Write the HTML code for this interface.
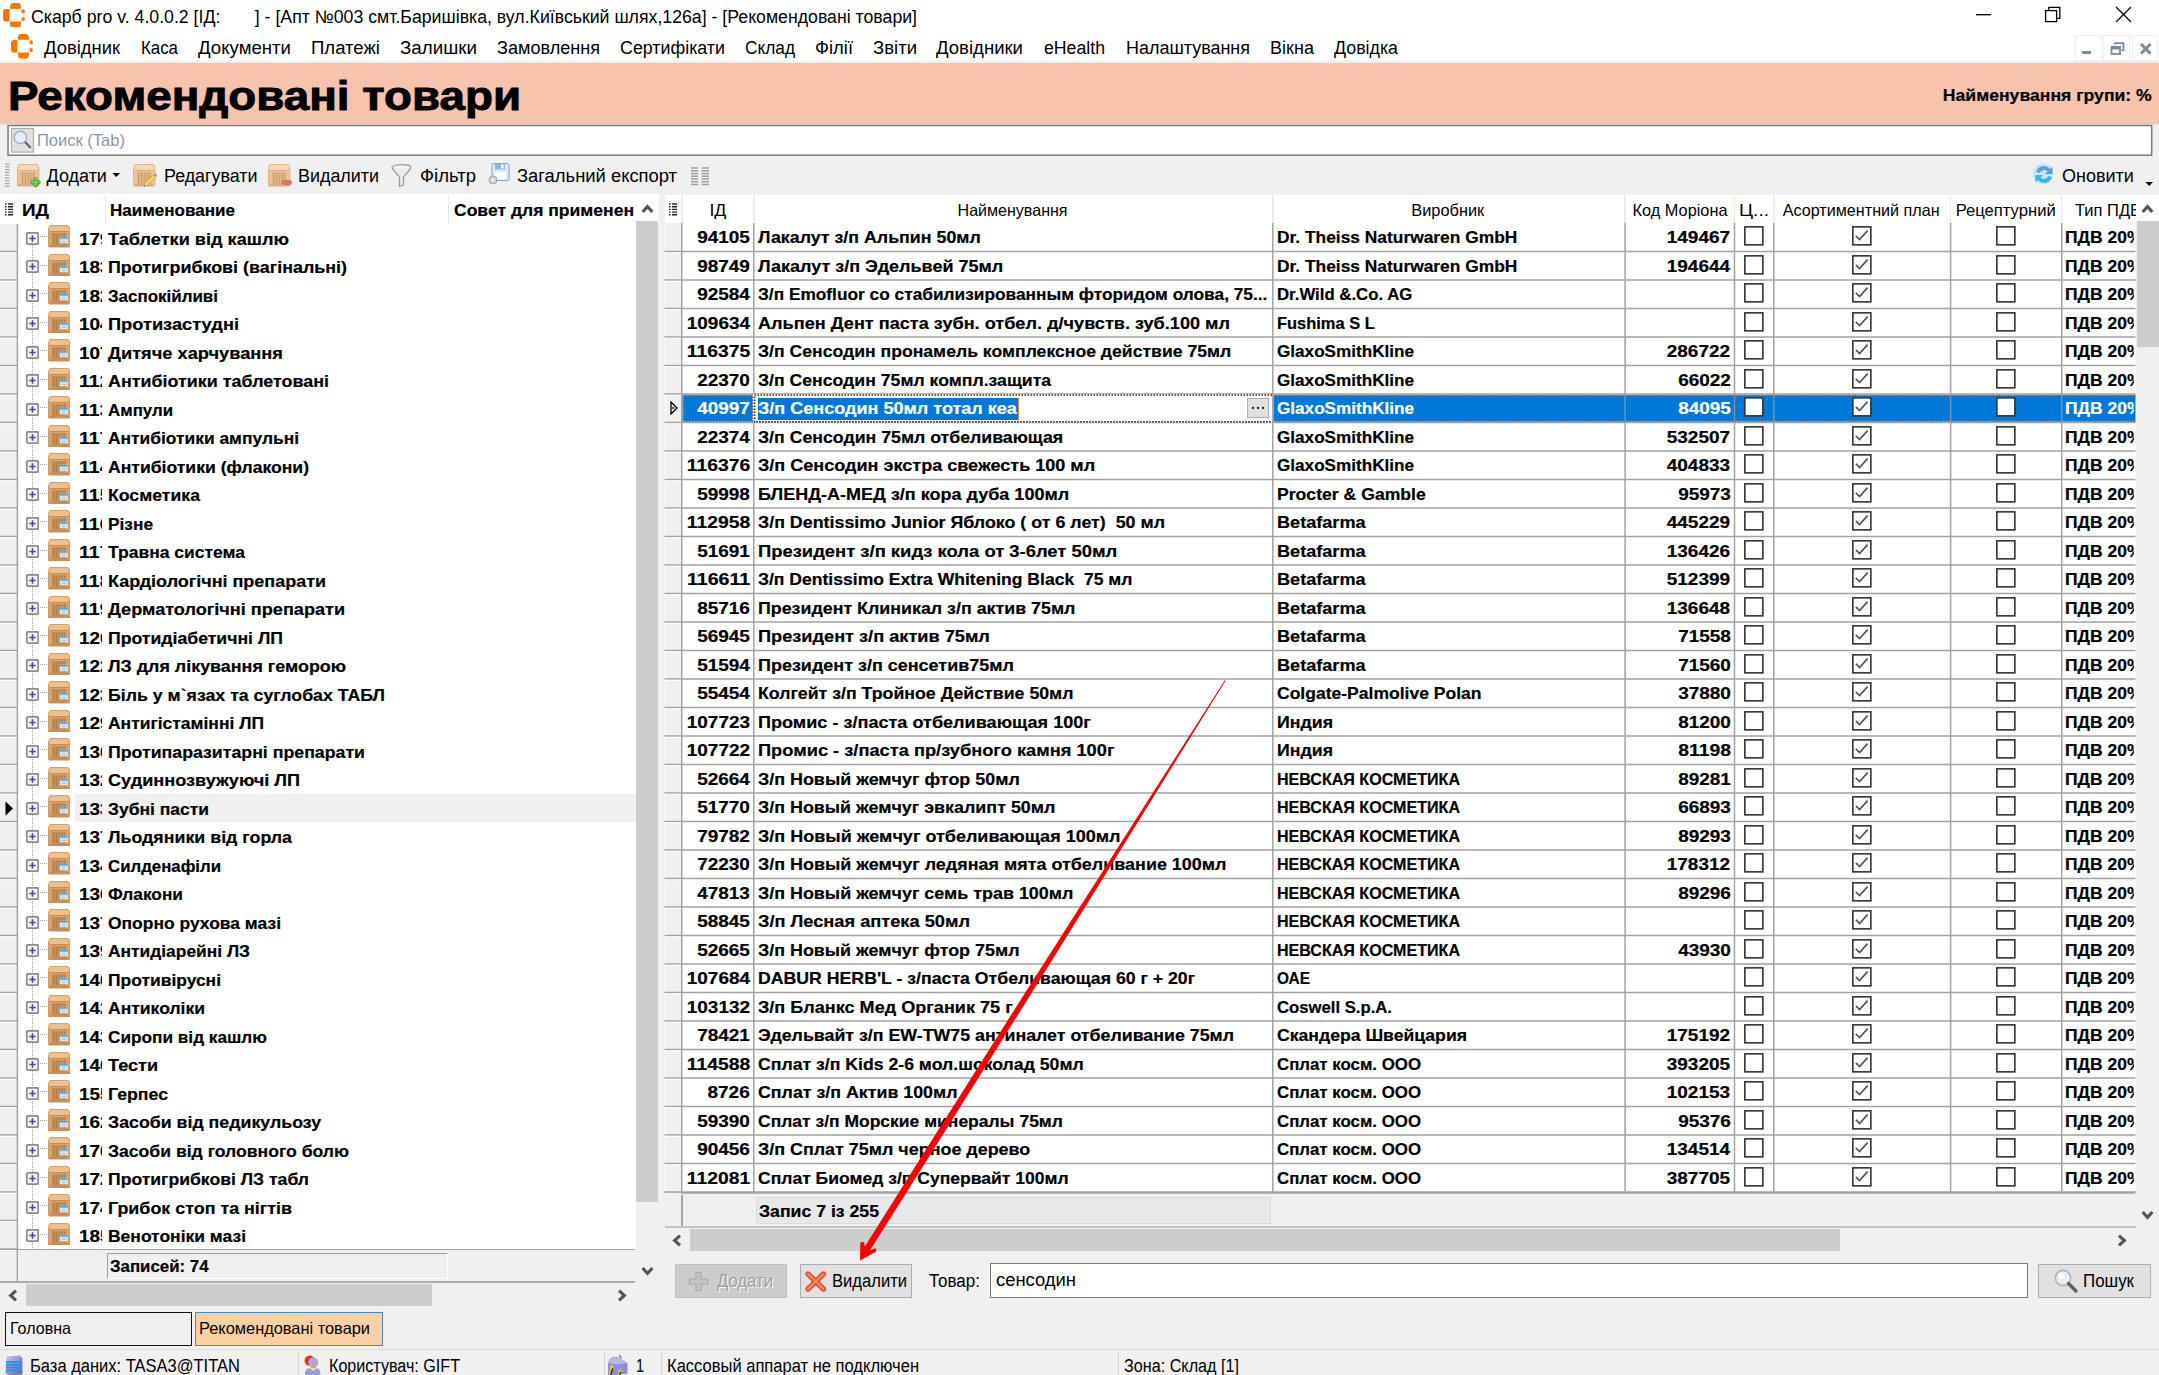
<!DOCTYPE html>
<html lang="uk"><head><meta charset="utf-8"><title>Скарб pro</title><style>html,body{margin:0;padding:0}
body{width:2159px;height:1375px;position:relative;overflow:hidden;background:#f0f0f0;font-family:"Liberation Sans",sans-serif;color:#000}
div,svg,span{position:absolute}
span{white-space:pre;line-height:30px;height:30px}
</style></head><body>
<div style="left:0px;top:0px;width:2159px;height:32px;background:#fff;"></div>
<svg style="left:2.9px;top:2.8px" width="22" height="24.5" viewBox="0 0 22 24.5"><g fill="#ff7400"><path d="M6.7 5.8L7.3 2Q7.7 0 9.7 0H15.2Q17.2 0 17.6 2L18.2 5.8Z"/><path d="M6.7 18.6L7.3 22.4Q7.7 24.4 9.7 24.4H15.2Q17.2 24.4 17.6 22.4L18.2 18.6Z"/><path d="M6.5 5.9H3.2Q0 5.9 0 9V15.4Q0 18.5 3.2 18.5H6.5Z"/><ellipse cx="20.1" cy="8.4" rx="1.75" ry="2.1"/><ellipse cx="20.1" cy="16" rx="1.75" ry="2.1"/></g></svg>
<span style="left:31.00px;top:1.50px;font-size:18px;transform:scaleX(0.9835);transform-origin:0 50%;">Скарб pro v. 4.0.0.2 [ІД:       ] - [Апт №003 смт.Баришівка, вул.Київський шлях,126а] - [Рекомендовані товари]</span>
<svg style="left:1970px;top:0px" width="170" height="32" viewBox="0 0 170 32"><g stroke="#000" stroke-width="1.3" fill="none"><path d="M6 14.7H21"/><rect x="75.6" y="10.6" width="11" height="11" fill="#fff"/><path d="M78.8 10.6V7.4H89.8V18.4H86.6"/><path d="M146 7L161 22M161 7L146 22"/></g></svg>
<div style="left:0px;top:32px;width:2159px;height:29px;background:#fff;"></div>
<svg style="left:11.1px;top:34.2px" width="22" height="24.5" viewBox="0 0 22 24.5"><g fill="#ff7400"><path d="M6.7 5.8L7.3 2Q7.7 0 9.7 0H15.2Q17.2 0 17.6 2L18.2 5.8Z"/><path d="M6.7 18.6L7.3 22.4Q7.7 24.4 9.7 24.4H15.2Q17.2 24.4 17.6 22.4L18.2 18.6Z"/><path d="M6.5 5.9H3.2Q0 5.9 0 9V15.4Q0 18.5 3.2 18.5H6.5Z"/><ellipse cx="20.1" cy="8.4" rx="1.75" ry="2.1"/><ellipse cx="20.1" cy="16" rx="1.75" ry="2.1"/></g></svg>
<span style="left:44.00px;top:32.50px;font-size:18px;transform:scaleX(1.0223);transform-origin:0 50%;">Довідник</span>
<span style="left:141.00px;top:32.50px;font-size:18px;transform:scaleX(0.9363);transform-origin:0 50%;">Каса</span>
<span style="left:198.00px;top:32.50px;font-size:18px;transform:scaleX(1.0344);transform-origin:0 50%;">Документи</span>
<span style="left:311.00px;top:32.50px;font-size:18px;transform:scaleX(1.0306);transform-origin:0 50%;">Платежі</span>
<span style="left:400.00px;top:32.50px;font-size:18px;transform:scaleX(1.0432);transform-origin:0 50%;">Залишки</span>
<span style="left:497.00px;top:32.50px;font-size:18px;transform:scaleX(1.0043);transform-origin:0 50%;">Замовлення</span>
<span style="left:620.00px;top:32.50px;font-size:18px;transform:scaleX(0.9913);transform-origin:0 50%;">Сертифікати</span>
<span style="left:745.00px;top:32.50px;font-size:18px;transform:scaleX(0.9598);transform-origin:0 50%;">Склад</span>
<span style="left:815.00px;top:32.50px;font-size:18px;transform:scaleX(1.0218);transform-origin:0 50%;">Філії</span>
<span style="left:873.00px;top:32.50px;font-size:18px;transform:scaleX(1.0296);transform-origin:0 50%;">Звіти</span>
<span style="left:936.00px;top:32.50px;font-size:18px;transform:scaleX(1.0307);transform-origin:0 50%;">Довідники</span>
<span style="left:1044.00px;top:32.50px;font-size:18px;transform:scaleX(0.9831);transform-origin:0 50%;">eHealth</span>
<span style="left:1126.00px;top:32.50px;font-size:18px;transform:scaleX(0.9966);transform-origin:0 50%;">Налаштування</span>
<span style="left:1270.00px;top:32.50px;font-size:18px;transform:scaleX(1.0036);transform-origin:0 50%;">Вікна</span>
<span style="left:1334.00px;top:32.50px;font-size:18px;transform:scaleX(0.9884);transform-origin:0 50%;">Довідка</span>
<div style="left:2075px;top:35px;width:26.5px;height:26px;background:#fff;border:1.5px solid #f0f0f0;box-sizing:border-box;"></div>
<div style="left:2103px;top:35px;width:26.5px;height:26px;background:#fff;border:1.5px solid #f0f0f0;box-sizing:border-box;"></div>
<div style="left:2131.5px;top:35px;width:26.5px;height:26px;background:#fff;border:1.5px solid #f0f0f0;box-sizing:border-box;"></div>
<svg style="left:2075px;top:35px" width="84" height="26" viewBox="0 0 84 26"><g fill="none" stroke="#7b8a9c"><path d="M7 17.5H16" stroke-width="3"/><rect x="36.5" y="12" width="8.5" height="7" stroke-width="1.8"/><path d="M36.5 13H45" stroke-width="3"/><path d="M40 9.5V8.2H48.5V15H46.5" stroke-width="1.8"/><path d="M66 9L75.5 18.5M75.5 9L66 18.5" stroke-width="3"/></g></svg>
<svg style="left:0;top:60px" width="2159" height="100" viewBox="0 60 2159 100"><rect x="0" y="62.9" width="2159" height="61.5" fill="#f7c3ad"/><rect x="8.05" y="125.5" width="2143.6" height="29.7" fill="#fff" stroke="#7a7a7a" stroke-width="1.5"/><rect x="11.5" y="128.5" width="22" height="23.6" fill="#e1e1e1" stroke="#adadad" stroke-width="1.2"/><circle cx="20.4" cy="137.4" r="6.2" fill="#e6eefb" stroke="#9fadc2" stroke-width="1.5"/><path d="M25.6 142.6L30.2 147.2" stroke="#666" stroke-width="2.3" stroke-linecap="round"/></svg>
<span style="left:8.00px;top:80.50px;font-weight:bold;font-size:40px;-webkit-text-stroke:0.9px #000;transform:scaleX(1.1434);transform-origin:0 50%;">Рекомендовані товари</span>
<span style="left:1956.22px;top:79.50px;font-weight:bold;font-size:16.5px;-webkit-text-stroke:0.2px;transform:scaleX(1.0675);transform-origin:100% 50%;">Найменування групи: %</span>
<span style="left:37.00px;top:125.00px;font-size:16.5px;color:#8f94ae;">Поиск (Tab)</span>
<svg style="left:5px;top:163px" width="5" height="24" viewBox="0 0 5 24"><path d="M0 1.0H4.5" stroke="#a8a8a8" stroke-width="1.3"/><path d="M0 3.8H4.5" stroke="#a8a8a8" stroke-width="1.3"/><path d="M0 6.6H4.5" stroke="#a8a8a8" stroke-width="1.3"/><path d="M0 9.399999999999999H4.5" stroke="#a8a8a8" stroke-width="1.3"/><path d="M0 12.2H4.5" stroke="#a8a8a8" stroke-width="1.3"/><path d="M0 15.0H4.5" stroke="#a8a8a8" stroke-width="1.3"/><path d="M0 17.799999999999997H4.5" stroke="#a8a8a8" stroke-width="1.3"/><path d="M0 20.599999999999998H4.5" stroke="#a8a8a8" stroke-width="1.3"/><path d="M0 23.4H4.5" stroke="#a8a8a8" stroke-width="1.3"/></svg>
<svg style="left:16.5px;top:163.5px" width="26" height="25" viewBox="0 0 26 25"><path d="M3 0.4H19.3Q20.4 0.4 20.9 1.3L21.9 4.6V21Q21.9 22.1 20.8 22.1H1.5Q0.4 22.1 0.4 21V4.6L1.4 1.3Q1.9 0.4 3 0.4Z" fill="#ecc49a" stroke="#d7a878" stroke-width="0.8"/><path d="M3.1 0.9H19.2Q20 0.9 20.4 1.6L21.4 4.8L19.9 6.2H2.4L0.9 4.8L1.9 1.6Q2.3 0.9 3.1 0.9Z" fill="#f6d8b5"/><path d="M2.3 6.5H20" stroke="#d3a475" stroke-width="0.8"/><rect x="4.1" y="8.3" width="14.1" height="10.6" fill="#e3b688"/><path d="M5.6 8.3V18.9M8.4 8.3V18.9M11.2 8.3V18.9M14 8.3V18.9M16.8 8.3V18.9" stroke="#cc9b6a" stroke-width="1"/><path d="M0.8 21.1Q0.9 21.8 1.6 21.8H20.7Q21.4 21.8 21.5 21.1L18.2 18.9H4.1Z" fill="#d3a475" opacity=".7"/><g stroke="#35a035" stroke-width="4.2" stroke-linecap="round"><path d="M15.600000000000001 18.3H21.6M18.6 15.3V21.3"/></g><g stroke="#6fd24f" stroke-width="2.4" stroke-linecap="round"><path d="M15.600000000000001 18.3H21.6M18.6 15.3V21.3"/></g></svg>
<span style="left:46.50px;top:161.00px;font-size:18px;">Додати</span>
<svg style="left:112px;top:172px" width="9" height="6" viewBox="0 0 9 6"><path d="M0.5 1H8L4.25 5Z" fill="#000"/></svg>
<svg style="left:133px;top:163.5px" width="26" height="25" viewBox="0 0 26 25"><path d="M3 0.4H19.3Q20.4 0.4 20.9 1.3L21.9 4.6V21Q21.9 22.1 20.8 22.1H1.5Q0.4 22.1 0.4 21V4.6L1.4 1.3Q1.9 0.4 3 0.4Z" fill="#ecc49a" stroke="#d7a878" stroke-width="0.8"/><path d="M3.1 0.9H19.2Q20 0.9 20.4 1.6L21.4 4.8L19.9 6.2H2.4L0.9 4.8L1.9 1.6Q2.3 0.9 3.1 0.9Z" fill="#f6d8b5"/><path d="M2.3 6.5H20" stroke="#d3a475" stroke-width="0.8"/><rect x="4.1" y="8.3" width="14.1" height="10.6" fill="#e3b688"/><path d="M5.6 8.3V18.9M8.4 8.3V18.9M11.2 8.3V18.9M14 8.3V18.9M16.8 8.3V18.9" stroke="#cc9b6a" stroke-width="1"/><path d="M0.8 21.1Q0.9 21.8 1.6 21.8H20.7Q21.4 21.8 21.5 21.1L18.2 18.9H4.1Z" fill="#d3a475" opacity=".7"/><path d="M11 22.5L12.6 18.4L20.6 10.4L23 12.8L15 20.8Z" fill="#f0d860" stroke="#b39a3a" stroke-width="0.6"/><path d="M20.6 10.4L21.8 9.2L24.2 11.6L23 12.8Z" fill="#ee7070"/><path d="M11 22.5L12.6 18.4L15 20.8Z" fill="#ecd2ac"/><path d="M11 22.5l.6-1.6 1 1z" fill="#333"/></svg>
<span style="left:163.50px;top:161.00px;font-size:18px;transform:scaleX(0.9927);transform-origin:0 50%;">Редагувати</span>
<svg style="left:268px;top:163.5px" width="26" height="25" viewBox="0 0 26 25"><path d="M3 0.4H19.3Q20.4 0.4 20.9 1.3L21.9 4.6V21Q21.9 22.1 20.8 22.1H1.5Q0.4 22.1 0.4 21V4.6L1.4 1.3Q1.9 0.4 3 0.4Z" fill="#ecc49a" stroke="#d7a878" stroke-width="0.8"/><path d="M3.1 0.9H19.2Q20 0.9 20.4 1.6L21.4 4.8L19.9 6.2H2.4L0.9 4.8L1.9 1.6Q2.3 0.9 3.1 0.9Z" fill="#f6d8b5"/><path d="M2.3 6.5H20" stroke="#d3a475" stroke-width="0.8"/><rect x="4.1" y="8.3" width="14.1" height="10.6" fill="#e3b688"/><path d="M5.6 8.3V18.9M8.4 8.3V18.9M11.2 8.3V18.9M14 8.3V18.9M16.8 8.3V18.9" stroke="#cc9b6a" stroke-width="1"/><path d="M0.8 21.1Q0.9 21.8 1.6 21.8H20.7Q21.4 21.8 21.5 21.1L18.2 18.9H4.1Z" fill="#d3a475" opacity=".7"/><rect x="14" y="16.6" width="9.6" height="3.8" rx="1.9" fill="#ea7474" stroke="#d05050" stroke-width="0.7"/></svg>
<span style="left:298.00px;top:161.00px;font-size:18px;transform:scaleX(0.9946);transform-origin:0 50%;">Видалити</span>
<svg style="left:390px;top:163px" width="24" height="26" viewBox="0 0 24 26"><ellipse cx="11.5" cy="4.5" rx="9.5" ry="2.8" fill="#f4f4f4" stroke="#9a9a9a" stroke-width="1.2"/><path d="M2.2 5.5L9.5 14V23.5L13.5 22V14L20.8 5.5" fill="#ececec" stroke="#9a9a9a" stroke-width="1.2"/></svg>
<span style="left:420.00px;top:161.00px;font-size:18px;transform:scaleX(1.0290);transform-origin:0 50%;">Фільтр</span>
<svg style="left:487px;top:162px" width="24" height="26" viewBox="0 0 24 26"><rect x="5" y="1.5" width="17" height="17" rx="1.5" fill="#dfeaf5" stroke="#7fa3c8"/><rect x="8" y="1.5" width="10" height="6" fill="#8fb4dc"/><rect x="14" y="2.5" width="2.5" height="4" fill="#fff"/><rect x="8" y="10.5" width="11" height="7" fill="#fff"/><circle cx="6" cy="18" r="4" fill="#c9d3dd" stroke="#9aa6b2"/><circle cx="6" cy="18" r="1.4" fill="#eef2f6"/></svg>
<span style="left:517.00px;top:161.00px;font-size:18px;transform:scaleX(1.0210);transform-origin:0 50%;">Загальний експорт</span>
<svg style="left:691px;top:167px" width="19" height="19" viewBox="0 0 19 19"><path d="M0 1.0H7M10.5 1.0H18" stroke="#a0a0a0" stroke-width="1.3"/><path d="M0 3.75H7M10.5 3.75H18" stroke="#a0a0a0" stroke-width="1.3"/><path d="M0 6.5H7M10.5 6.5H18" stroke="#a0a0a0" stroke-width="1.3"/><path d="M0 9.25H7M10.5 9.25H18" stroke="#a0a0a0" stroke-width="1.3"/><path d="M0 12.0H7M10.5 12.0H18" stroke="#a0a0a0" stroke-width="1.3"/><path d="M0 14.75H7M10.5 14.75H18" stroke="#a0a0a0" stroke-width="1.3"/><path d="M0 17.5H7M10.5 17.5H18" stroke="#a0a0a0" stroke-width="1.3"/></svg>
<svg style="left:2031px;top:162px" width="26" height="26" viewBox="0 0 26 26"><circle cx="12" cy="12" r="10.5" fill="#cfe3f5"/><path d="M5 10A8 8 0 0 1 19 7L21.5 4.5V12H14L16.5 9.5A5 5 0 0 0 8.5 11Z" fill="#5aa0dc"/><path d="M21 15A8 8 0 0 1 7 18L4.5 20.5V13H12L9.5 15.5A5 5 0 0 0 17.5 14Z" fill="#3cb4e6"/></svg>
<span style="left:2062.00px;top:161.30px;font-size:18px;">Оновити</span>
<svg style="left:2145px;top:181px" width="9" height="6" viewBox="0 0 9 6"><path d="M0.5 1H8L4.25 5Z" fill="#000"/></svg>
<div style="left:0px;top:194px;width:658.5px;height:30px;background:#fff;"></div>
<div style="left:0px;top:224px;width:636px;height:1026px;background:#fff;"></div>
<svg style="left:5px;top:203px" width="9" height="13" viewBox="0 0 9 13"><path d="M0 1.0H1.6M3 1.0H8" stroke="#222" stroke-width="1.4"/><path d="M0 3.7H1.6M3 3.7H8" stroke="#222" stroke-width="1.4"/><path d="M0 6.4H1.6M3 6.4H8" stroke="#222" stroke-width="1.4"/><path d="M0 9.100000000000001H1.6M3 9.100000000000001H8" stroke="#222" stroke-width="1.4"/><path d="M0 11.8H1.6M3 11.8H8" stroke="#222" stroke-width="1.4"/></svg>
<span style="left:22.00px;top:194.50px;font-weight:bold;font-size:16.5px;-webkit-text-stroke:0.2px;transform:scaleX(1.1429);transform-origin:0 50%;">ИД</span>
<div style="left:104.5px;top:195px;width:1.5px;height:28px;background:#e8e8e8;"></div>
<span style="left:110.00px;top:194.50px;font-weight:bold;font-size:16.5px;-webkit-text-stroke:0.2px;transform:scaleX(1.0325);transform-origin:0 50%;">Наименование</span>
<div style="left:447.5px;top:195px;width:1.5px;height:28px;background:#e8e8e8;"></div>
<div style="left:454px;top:194px;width:180.5px;height:30px;overflow:hidden">
<span style="left:0.00px;top:0.50px;font-weight:bold;font-size:16.5px;-webkit-text-stroke:0.2px;transform:scaleX(1.0625);transform-origin:0 50%;">Совет для применен</span>
</div>
<div style="left:0px;top:224px;width:17px;height:1058px;background:#f0f0f0;"></div>
<svg style="left:0;top:0" width="40" height="1375" viewBox="0 0 40 1375"><path d="M0 251.50H17" stroke="#a2a2a2" stroke-width="1.5"/><path d="M0 252.80H16.5" stroke="#fff" stroke-width="1"/><path d="M0 280.00H17" stroke="#a2a2a2" stroke-width="1.5"/><path d="M0 281.30H16.5" stroke="#fff" stroke-width="1"/><path d="M0 308.50H17" stroke="#a2a2a2" stroke-width="1.5"/><path d="M0 309.80H16.5" stroke="#fff" stroke-width="1"/><path d="M0 337.00H17" stroke="#a2a2a2" stroke-width="1.5"/><path d="M0 338.30H16.5" stroke="#fff" stroke-width="1"/><path d="M0 365.50H17" stroke="#a2a2a2" stroke-width="1.5"/><path d="M0 366.80H16.5" stroke="#fff" stroke-width="1"/><path d="M0 394.00H17" stroke="#a2a2a2" stroke-width="1.5"/><path d="M0 395.30H16.5" stroke="#fff" stroke-width="1"/><path d="M0 422.50H17" stroke="#a2a2a2" stroke-width="1.5"/><path d="M0 423.80H16.5" stroke="#fff" stroke-width="1"/><path d="M0 451.00H17" stroke="#a2a2a2" stroke-width="1.5"/><path d="M0 452.30H16.5" stroke="#fff" stroke-width="1"/><path d="M0 479.50H17" stroke="#a2a2a2" stroke-width="1.5"/><path d="M0 480.80H16.5" stroke="#fff" stroke-width="1"/><path d="M0 508.00H17" stroke="#a2a2a2" stroke-width="1.5"/><path d="M0 509.30H16.5" stroke="#fff" stroke-width="1"/><path d="M0 536.50H17" stroke="#a2a2a2" stroke-width="1.5"/><path d="M0 537.80H16.5" stroke="#fff" stroke-width="1"/><path d="M0 565.00H17" stroke="#a2a2a2" stroke-width="1.5"/><path d="M0 566.30H16.5" stroke="#fff" stroke-width="1"/><path d="M0 593.50H17" stroke="#a2a2a2" stroke-width="1.5"/><path d="M0 594.80H16.5" stroke="#fff" stroke-width="1"/><path d="M0 622.00H17" stroke="#a2a2a2" stroke-width="1.5"/><path d="M0 623.30H16.5" stroke="#fff" stroke-width="1"/><path d="M0 650.50H17" stroke="#a2a2a2" stroke-width="1.5"/><path d="M0 651.80H16.5" stroke="#fff" stroke-width="1"/><path d="M0 679.00H17" stroke="#a2a2a2" stroke-width="1.5"/><path d="M0 680.30H16.5" stroke="#fff" stroke-width="1"/><path d="M0 707.50H17" stroke="#a2a2a2" stroke-width="1.5"/><path d="M0 708.80H16.5" stroke="#fff" stroke-width="1"/><path d="M0 736.00H17" stroke="#a2a2a2" stroke-width="1.5"/><path d="M0 737.30H16.5" stroke="#fff" stroke-width="1"/><path d="M0 764.50H17" stroke="#a2a2a2" stroke-width="1.5"/><path d="M0 765.80H16.5" stroke="#fff" stroke-width="1"/><path d="M0 793.00H17" stroke="#a2a2a2" stroke-width="1.5"/><path d="M0 794.30H16.5" stroke="#fff" stroke-width="1"/><path d="M0 821.50H17" stroke="#a2a2a2" stroke-width="1.5"/><path d="M0 822.80H16.5" stroke="#fff" stroke-width="1"/><path d="M0 850.00H17" stroke="#a2a2a2" stroke-width="1.5"/><path d="M0 851.30H16.5" stroke="#fff" stroke-width="1"/><path d="M0 878.50H17" stroke="#a2a2a2" stroke-width="1.5"/><path d="M0 879.80H16.5" stroke="#fff" stroke-width="1"/><path d="M0 907.00H17" stroke="#a2a2a2" stroke-width="1.5"/><path d="M0 908.30H16.5" stroke="#fff" stroke-width="1"/><path d="M0 935.50H17" stroke="#a2a2a2" stroke-width="1.5"/><path d="M0 936.80H16.5" stroke="#fff" stroke-width="1"/><path d="M0 964.00H17" stroke="#a2a2a2" stroke-width="1.5"/><path d="M0 965.30H16.5" stroke="#fff" stroke-width="1"/><path d="M0 992.50H17" stroke="#a2a2a2" stroke-width="1.5"/><path d="M0 993.80H16.5" stroke="#fff" stroke-width="1"/><path d="M0 1021.00H17" stroke="#a2a2a2" stroke-width="1.5"/><path d="M0 1022.30H16.5" stroke="#fff" stroke-width="1"/><path d="M0 1049.50H17" stroke="#a2a2a2" stroke-width="1.5"/><path d="M0 1050.80H16.5" stroke="#fff" stroke-width="1"/><path d="M0 1078.00H17" stroke="#a2a2a2" stroke-width="1.5"/><path d="M0 1079.30H16.5" stroke="#fff" stroke-width="1"/><path d="M0 1106.50H17" stroke="#a2a2a2" stroke-width="1.5"/><path d="M0 1107.80H16.5" stroke="#fff" stroke-width="1"/><path d="M0 1135.00H17" stroke="#a2a2a2" stroke-width="1.5"/><path d="M0 1136.30H16.5" stroke="#fff" stroke-width="1"/><path d="M0 1163.50H17" stroke="#a2a2a2" stroke-width="1.5"/><path d="M0 1164.80H16.5" stroke="#fff" stroke-width="1"/><path d="M0 1192.00H17" stroke="#a2a2a2" stroke-width="1.5"/><path d="M0 1193.30H16.5" stroke="#fff" stroke-width="1"/><path d="M0 1220.50H17" stroke="#a2a2a2" stroke-width="1.5"/><path d="M0 1221.80H16.5" stroke="#fff" stroke-width="1"/><path d="M0 1249.00H17" stroke="#a2a2a2" stroke-width="1.5"/><path d="M0 1250.30H16.5" stroke="#fff" stroke-width="1"/><path d="M17.4 224V1282" stroke="#a2a2a2" stroke-width="1.5"/></svg>
<div style="left:75px;top:793.8px;width:561px;height:28.2px;background:#f0f0f0;"></div>
<svg style="left:5px;top:800.5px" width="9" height="15" viewBox="0 0 9 15"><path d="M0.5 0.5L8 7.5L0.5 14.5Z" fill="#000"/></svg>
<div style="left:31.5px;top:245px;width:0;height:1005px;border-left:1.5px dotted #a6a6a6"></div>
<svg style="left:25.75px;top:231.55px" width="13" height="13" viewBox="0 0 13 13"><rect x="0.75" y="0.75" width="11.5" height="11.5" rx="1.6" fill="#f4f4f4" stroke="#8c8c8c" stroke-width="1.8"/><path d="M3.3 6.5H9.7M6.5 3.3V9.7" stroke="#3c50a8" stroke-width="1.6"/></svg>
<div style="left:39.5px;top:236.05px;width:7px;height:0;border-top:1.5px dotted #a6a6a6"></div>
<svg style="left:48.1px;top:225.0px" width="22.3" height="22.5" viewBox="0 0 22.3 22.5"><path d="M3 0.4H19.3Q20.4 0.4 20.9 1.3L21.9 4.6V21Q21.9 22.1 20.8 22.1H1.5Q0.4 22.1 0.4 21V4.6L1.4 1.3Q1.9 0.4 3 0.4Z" fill="#d9a26b" stroke="#c48e57" stroke-width="0.8"/><path d="M3.1 0.9H19.2Q20 0.9 20.4 1.6L21.4 4.8L19.9 6.2H2.4L0.9 4.8L1.9 1.6Q2.3 0.9 3.1 0.9Z" fill="#edc08e"/><path d="M2.3 6.5H20" stroke="#bd8751" stroke-width="0.8"/><rect x="4.1" y="8.3" width="14.1" height="10.6" fill="#c68f58"/><path d="M5.6 8.3V18.9M8.4 8.3V18.9M11.2 8.3V18.9M14 8.3V18.9M16.8 8.3V18.9" stroke="#ae7a47" stroke-width="1"/><path d="M0.8 21.1Q0.9 21.8 1.6 21.8H20.7Q21.4 21.8 21.5 21.1L18.2 18.9H4.1Z" fill="#bd8751" opacity=".7"/><rect x="11.6" y="11.8" width="8.2" height="6.5" fill="#dfeaf1"/><rect x="11.6" y="11.8" width="8.2" height="2" fill="#45a9f3"/><rect x="11.6" y="13.8" width="8.2" height="0.8" fill="#a8d8f8"/><path d="M13.4 16.4H18" stroke="#a9bccb" stroke-width="1"/></svg>
<div style="left:78px;top:224.25px;width:24px;height:28px;overflow:hidden">
<span style="left:1.00px;top:-0.70px;font-weight:bold;font-size:16.5px;-webkit-text-stroke:0.2px;transform:scaleX(1.1442);transform-origin:0 50%;">179</span>
</div>
<span style="left:108.00px;top:223.55px;font-weight:bold;font-size:16.5px;-webkit-text-stroke:0.2px;transform:scaleX(1.1005);transform-origin:0 50%;">Таблетки від кашлю</span>
<svg style="left:25.75px;top:260.05px" width="13" height="13" viewBox="0 0 13 13"><rect x="0.75" y="0.75" width="11.5" height="11.5" rx="1.6" fill="#f4f4f4" stroke="#8c8c8c" stroke-width="1.8"/><path d="M3.3 6.5H9.7M6.5 3.3V9.7" stroke="#3c50a8" stroke-width="1.6"/></svg>
<div style="left:39.5px;top:264.55px;width:7px;height:0;border-top:1.5px dotted #a6a6a6"></div>
<svg style="left:48.1px;top:253.5px" width="22.3" height="22.5" viewBox="0 0 22.3 22.5"><path d="M3 0.4H19.3Q20.4 0.4 20.9 1.3L21.9 4.6V21Q21.9 22.1 20.8 22.1H1.5Q0.4 22.1 0.4 21V4.6L1.4 1.3Q1.9 0.4 3 0.4Z" fill="#d9a26b" stroke="#c48e57" stroke-width="0.8"/><path d="M3.1 0.9H19.2Q20 0.9 20.4 1.6L21.4 4.8L19.9 6.2H2.4L0.9 4.8L1.9 1.6Q2.3 0.9 3.1 0.9Z" fill="#edc08e"/><path d="M2.3 6.5H20" stroke="#bd8751" stroke-width="0.8"/><rect x="4.1" y="8.3" width="14.1" height="10.6" fill="#c68f58"/><path d="M5.6 8.3V18.9M8.4 8.3V18.9M11.2 8.3V18.9M14 8.3V18.9M16.8 8.3V18.9" stroke="#ae7a47" stroke-width="1"/><path d="M0.8 21.1Q0.9 21.8 1.6 21.8H20.7Q21.4 21.8 21.5 21.1L18.2 18.9H4.1Z" fill="#bd8751" opacity=".7"/><rect x="11.6" y="11.8" width="8.2" height="6.5" fill="#dfeaf1"/><rect x="11.6" y="11.8" width="8.2" height="2" fill="#45a9f3"/><rect x="11.6" y="13.8" width="8.2" height="0.8" fill="#a8d8f8"/><path d="M13.4 16.4H18" stroke="#a9bccb" stroke-width="1"/></svg>
<div style="left:78px;top:252.75px;width:24px;height:28px;overflow:hidden">
<span style="left:1.00px;top:-0.70px;font-weight:bold;font-size:16.5px;-webkit-text-stroke:0.2px;transform:scaleX(1.1442);transform-origin:0 50%;">183</span>
</div>
<span style="left:108.00px;top:252.05px;font-weight:bold;font-size:16.5px;-webkit-text-stroke:0.2px;transform:scaleX(1.0843);transform-origin:0 50%;">Протигрибкові (вагінальні)</span>
<svg style="left:25.75px;top:288.55px" width="13" height="13" viewBox="0 0 13 13"><rect x="0.75" y="0.75" width="11.5" height="11.5" rx="1.6" fill="#f4f4f4" stroke="#8c8c8c" stroke-width="1.8"/><path d="M3.3 6.5H9.7M6.5 3.3V9.7" stroke="#3c50a8" stroke-width="1.6"/></svg>
<div style="left:39.5px;top:293.05px;width:7px;height:0;border-top:1.5px dotted #a6a6a6"></div>
<svg style="left:48.1px;top:282.0px" width="22.3" height="22.5" viewBox="0 0 22.3 22.5"><path d="M3 0.4H19.3Q20.4 0.4 20.9 1.3L21.9 4.6V21Q21.9 22.1 20.8 22.1H1.5Q0.4 22.1 0.4 21V4.6L1.4 1.3Q1.9 0.4 3 0.4Z" fill="#d9a26b" stroke="#c48e57" stroke-width="0.8"/><path d="M3.1 0.9H19.2Q20 0.9 20.4 1.6L21.4 4.8L19.9 6.2H2.4L0.9 4.8L1.9 1.6Q2.3 0.9 3.1 0.9Z" fill="#edc08e"/><path d="M2.3 6.5H20" stroke="#bd8751" stroke-width="0.8"/><rect x="4.1" y="8.3" width="14.1" height="10.6" fill="#c68f58"/><path d="M5.6 8.3V18.9M8.4 8.3V18.9M11.2 8.3V18.9M14 8.3V18.9M16.8 8.3V18.9" stroke="#ae7a47" stroke-width="1"/><path d="M0.8 21.1Q0.9 21.8 1.6 21.8H20.7Q21.4 21.8 21.5 21.1L18.2 18.9H4.1Z" fill="#bd8751" opacity=".7"/><rect x="11.6" y="11.8" width="8.2" height="6.5" fill="#dfeaf1"/><rect x="11.6" y="11.8" width="8.2" height="2" fill="#45a9f3"/><rect x="11.6" y="13.8" width="8.2" height="0.8" fill="#a8d8f8"/><path d="M13.4 16.4H18" stroke="#a9bccb" stroke-width="1"/></svg>
<div style="left:78px;top:281.25px;width:24px;height:28px;overflow:hidden">
<span style="left:1.00px;top:-0.70px;font-weight:bold;font-size:16.5px;-webkit-text-stroke:0.2px;transform:scaleX(1.1442);transform-origin:0 50%;">182</span>
</div>
<span style="left:108.00px;top:280.55px;font-weight:bold;font-size:16.5px;-webkit-text-stroke:0.2px;transform:scaleX(1.0273);transform-origin:0 50%;">Заспокійливі</span>
<svg style="left:25.75px;top:317.05px" width="13" height="13" viewBox="0 0 13 13"><rect x="0.75" y="0.75" width="11.5" height="11.5" rx="1.6" fill="#f4f4f4" stroke="#8c8c8c" stroke-width="1.8"/><path d="M3.3 6.5H9.7M6.5 3.3V9.7" stroke="#3c50a8" stroke-width="1.6"/></svg>
<div style="left:39.5px;top:321.55px;width:7px;height:0;border-top:1.5px dotted #a6a6a6"></div>
<svg style="left:48.1px;top:310.5px" width="22.3" height="22.5" viewBox="0 0 22.3 22.5"><path d="M3 0.4H19.3Q20.4 0.4 20.9 1.3L21.9 4.6V21Q21.9 22.1 20.8 22.1H1.5Q0.4 22.1 0.4 21V4.6L1.4 1.3Q1.9 0.4 3 0.4Z" fill="#d9a26b" stroke="#c48e57" stroke-width="0.8"/><path d="M3.1 0.9H19.2Q20 0.9 20.4 1.6L21.4 4.8L19.9 6.2H2.4L0.9 4.8L1.9 1.6Q2.3 0.9 3.1 0.9Z" fill="#edc08e"/><path d="M2.3 6.5H20" stroke="#bd8751" stroke-width="0.8"/><rect x="4.1" y="8.3" width="14.1" height="10.6" fill="#c68f58"/><path d="M5.6 8.3V18.9M8.4 8.3V18.9M11.2 8.3V18.9M14 8.3V18.9M16.8 8.3V18.9" stroke="#ae7a47" stroke-width="1"/><path d="M0.8 21.1Q0.9 21.8 1.6 21.8H20.7Q21.4 21.8 21.5 21.1L18.2 18.9H4.1Z" fill="#bd8751" opacity=".7"/><rect x="11.6" y="11.8" width="8.2" height="6.5" fill="#dfeaf1"/><rect x="11.6" y="11.8" width="8.2" height="2" fill="#45a9f3"/><rect x="11.6" y="13.8" width="8.2" height="0.8" fill="#a8d8f8"/><path d="M13.4 16.4H18" stroke="#a9bccb" stroke-width="1"/></svg>
<div style="left:78px;top:309.75px;width:24px;height:28px;overflow:hidden">
<span style="left:1.00px;top:-0.70px;font-weight:bold;font-size:16.5px;-webkit-text-stroke:0.2px;transform:scaleX(1.1442);transform-origin:0 50%;">104</span>
</div>
<span style="left:108.00px;top:309.05px;font-weight:bold;font-size:16.5px;-webkit-text-stroke:0.2px;transform:scaleX(1.1059);transform-origin:0 50%;">Протизастудні</span>
<svg style="left:25.75px;top:345.55px" width="13" height="13" viewBox="0 0 13 13"><rect x="0.75" y="0.75" width="11.5" height="11.5" rx="1.6" fill="#f4f4f4" stroke="#8c8c8c" stroke-width="1.8"/><path d="M3.3 6.5H9.7M6.5 3.3V9.7" stroke="#3c50a8" stroke-width="1.6"/></svg>
<div style="left:39.5px;top:350.05px;width:7px;height:0;border-top:1.5px dotted #a6a6a6"></div>
<svg style="left:48.1px;top:339.0px" width="22.3" height="22.5" viewBox="0 0 22.3 22.5"><path d="M3 0.4H19.3Q20.4 0.4 20.9 1.3L21.9 4.6V21Q21.9 22.1 20.8 22.1H1.5Q0.4 22.1 0.4 21V4.6L1.4 1.3Q1.9 0.4 3 0.4Z" fill="#d9a26b" stroke="#c48e57" stroke-width="0.8"/><path d="M3.1 0.9H19.2Q20 0.9 20.4 1.6L21.4 4.8L19.9 6.2H2.4L0.9 4.8L1.9 1.6Q2.3 0.9 3.1 0.9Z" fill="#edc08e"/><path d="M2.3 6.5H20" stroke="#bd8751" stroke-width="0.8"/><rect x="4.1" y="8.3" width="14.1" height="10.6" fill="#c68f58"/><path d="M5.6 8.3V18.9M8.4 8.3V18.9M11.2 8.3V18.9M14 8.3V18.9M16.8 8.3V18.9" stroke="#ae7a47" stroke-width="1"/><path d="M0.8 21.1Q0.9 21.8 1.6 21.8H20.7Q21.4 21.8 21.5 21.1L18.2 18.9H4.1Z" fill="#bd8751" opacity=".7"/><rect x="11.6" y="11.8" width="8.2" height="6.5" fill="#dfeaf1"/><rect x="11.6" y="11.8" width="8.2" height="2" fill="#45a9f3"/><rect x="11.6" y="13.8" width="8.2" height="0.8" fill="#a8d8f8"/><path d="M13.4 16.4H18" stroke="#a9bccb" stroke-width="1"/></svg>
<div style="left:78px;top:338.25px;width:24px;height:28px;overflow:hidden">
<span style="left:1.00px;top:-0.70px;font-weight:bold;font-size:16.5px;-webkit-text-stroke:0.2px;transform:scaleX(1.1442);transform-origin:0 50%;">107</span>
</div>
<span style="left:108.00px;top:337.55px;font-weight:bold;font-size:16.5px;-webkit-text-stroke:0.2px;transform:scaleX(1.1049);transform-origin:0 50%;">Дитяче харчування</span>
<svg style="left:25.75px;top:374.05px" width="13" height="13" viewBox="0 0 13 13"><rect x="0.75" y="0.75" width="11.5" height="11.5" rx="1.6" fill="#f4f4f4" stroke="#8c8c8c" stroke-width="1.8"/><path d="M3.3 6.5H9.7M6.5 3.3V9.7" stroke="#3c50a8" stroke-width="1.6"/></svg>
<div style="left:39.5px;top:378.55px;width:7px;height:0;border-top:1.5px dotted #a6a6a6"></div>
<svg style="left:48.1px;top:367.5px" width="22.3" height="22.5" viewBox="0 0 22.3 22.5"><path d="M3 0.4H19.3Q20.4 0.4 20.9 1.3L21.9 4.6V21Q21.9 22.1 20.8 22.1H1.5Q0.4 22.1 0.4 21V4.6L1.4 1.3Q1.9 0.4 3 0.4Z" fill="#d9a26b" stroke="#c48e57" stroke-width="0.8"/><path d="M3.1 0.9H19.2Q20 0.9 20.4 1.6L21.4 4.8L19.9 6.2H2.4L0.9 4.8L1.9 1.6Q2.3 0.9 3.1 0.9Z" fill="#edc08e"/><path d="M2.3 6.5H20" stroke="#bd8751" stroke-width="0.8"/><rect x="4.1" y="8.3" width="14.1" height="10.6" fill="#c68f58"/><path d="M5.6 8.3V18.9M8.4 8.3V18.9M11.2 8.3V18.9M14 8.3V18.9M16.8 8.3V18.9" stroke="#ae7a47" stroke-width="1"/><path d="M0.8 21.1Q0.9 21.8 1.6 21.8H20.7Q21.4 21.8 21.5 21.1L18.2 18.9H4.1Z" fill="#bd8751" opacity=".7"/><rect x="11.6" y="11.8" width="8.2" height="6.5" fill="#dfeaf1"/><rect x="11.6" y="11.8" width="8.2" height="2" fill="#45a9f3"/><rect x="11.6" y="13.8" width="8.2" height="0.8" fill="#a8d8f8"/><path d="M13.4 16.4H18" stroke="#a9bccb" stroke-width="1"/></svg>
<div style="left:78px;top:366.75px;width:24px;height:28px;overflow:hidden">
<span style="left:1.00px;top:-0.70px;font-weight:bold;font-size:16.5px;-webkit-text-stroke:0.2px;transform:scaleX(1.1831);transform-origin:0 50%;">112</span>
</div>
<span style="left:108.00px;top:366.05px;font-weight:bold;font-size:16.5px;-webkit-text-stroke:0.2px;transform:scaleX(1.0853);transform-origin:0 50%;">Антибіотики таблетовані</span>
<svg style="left:25.75px;top:402.55px" width="13" height="13" viewBox="0 0 13 13"><rect x="0.75" y="0.75" width="11.5" height="11.5" rx="1.6" fill="#f4f4f4" stroke="#8c8c8c" stroke-width="1.8"/><path d="M3.3 6.5H9.7M6.5 3.3V9.7" stroke="#3c50a8" stroke-width="1.6"/></svg>
<div style="left:39.5px;top:407.05px;width:7px;height:0;border-top:1.5px dotted #a6a6a6"></div>
<svg style="left:48.1px;top:396.0px" width="22.3" height="22.5" viewBox="0 0 22.3 22.5"><path d="M3 0.4H19.3Q20.4 0.4 20.9 1.3L21.9 4.6V21Q21.9 22.1 20.8 22.1H1.5Q0.4 22.1 0.4 21V4.6L1.4 1.3Q1.9 0.4 3 0.4Z" fill="#d9a26b" stroke="#c48e57" stroke-width="0.8"/><path d="M3.1 0.9H19.2Q20 0.9 20.4 1.6L21.4 4.8L19.9 6.2H2.4L0.9 4.8L1.9 1.6Q2.3 0.9 3.1 0.9Z" fill="#edc08e"/><path d="M2.3 6.5H20" stroke="#bd8751" stroke-width="0.8"/><rect x="4.1" y="8.3" width="14.1" height="10.6" fill="#c68f58"/><path d="M5.6 8.3V18.9M8.4 8.3V18.9M11.2 8.3V18.9M14 8.3V18.9M16.8 8.3V18.9" stroke="#ae7a47" stroke-width="1"/><path d="M0.8 21.1Q0.9 21.8 1.6 21.8H20.7Q21.4 21.8 21.5 21.1L18.2 18.9H4.1Z" fill="#bd8751" opacity=".7"/><rect x="11.6" y="11.8" width="8.2" height="6.5" fill="#dfeaf1"/><rect x="11.6" y="11.8" width="8.2" height="2" fill="#45a9f3"/><rect x="11.6" y="13.8" width="8.2" height="0.8" fill="#a8d8f8"/><path d="M13.4 16.4H18" stroke="#a9bccb" stroke-width="1"/></svg>
<div style="left:78px;top:395.25px;width:24px;height:28px;overflow:hidden">
<span style="left:1.00px;top:-0.70px;font-weight:bold;font-size:16.5px;-webkit-text-stroke:0.2px;transform:scaleX(1.1831);transform-origin:0 50%;">113</span>
</div>
<span style="left:108.00px;top:394.55px;font-weight:bold;font-size:16.5px;-webkit-text-stroke:0.2px;transform:scaleX(1.0209);transform-origin:0 50%;">Ампули</span>
<svg style="left:25.75px;top:431.05px" width="13" height="13" viewBox="0 0 13 13"><rect x="0.75" y="0.75" width="11.5" height="11.5" rx="1.6" fill="#f4f4f4" stroke="#8c8c8c" stroke-width="1.8"/><path d="M3.3 6.5H9.7M6.5 3.3V9.7" stroke="#3c50a8" stroke-width="1.6"/></svg>
<div style="left:39.5px;top:435.55px;width:7px;height:0;border-top:1.5px dotted #a6a6a6"></div>
<svg style="left:48.1px;top:424.5px" width="22.3" height="22.5" viewBox="0 0 22.3 22.5"><path d="M3 0.4H19.3Q20.4 0.4 20.9 1.3L21.9 4.6V21Q21.9 22.1 20.8 22.1H1.5Q0.4 22.1 0.4 21V4.6L1.4 1.3Q1.9 0.4 3 0.4Z" fill="#d9a26b" stroke="#c48e57" stroke-width="0.8"/><path d="M3.1 0.9H19.2Q20 0.9 20.4 1.6L21.4 4.8L19.9 6.2H2.4L0.9 4.8L1.9 1.6Q2.3 0.9 3.1 0.9Z" fill="#edc08e"/><path d="M2.3 6.5H20" stroke="#bd8751" stroke-width="0.8"/><rect x="4.1" y="8.3" width="14.1" height="10.6" fill="#c68f58"/><path d="M5.6 8.3V18.9M8.4 8.3V18.9M11.2 8.3V18.9M14 8.3V18.9M16.8 8.3V18.9" stroke="#ae7a47" stroke-width="1"/><path d="M0.8 21.1Q0.9 21.8 1.6 21.8H20.7Q21.4 21.8 21.5 21.1L18.2 18.9H4.1Z" fill="#bd8751" opacity=".7"/><rect x="11.6" y="11.8" width="8.2" height="6.5" fill="#dfeaf1"/><rect x="11.6" y="11.8" width="8.2" height="2" fill="#45a9f3"/><rect x="11.6" y="13.8" width="8.2" height="0.8" fill="#a8d8f8"/><path d="M13.4 16.4H18" stroke="#a9bccb" stroke-width="1"/></svg>
<div style="left:78px;top:423.75px;width:24px;height:28px;overflow:hidden">
<span style="left:1.00px;top:-0.70px;font-weight:bold;font-size:16.5px;-webkit-text-stroke:0.2px;transform:scaleX(1.1831);transform-origin:0 50%;">117</span>
</div>
<span style="left:108.00px;top:423.05px;font-weight:bold;font-size:16.5px;-webkit-text-stroke:0.2px;transform:scaleX(1.0538);transform-origin:0 50%;">Антибіотики ампульні</span>
<svg style="left:25.75px;top:459.55px" width="13" height="13" viewBox="0 0 13 13"><rect x="0.75" y="0.75" width="11.5" height="11.5" rx="1.6" fill="#f4f4f4" stroke="#8c8c8c" stroke-width="1.8"/><path d="M3.3 6.5H9.7M6.5 3.3V9.7" stroke="#3c50a8" stroke-width="1.6"/></svg>
<div style="left:39.5px;top:464.05px;width:7px;height:0;border-top:1.5px dotted #a6a6a6"></div>
<svg style="left:48.1px;top:453.0px" width="22.3" height="22.5" viewBox="0 0 22.3 22.5"><path d="M3 0.4H19.3Q20.4 0.4 20.9 1.3L21.9 4.6V21Q21.9 22.1 20.8 22.1H1.5Q0.4 22.1 0.4 21V4.6L1.4 1.3Q1.9 0.4 3 0.4Z" fill="#d9a26b" stroke="#c48e57" stroke-width="0.8"/><path d="M3.1 0.9H19.2Q20 0.9 20.4 1.6L21.4 4.8L19.9 6.2H2.4L0.9 4.8L1.9 1.6Q2.3 0.9 3.1 0.9Z" fill="#edc08e"/><path d="M2.3 6.5H20" stroke="#bd8751" stroke-width="0.8"/><rect x="4.1" y="8.3" width="14.1" height="10.6" fill="#c68f58"/><path d="M5.6 8.3V18.9M8.4 8.3V18.9M11.2 8.3V18.9M14 8.3V18.9M16.8 8.3V18.9" stroke="#ae7a47" stroke-width="1"/><path d="M0.8 21.1Q0.9 21.8 1.6 21.8H20.7Q21.4 21.8 21.5 21.1L18.2 18.9H4.1Z" fill="#bd8751" opacity=".7"/><rect x="11.6" y="11.8" width="8.2" height="6.5" fill="#dfeaf1"/><rect x="11.6" y="11.8" width="8.2" height="2" fill="#45a9f3"/><rect x="11.6" y="13.8" width="8.2" height="0.8" fill="#a8d8f8"/><path d="M13.4 16.4H18" stroke="#a9bccb" stroke-width="1"/></svg>
<div style="left:78px;top:452.25px;width:24px;height:28px;overflow:hidden">
<span style="left:1.00px;top:-0.70px;font-weight:bold;font-size:16.5px;-webkit-text-stroke:0.2px;transform:scaleX(1.1831);transform-origin:0 50%;">114</span>
</div>
<span style="left:108.00px;top:451.55px;font-weight:bold;font-size:16.5px;-webkit-text-stroke:0.2px;transform:scaleX(1.0653);transform-origin:0 50%;">Антибіотики (флакони)</span>
<svg style="left:25.75px;top:488.05px" width="13" height="13" viewBox="0 0 13 13"><rect x="0.75" y="0.75" width="11.5" height="11.5" rx="1.6" fill="#f4f4f4" stroke="#8c8c8c" stroke-width="1.8"/><path d="M3.3 6.5H9.7M6.5 3.3V9.7" stroke="#3c50a8" stroke-width="1.6"/></svg>
<div style="left:39.5px;top:492.55px;width:7px;height:0;border-top:1.5px dotted #a6a6a6"></div>
<svg style="left:48.1px;top:481.5px" width="22.3" height="22.5" viewBox="0 0 22.3 22.5"><path d="M3 0.4H19.3Q20.4 0.4 20.9 1.3L21.9 4.6V21Q21.9 22.1 20.8 22.1H1.5Q0.4 22.1 0.4 21V4.6L1.4 1.3Q1.9 0.4 3 0.4Z" fill="#d9a26b" stroke="#c48e57" stroke-width="0.8"/><path d="M3.1 0.9H19.2Q20 0.9 20.4 1.6L21.4 4.8L19.9 6.2H2.4L0.9 4.8L1.9 1.6Q2.3 0.9 3.1 0.9Z" fill="#edc08e"/><path d="M2.3 6.5H20" stroke="#bd8751" stroke-width="0.8"/><rect x="4.1" y="8.3" width="14.1" height="10.6" fill="#c68f58"/><path d="M5.6 8.3V18.9M8.4 8.3V18.9M11.2 8.3V18.9M14 8.3V18.9M16.8 8.3V18.9" stroke="#ae7a47" stroke-width="1"/><path d="M0.8 21.1Q0.9 21.8 1.6 21.8H20.7Q21.4 21.8 21.5 21.1L18.2 18.9H4.1Z" fill="#bd8751" opacity=".7"/><rect x="11.6" y="11.8" width="8.2" height="6.5" fill="#dfeaf1"/><rect x="11.6" y="11.8" width="8.2" height="2" fill="#45a9f3"/><rect x="11.6" y="13.8" width="8.2" height="0.8" fill="#a8d8f8"/><path d="M13.4 16.4H18" stroke="#a9bccb" stroke-width="1"/></svg>
<div style="left:78px;top:480.75px;width:24px;height:28px;overflow:hidden">
<span style="left:1.00px;top:-0.70px;font-weight:bold;font-size:16.5px;-webkit-text-stroke:0.2px;transform:scaleX(1.1831);transform-origin:0 50%;">115</span>
</div>
<span style="left:108.00px;top:480.05px;font-weight:bold;font-size:16.5px;-webkit-text-stroke:0.2px;transform:scaleX(1.0705);transform-origin:0 50%;">Косметика</span>
<svg style="left:25.75px;top:516.55px" width="13" height="13" viewBox="0 0 13 13"><rect x="0.75" y="0.75" width="11.5" height="11.5" rx="1.6" fill="#f4f4f4" stroke="#8c8c8c" stroke-width="1.8"/><path d="M3.3 6.5H9.7M6.5 3.3V9.7" stroke="#3c50a8" stroke-width="1.6"/></svg>
<div style="left:39.5px;top:521.05px;width:7px;height:0;border-top:1.5px dotted #a6a6a6"></div>
<svg style="left:48.1px;top:510.0px" width="22.3" height="22.5" viewBox="0 0 22.3 22.5"><path d="M3 0.4H19.3Q20.4 0.4 20.9 1.3L21.9 4.6V21Q21.9 22.1 20.8 22.1H1.5Q0.4 22.1 0.4 21V4.6L1.4 1.3Q1.9 0.4 3 0.4Z" fill="#d9a26b" stroke="#c48e57" stroke-width="0.8"/><path d="M3.1 0.9H19.2Q20 0.9 20.4 1.6L21.4 4.8L19.9 6.2H2.4L0.9 4.8L1.9 1.6Q2.3 0.9 3.1 0.9Z" fill="#edc08e"/><path d="M2.3 6.5H20" stroke="#bd8751" stroke-width="0.8"/><rect x="4.1" y="8.3" width="14.1" height="10.6" fill="#c68f58"/><path d="M5.6 8.3V18.9M8.4 8.3V18.9M11.2 8.3V18.9M14 8.3V18.9M16.8 8.3V18.9" stroke="#ae7a47" stroke-width="1"/><path d="M0.8 21.1Q0.9 21.8 1.6 21.8H20.7Q21.4 21.8 21.5 21.1L18.2 18.9H4.1Z" fill="#bd8751" opacity=".7"/><rect x="11.6" y="11.8" width="8.2" height="6.5" fill="#dfeaf1"/><rect x="11.6" y="11.8" width="8.2" height="2" fill="#45a9f3"/><rect x="11.6" y="13.8" width="8.2" height="0.8" fill="#a8d8f8"/><path d="M13.4 16.4H18" stroke="#a9bccb" stroke-width="1"/></svg>
<div style="left:78px;top:509.25px;width:24px;height:28px;overflow:hidden">
<span style="left:1.00px;top:-0.70px;font-weight:bold;font-size:16.5px;-webkit-text-stroke:0.2px;transform:scaleX(1.1831);transform-origin:0 50%;">116</span>
</div>
<span style="left:108.00px;top:508.55px;font-weight:bold;font-size:16.5px;-webkit-text-stroke:0.2px;transform:scaleX(1.0480);transform-origin:0 50%;">Різне</span>
<svg style="left:25.75px;top:545.05px" width="13" height="13" viewBox="0 0 13 13"><rect x="0.75" y="0.75" width="11.5" height="11.5" rx="1.6" fill="#f4f4f4" stroke="#8c8c8c" stroke-width="1.8"/><path d="M3.3 6.5H9.7M6.5 3.3V9.7" stroke="#3c50a8" stroke-width="1.6"/></svg>
<div style="left:39.5px;top:549.55px;width:7px;height:0;border-top:1.5px dotted #a6a6a6"></div>
<svg style="left:48.1px;top:538.5px" width="22.3" height="22.5" viewBox="0 0 22.3 22.5"><path d="M3 0.4H19.3Q20.4 0.4 20.9 1.3L21.9 4.6V21Q21.9 22.1 20.8 22.1H1.5Q0.4 22.1 0.4 21V4.6L1.4 1.3Q1.9 0.4 3 0.4Z" fill="#d9a26b" stroke="#c48e57" stroke-width="0.8"/><path d="M3.1 0.9H19.2Q20 0.9 20.4 1.6L21.4 4.8L19.9 6.2H2.4L0.9 4.8L1.9 1.6Q2.3 0.9 3.1 0.9Z" fill="#edc08e"/><path d="M2.3 6.5H20" stroke="#bd8751" stroke-width="0.8"/><rect x="4.1" y="8.3" width="14.1" height="10.6" fill="#c68f58"/><path d="M5.6 8.3V18.9M8.4 8.3V18.9M11.2 8.3V18.9M14 8.3V18.9M16.8 8.3V18.9" stroke="#ae7a47" stroke-width="1"/><path d="M0.8 21.1Q0.9 21.8 1.6 21.8H20.7Q21.4 21.8 21.5 21.1L18.2 18.9H4.1Z" fill="#bd8751" opacity=".7"/><rect x="11.6" y="11.8" width="8.2" height="6.5" fill="#dfeaf1"/><rect x="11.6" y="11.8" width="8.2" height="2" fill="#45a9f3"/><rect x="11.6" y="13.8" width="8.2" height="0.8" fill="#a8d8f8"/><path d="M13.4 16.4H18" stroke="#a9bccb" stroke-width="1"/></svg>
<div style="left:78px;top:537.75px;width:24px;height:28px;overflow:hidden">
<span style="left:1.00px;top:-0.70px;font-weight:bold;font-size:16.5px;-webkit-text-stroke:0.2px;transform:scaleX(1.1831);transform-origin:0 50%;">117</span>
</div>
<span style="left:108.00px;top:537.05px;font-weight:bold;font-size:16.5px;-webkit-text-stroke:0.2px;transform:scaleX(1.0597);transform-origin:0 50%;">Травна система</span>
<svg style="left:25.75px;top:573.55px" width="13" height="13" viewBox="0 0 13 13"><rect x="0.75" y="0.75" width="11.5" height="11.5" rx="1.6" fill="#f4f4f4" stroke="#8c8c8c" stroke-width="1.8"/><path d="M3.3 6.5H9.7M6.5 3.3V9.7" stroke="#3c50a8" stroke-width="1.6"/></svg>
<div style="left:39.5px;top:578.05px;width:7px;height:0;border-top:1.5px dotted #a6a6a6"></div>
<svg style="left:48.1px;top:567.0px" width="22.3" height="22.5" viewBox="0 0 22.3 22.5"><path d="M3 0.4H19.3Q20.4 0.4 20.9 1.3L21.9 4.6V21Q21.9 22.1 20.8 22.1H1.5Q0.4 22.1 0.4 21V4.6L1.4 1.3Q1.9 0.4 3 0.4Z" fill="#d9a26b" stroke="#c48e57" stroke-width="0.8"/><path d="M3.1 0.9H19.2Q20 0.9 20.4 1.6L21.4 4.8L19.9 6.2H2.4L0.9 4.8L1.9 1.6Q2.3 0.9 3.1 0.9Z" fill="#edc08e"/><path d="M2.3 6.5H20" stroke="#bd8751" stroke-width="0.8"/><rect x="4.1" y="8.3" width="14.1" height="10.6" fill="#c68f58"/><path d="M5.6 8.3V18.9M8.4 8.3V18.9M11.2 8.3V18.9M14 8.3V18.9M16.8 8.3V18.9" stroke="#ae7a47" stroke-width="1"/><path d="M0.8 21.1Q0.9 21.8 1.6 21.8H20.7Q21.4 21.8 21.5 21.1L18.2 18.9H4.1Z" fill="#bd8751" opacity=".7"/><rect x="11.6" y="11.8" width="8.2" height="6.5" fill="#dfeaf1"/><rect x="11.6" y="11.8" width="8.2" height="2" fill="#45a9f3"/><rect x="11.6" y="13.8" width="8.2" height="0.8" fill="#a8d8f8"/><path d="M13.4 16.4H18" stroke="#a9bccb" stroke-width="1"/></svg>
<div style="left:78px;top:566.25px;width:24px;height:28px;overflow:hidden">
<span style="left:1.00px;top:-0.70px;font-weight:bold;font-size:16.5px;-webkit-text-stroke:0.2px;transform:scaleX(1.1831);transform-origin:0 50%;">118</span>
</div>
<span style="left:108.00px;top:565.55px;font-weight:bold;font-size:16.5px;-webkit-text-stroke:0.2px;transform:scaleX(1.0889);transform-origin:0 50%;">Кардіологічні препарати</span>
<svg style="left:25.75px;top:602.05px" width="13" height="13" viewBox="0 0 13 13"><rect x="0.75" y="0.75" width="11.5" height="11.5" rx="1.6" fill="#f4f4f4" stroke="#8c8c8c" stroke-width="1.8"/><path d="M3.3 6.5H9.7M6.5 3.3V9.7" stroke="#3c50a8" stroke-width="1.6"/></svg>
<div style="left:39.5px;top:606.55px;width:7px;height:0;border-top:1.5px dotted #a6a6a6"></div>
<svg style="left:48.1px;top:595.5px" width="22.3" height="22.5" viewBox="0 0 22.3 22.5"><path d="M3 0.4H19.3Q20.4 0.4 20.9 1.3L21.9 4.6V21Q21.9 22.1 20.8 22.1H1.5Q0.4 22.1 0.4 21V4.6L1.4 1.3Q1.9 0.4 3 0.4Z" fill="#d9a26b" stroke="#c48e57" stroke-width="0.8"/><path d="M3.1 0.9H19.2Q20 0.9 20.4 1.6L21.4 4.8L19.9 6.2H2.4L0.9 4.8L1.9 1.6Q2.3 0.9 3.1 0.9Z" fill="#edc08e"/><path d="M2.3 6.5H20" stroke="#bd8751" stroke-width="0.8"/><rect x="4.1" y="8.3" width="14.1" height="10.6" fill="#c68f58"/><path d="M5.6 8.3V18.9M8.4 8.3V18.9M11.2 8.3V18.9M14 8.3V18.9M16.8 8.3V18.9" stroke="#ae7a47" stroke-width="1"/><path d="M0.8 21.1Q0.9 21.8 1.6 21.8H20.7Q21.4 21.8 21.5 21.1L18.2 18.9H4.1Z" fill="#bd8751" opacity=".7"/><rect x="11.6" y="11.8" width="8.2" height="6.5" fill="#dfeaf1"/><rect x="11.6" y="11.8" width="8.2" height="2" fill="#45a9f3"/><rect x="11.6" y="13.8" width="8.2" height="0.8" fill="#a8d8f8"/><path d="M13.4 16.4H18" stroke="#a9bccb" stroke-width="1"/></svg>
<div style="left:78px;top:594.75px;width:24px;height:28px;overflow:hidden">
<span style="left:1.00px;top:-0.70px;font-weight:bold;font-size:16.5px;-webkit-text-stroke:0.2px;transform:scaleX(1.1831);transform-origin:0 50%;">119</span>
</div>
<span style="left:108.00px;top:594.05px;font-weight:bold;font-size:16.5px;-webkit-text-stroke:0.2px;transform:scaleX(1.0970);transform-origin:0 50%;">Дерматологічні препарати</span>
<svg style="left:25.75px;top:630.55px" width="13" height="13" viewBox="0 0 13 13"><rect x="0.75" y="0.75" width="11.5" height="11.5" rx="1.6" fill="#f4f4f4" stroke="#8c8c8c" stroke-width="1.8"/><path d="M3.3 6.5H9.7M6.5 3.3V9.7" stroke="#3c50a8" stroke-width="1.6"/></svg>
<div style="left:39.5px;top:635.05px;width:7px;height:0;border-top:1.5px dotted #a6a6a6"></div>
<svg style="left:48.1px;top:624.0px" width="22.3" height="22.5" viewBox="0 0 22.3 22.5"><path d="M3 0.4H19.3Q20.4 0.4 20.9 1.3L21.9 4.6V21Q21.9 22.1 20.8 22.1H1.5Q0.4 22.1 0.4 21V4.6L1.4 1.3Q1.9 0.4 3 0.4Z" fill="#d9a26b" stroke="#c48e57" stroke-width="0.8"/><path d="M3.1 0.9H19.2Q20 0.9 20.4 1.6L21.4 4.8L19.9 6.2H2.4L0.9 4.8L1.9 1.6Q2.3 0.9 3.1 0.9Z" fill="#edc08e"/><path d="M2.3 6.5H20" stroke="#bd8751" stroke-width="0.8"/><rect x="4.1" y="8.3" width="14.1" height="10.6" fill="#c68f58"/><path d="M5.6 8.3V18.9M8.4 8.3V18.9M11.2 8.3V18.9M14 8.3V18.9M16.8 8.3V18.9" stroke="#ae7a47" stroke-width="1"/><path d="M0.8 21.1Q0.9 21.8 1.6 21.8H20.7Q21.4 21.8 21.5 21.1L18.2 18.9H4.1Z" fill="#bd8751" opacity=".7"/><rect x="11.6" y="11.8" width="8.2" height="6.5" fill="#dfeaf1"/><rect x="11.6" y="11.8" width="8.2" height="2" fill="#45a9f3"/><rect x="11.6" y="13.8" width="8.2" height="0.8" fill="#a8d8f8"/><path d="M13.4 16.4H18" stroke="#a9bccb" stroke-width="1"/></svg>
<div style="left:78px;top:623.25px;width:24px;height:28px;overflow:hidden">
<span style="left:1.00px;top:-0.70px;font-weight:bold;font-size:16.5px;-webkit-text-stroke:0.2px;transform:scaleX(1.1442);transform-origin:0 50%;">120</span>
</div>
<span style="left:108.00px;top:622.55px;font-weight:bold;font-size:16.5px;-webkit-text-stroke:0.2px;transform:scaleX(1.0697);transform-origin:0 50%;">Протидіабетичні ЛП</span>
<svg style="left:25.75px;top:659.05px" width="13" height="13" viewBox="0 0 13 13"><rect x="0.75" y="0.75" width="11.5" height="11.5" rx="1.6" fill="#f4f4f4" stroke="#8c8c8c" stroke-width="1.8"/><path d="M3.3 6.5H9.7M6.5 3.3V9.7" stroke="#3c50a8" stroke-width="1.6"/></svg>
<div style="left:39.5px;top:663.55px;width:7px;height:0;border-top:1.5px dotted #a6a6a6"></div>
<svg style="left:48.1px;top:652.5px" width="22.3" height="22.5" viewBox="0 0 22.3 22.5"><path d="M3 0.4H19.3Q20.4 0.4 20.9 1.3L21.9 4.6V21Q21.9 22.1 20.8 22.1H1.5Q0.4 22.1 0.4 21V4.6L1.4 1.3Q1.9 0.4 3 0.4Z" fill="#d9a26b" stroke="#c48e57" stroke-width="0.8"/><path d="M3.1 0.9H19.2Q20 0.9 20.4 1.6L21.4 4.8L19.9 6.2H2.4L0.9 4.8L1.9 1.6Q2.3 0.9 3.1 0.9Z" fill="#edc08e"/><path d="M2.3 6.5H20" stroke="#bd8751" stroke-width="0.8"/><rect x="4.1" y="8.3" width="14.1" height="10.6" fill="#c68f58"/><path d="M5.6 8.3V18.9M8.4 8.3V18.9M11.2 8.3V18.9M14 8.3V18.9M16.8 8.3V18.9" stroke="#ae7a47" stroke-width="1"/><path d="M0.8 21.1Q0.9 21.8 1.6 21.8H20.7Q21.4 21.8 21.5 21.1L18.2 18.9H4.1Z" fill="#bd8751" opacity=".7"/><rect x="11.6" y="11.8" width="8.2" height="6.5" fill="#dfeaf1"/><rect x="11.6" y="11.8" width="8.2" height="2" fill="#45a9f3"/><rect x="11.6" y="13.8" width="8.2" height="0.8" fill="#a8d8f8"/><path d="M13.4 16.4H18" stroke="#a9bccb" stroke-width="1"/></svg>
<div style="left:78px;top:651.75px;width:24px;height:28px;overflow:hidden">
<span style="left:1.00px;top:-0.70px;font-weight:bold;font-size:16.5px;-webkit-text-stroke:0.2px;transform:scaleX(1.1442);transform-origin:0 50%;">122</span>
</div>
<span style="left:108.00px;top:651.05px;font-weight:bold;font-size:16.5px;-webkit-text-stroke:0.2px;transform:scaleX(1.0840);transform-origin:0 50%;">ЛЗ для лікування геморою</span>
<svg style="left:25.75px;top:687.55px" width="13" height="13" viewBox="0 0 13 13"><rect x="0.75" y="0.75" width="11.5" height="11.5" rx="1.6" fill="#f4f4f4" stroke="#8c8c8c" stroke-width="1.8"/><path d="M3.3 6.5H9.7M6.5 3.3V9.7" stroke="#3c50a8" stroke-width="1.6"/></svg>
<div style="left:39.5px;top:692.05px;width:7px;height:0;border-top:1.5px dotted #a6a6a6"></div>
<svg style="left:48.1px;top:681.0px" width="22.3" height="22.5" viewBox="0 0 22.3 22.5"><path d="M3 0.4H19.3Q20.4 0.4 20.9 1.3L21.9 4.6V21Q21.9 22.1 20.8 22.1H1.5Q0.4 22.1 0.4 21V4.6L1.4 1.3Q1.9 0.4 3 0.4Z" fill="#d9a26b" stroke="#c48e57" stroke-width="0.8"/><path d="M3.1 0.9H19.2Q20 0.9 20.4 1.6L21.4 4.8L19.9 6.2H2.4L0.9 4.8L1.9 1.6Q2.3 0.9 3.1 0.9Z" fill="#edc08e"/><path d="M2.3 6.5H20" stroke="#bd8751" stroke-width="0.8"/><rect x="4.1" y="8.3" width="14.1" height="10.6" fill="#c68f58"/><path d="M5.6 8.3V18.9M8.4 8.3V18.9M11.2 8.3V18.9M14 8.3V18.9M16.8 8.3V18.9" stroke="#ae7a47" stroke-width="1"/><path d="M0.8 21.1Q0.9 21.8 1.6 21.8H20.7Q21.4 21.8 21.5 21.1L18.2 18.9H4.1Z" fill="#bd8751" opacity=".7"/><rect x="11.6" y="11.8" width="8.2" height="6.5" fill="#dfeaf1"/><rect x="11.6" y="11.8" width="8.2" height="2" fill="#45a9f3"/><rect x="11.6" y="13.8" width="8.2" height="0.8" fill="#a8d8f8"/><path d="M13.4 16.4H18" stroke="#a9bccb" stroke-width="1"/></svg>
<div style="left:78px;top:680.25px;width:24px;height:28px;overflow:hidden">
<span style="left:1.00px;top:-0.70px;font-weight:bold;font-size:16.5px;-webkit-text-stroke:0.2px;transform:scaleX(1.1442);transform-origin:0 50%;">123</span>
</div>
<span style="left:108.00px;top:679.55px;font-weight:bold;font-size:16.5px;-webkit-text-stroke:0.2px;transform:scaleX(1.0746);transform-origin:0 50%;">Біль у м`язах та суглобах ТАБЛ</span>
<svg style="left:25.75px;top:716.05px" width="13" height="13" viewBox="0 0 13 13"><rect x="0.75" y="0.75" width="11.5" height="11.5" rx="1.6" fill="#f4f4f4" stroke="#8c8c8c" stroke-width="1.8"/><path d="M3.3 6.5H9.7M6.5 3.3V9.7" stroke="#3c50a8" stroke-width="1.6"/></svg>
<div style="left:39.5px;top:720.55px;width:7px;height:0;border-top:1.5px dotted #a6a6a6"></div>
<svg style="left:48.1px;top:709.5px" width="22.3" height="22.5" viewBox="0 0 22.3 22.5"><path d="M3 0.4H19.3Q20.4 0.4 20.9 1.3L21.9 4.6V21Q21.9 22.1 20.8 22.1H1.5Q0.4 22.1 0.4 21V4.6L1.4 1.3Q1.9 0.4 3 0.4Z" fill="#d9a26b" stroke="#c48e57" stroke-width="0.8"/><path d="M3.1 0.9H19.2Q20 0.9 20.4 1.6L21.4 4.8L19.9 6.2H2.4L0.9 4.8L1.9 1.6Q2.3 0.9 3.1 0.9Z" fill="#edc08e"/><path d="M2.3 6.5H20" stroke="#bd8751" stroke-width="0.8"/><rect x="4.1" y="8.3" width="14.1" height="10.6" fill="#c68f58"/><path d="M5.6 8.3V18.9M8.4 8.3V18.9M11.2 8.3V18.9M14 8.3V18.9M16.8 8.3V18.9" stroke="#ae7a47" stroke-width="1"/><path d="M0.8 21.1Q0.9 21.8 1.6 21.8H20.7Q21.4 21.8 21.5 21.1L18.2 18.9H4.1Z" fill="#bd8751" opacity=".7"/><rect x="11.6" y="11.8" width="8.2" height="6.5" fill="#dfeaf1"/><rect x="11.6" y="11.8" width="8.2" height="2" fill="#45a9f3"/><rect x="11.6" y="13.8" width="8.2" height="0.8" fill="#a8d8f8"/><path d="M13.4 16.4H18" stroke="#a9bccb" stroke-width="1"/></svg>
<div style="left:78px;top:708.75px;width:24px;height:28px;overflow:hidden">
<span style="left:1.00px;top:-0.70px;font-weight:bold;font-size:16.5px;-webkit-text-stroke:0.2px;transform:scaleX(1.1442);transform-origin:0 50%;">129</span>
</div>
<span style="left:108.00px;top:708.05px;font-weight:bold;font-size:16.5px;-webkit-text-stroke:0.2px;transform:scaleX(1.0589);transform-origin:0 50%;">Антигістамінні ЛП</span>
<svg style="left:25.75px;top:744.55px" width="13" height="13" viewBox="0 0 13 13"><rect x="0.75" y="0.75" width="11.5" height="11.5" rx="1.6" fill="#f4f4f4" stroke="#8c8c8c" stroke-width="1.8"/><path d="M3.3 6.5H9.7M6.5 3.3V9.7" stroke="#3c50a8" stroke-width="1.6"/></svg>
<div style="left:39.5px;top:749.05px;width:7px;height:0;border-top:1.5px dotted #a6a6a6"></div>
<svg style="left:48.1px;top:738.0px" width="22.3" height="22.5" viewBox="0 0 22.3 22.5"><path d="M3 0.4H19.3Q20.4 0.4 20.9 1.3L21.9 4.6V21Q21.9 22.1 20.8 22.1H1.5Q0.4 22.1 0.4 21V4.6L1.4 1.3Q1.9 0.4 3 0.4Z" fill="#d9a26b" stroke="#c48e57" stroke-width="0.8"/><path d="M3.1 0.9H19.2Q20 0.9 20.4 1.6L21.4 4.8L19.9 6.2H2.4L0.9 4.8L1.9 1.6Q2.3 0.9 3.1 0.9Z" fill="#edc08e"/><path d="M2.3 6.5H20" stroke="#bd8751" stroke-width="0.8"/><rect x="4.1" y="8.3" width="14.1" height="10.6" fill="#c68f58"/><path d="M5.6 8.3V18.9M8.4 8.3V18.9M11.2 8.3V18.9M14 8.3V18.9M16.8 8.3V18.9" stroke="#ae7a47" stroke-width="1"/><path d="M0.8 21.1Q0.9 21.8 1.6 21.8H20.7Q21.4 21.8 21.5 21.1L18.2 18.9H4.1Z" fill="#bd8751" opacity=".7"/><rect x="11.6" y="11.8" width="8.2" height="6.5" fill="#dfeaf1"/><rect x="11.6" y="11.8" width="8.2" height="2" fill="#45a9f3"/><rect x="11.6" y="13.8" width="8.2" height="0.8" fill="#a8d8f8"/><path d="M13.4 16.4H18" stroke="#a9bccb" stroke-width="1"/></svg>
<div style="left:78px;top:737.25px;width:24px;height:28px;overflow:hidden">
<span style="left:1.00px;top:-0.70px;font-weight:bold;font-size:16.5px;-webkit-text-stroke:0.2px;transform:scaleX(1.1442);transform-origin:0 50%;">130</span>
</div>
<span style="left:108.00px;top:736.55px;font-weight:bold;font-size:16.5px;-webkit-text-stroke:0.2px;transform:scaleX(1.0749);transform-origin:0 50%;">Протипаразитарні препарати</span>
<svg style="left:25.75px;top:773.05px" width="13" height="13" viewBox="0 0 13 13"><rect x="0.75" y="0.75" width="11.5" height="11.5" rx="1.6" fill="#f4f4f4" stroke="#8c8c8c" stroke-width="1.8"/><path d="M3.3 6.5H9.7M6.5 3.3V9.7" stroke="#3c50a8" stroke-width="1.6"/></svg>
<div style="left:39.5px;top:777.55px;width:7px;height:0;border-top:1.5px dotted #a6a6a6"></div>
<svg style="left:48.1px;top:766.5px" width="22.3" height="22.5" viewBox="0 0 22.3 22.5"><path d="M3 0.4H19.3Q20.4 0.4 20.9 1.3L21.9 4.6V21Q21.9 22.1 20.8 22.1H1.5Q0.4 22.1 0.4 21V4.6L1.4 1.3Q1.9 0.4 3 0.4Z" fill="#d9a26b" stroke="#c48e57" stroke-width="0.8"/><path d="M3.1 0.9H19.2Q20 0.9 20.4 1.6L21.4 4.8L19.9 6.2H2.4L0.9 4.8L1.9 1.6Q2.3 0.9 3.1 0.9Z" fill="#edc08e"/><path d="M2.3 6.5H20" stroke="#bd8751" stroke-width="0.8"/><rect x="4.1" y="8.3" width="14.1" height="10.6" fill="#c68f58"/><path d="M5.6 8.3V18.9M8.4 8.3V18.9M11.2 8.3V18.9M14 8.3V18.9M16.8 8.3V18.9" stroke="#ae7a47" stroke-width="1"/><path d="M0.8 21.1Q0.9 21.8 1.6 21.8H20.7Q21.4 21.8 21.5 21.1L18.2 18.9H4.1Z" fill="#bd8751" opacity=".7"/><rect x="11.6" y="11.8" width="8.2" height="6.5" fill="#dfeaf1"/><rect x="11.6" y="11.8" width="8.2" height="2" fill="#45a9f3"/><rect x="11.6" y="13.8" width="8.2" height="0.8" fill="#a8d8f8"/><path d="M13.4 16.4H18" stroke="#a9bccb" stroke-width="1"/></svg>
<div style="left:78px;top:765.75px;width:24px;height:28px;overflow:hidden">
<span style="left:1.00px;top:-0.70px;font-weight:bold;font-size:16.5px;-webkit-text-stroke:0.2px;transform:scaleX(1.1442);transform-origin:0 50%;">132</span>
</div>
<span style="left:108.00px;top:765.05px;font-weight:bold;font-size:16.5px;-webkit-text-stroke:0.2px;transform:scaleX(1.0975);transform-origin:0 50%;">Судиннозвужуючі ЛП</span>
<svg style="left:25.75px;top:801.55px" width="13" height="13" viewBox="0 0 13 13"><rect x="0.75" y="0.75" width="11.5" height="11.5" rx="1.6" fill="#f4f4f4" stroke="#8c8c8c" stroke-width="1.8"/><path d="M3.3 6.5H9.7M6.5 3.3V9.7" stroke="#3c50a8" stroke-width="1.6"/></svg>
<div style="left:39.5px;top:806.05px;width:7px;height:0;border-top:1.5px dotted #a6a6a6"></div>
<svg style="left:48.1px;top:795.0px" width="22.3" height="22.5" viewBox="0 0 22.3 22.5"><path d="M3 0.4H19.3Q20.4 0.4 20.9 1.3L21.9 4.6V21Q21.9 22.1 20.8 22.1H1.5Q0.4 22.1 0.4 21V4.6L1.4 1.3Q1.9 0.4 3 0.4Z" fill="#d9a26b" stroke="#c48e57" stroke-width="0.8"/><path d="M3.1 0.9H19.2Q20 0.9 20.4 1.6L21.4 4.8L19.9 6.2H2.4L0.9 4.8L1.9 1.6Q2.3 0.9 3.1 0.9Z" fill="#edc08e"/><path d="M2.3 6.5H20" stroke="#bd8751" stroke-width="0.8"/><rect x="4.1" y="8.3" width="14.1" height="10.6" fill="#c68f58"/><path d="M5.6 8.3V18.9M8.4 8.3V18.9M11.2 8.3V18.9M14 8.3V18.9M16.8 8.3V18.9" stroke="#ae7a47" stroke-width="1"/><path d="M0.8 21.1Q0.9 21.8 1.6 21.8H20.7Q21.4 21.8 21.5 21.1L18.2 18.9H4.1Z" fill="#bd8751" opacity=".7"/><rect x="11.6" y="11.8" width="8.2" height="6.5" fill="#dfeaf1"/><rect x="11.6" y="11.8" width="8.2" height="2" fill="#45a9f3"/><rect x="11.6" y="13.8" width="8.2" height="0.8" fill="#a8d8f8"/><path d="M13.4 16.4H18" stroke="#a9bccb" stroke-width="1"/></svg>
<div style="left:78px;top:794.25px;width:24px;height:28px;overflow:hidden">
<span style="left:1.00px;top:-0.70px;font-weight:bold;font-size:16.5px;-webkit-text-stroke:0.2px;transform:scaleX(1.1442);transform-origin:0 50%;">133</span>
</div>
<span style="left:108.00px;top:793.55px;font-weight:bold;font-size:16.5px;-webkit-text-stroke:0.2px;transform:scaleX(1.0588);transform-origin:0 50%;">Зубні пасти</span>
<svg style="left:25.75px;top:830.05px" width="13" height="13" viewBox="0 0 13 13"><rect x="0.75" y="0.75" width="11.5" height="11.5" rx="1.6" fill="#f4f4f4" stroke="#8c8c8c" stroke-width="1.8"/><path d="M3.3 6.5H9.7M6.5 3.3V9.7" stroke="#3c50a8" stroke-width="1.6"/></svg>
<div style="left:39.5px;top:834.55px;width:7px;height:0;border-top:1.5px dotted #a6a6a6"></div>
<svg style="left:48.1px;top:823.5px" width="22.3" height="22.5" viewBox="0 0 22.3 22.5"><path d="M3 0.4H19.3Q20.4 0.4 20.9 1.3L21.9 4.6V21Q21.9 22.1 20.8 22.1H1.5Q0.4 22.1 0.4 21V4.6L1.4 1.3Q1.9 0.4 3 0.4Z" fill="#d9a26b" stroke="#c48e57" stroke-width="0.8"/><path d="M3.1 0.9H19.2Q20 0.9 20.4 1.6L21.4 4.8L19.9 6.2H2.4L0.9 4.8L1.9 1.6Q2.3 0.9 3.1 0.9Z" fill="#edc08e"/><path d="M2.3 6.5H20" stroke="#bd8751" stroke-width="0.8"/><rect x="4.1" y="8.3" width="14.1" height="10.6" fill="#c68f58"/><path d="M5.6 8.3V18.9M8.4 8.3V18.9M11.2 8.3V18.9M14 8.3V18.9M16.8 8.3V18.9" stroke="#ae7a47" stroke-width="1"/><path d="M0.8 21.1Q0.9 21.8 1.6 21.8H20.7Q21.4 21.8 21.5 21.1L18.2 18.9H4.1Z" fill="#bd8751" opacity=".7"/><rect x="11.6" y="11.8" width="8.2" height="6.5" fill="#dfeaf1"/><rect x="11.6" y="11.8" width="8.2" height="2" fill="#45a9f3"/><rect x="11.6" y="13.8" width="8.2" height="0.8" fill="#a8d8f8"/><path d="M13.4 16.4H18" stroke="#a9bccb" stroke-width="1"/></svg>
<div style="left:78px;top:822.75px;width:24px;height:28px;overflow:hidden">
<span style="left:1.00px;top:-0.70px;font-weight:bold;font-size:16.5px;-webkit-text-stroke:0.2px;transform:scaleX(1.1442);transform-origin:0 50%;">137</span>
</div>
<span style="left:108.00px;top:822.05px;font-weight:bold;font-size:16.5px;-webkit-text-stroke:0.2px;transform:scaleX(1.0784);transform-origin:0 50%;">Льодяники від горла</span>
<svg style="left:25.75px;top:858.55px" width="13" height="13" viewBox="0 0 13 13"><rect x="0.75" y="0.75" width="11.5" height="11.5" rx="1.6" fill="#f4f4f4" stroke="#8c8c8c" stroke-width="1.8"/><path d="M3.3 6.5H9.7M6.5 3.3V9.7" stroke="#3c50a8" stroke-width="1.6"/></svg>
<div style="left:39.5px;top:863.05px;width:7px;height:0;border-top:1.5px dotted #a6a6a6"></div>
<svg style="left:48.1px;top:852.0px" width="22.3" height="22.5" viewBox="0 0 22.3 22.5"><path d="M3 0.4H19.3Q20.4 0.4 20.9 1.3L21.9 4.6V21Q21.9 22.1 20.8 22.1H1.5Q0.4 22.1 0.4 21V4.6L1.4 1.3Q1.9 0.4 3 0.4Z" fill="#d9a26b" stroke="#c48e57" stroke-width="0.8"/><path d="M3.1 0.9H19.2Q20 0.9 20.4 1.6L21.4 4.8L19.9 6.2H2.4L0.9 4.8L1.9 1.6Q2.3 0.9 3.1 0.9Z" fill="#edc08e"/><path d="M2.3 6.5H20" stroke="#bd8751" stroke-width="0.8"/><rect x="4.1" y="8.3" width="14.1" height="10.6" fill="#c68f58"/><path d="M5.6 8.3V18.9M8.4 8.3V18.9M11.2 8.3V18.9M14 8.3V18.9M16.8 8.3V18.9" stroke="#ae7a47" stroke-width="1"/><path d="M0.8 21.1Q0.9 21.8 1.6 21.8H20.7Q21.4 21.8 21.5 21.1L18.2 18.9H4.1Z" fill="#bd8751" opacity=".7"/><rect x="11.6" y="11.8" width="8.2" height="6.5" fill="#dfeaf1"/><rect x="11.6" y="11.8" width="8.2" height="2" fill="#45a9f3"/><rect x="11.6" y="13.8" width="8.2" height="0.8" fill="#a8d8f8"/><path d="M13.4 16.4H18" stroke="#a9bccb" stroke-width="1"/></svg>
<div style="left:78px;top:851.25px;width:24px;height:28px;overflow:hidden">
<span style="left:1.00px;top:-0.70px;font-weight:bold;font-size:16.5px;-webkit-text-stroke:0.2px;transform:scaleX(1.1442);transform-origin:0 50%;">134</span>
</div>
<span style="left:108.00px;top:850.55px;font-weight:bold;font-size:16.5px;-webkit-text-stroke:0.2px;transform:scaleX(1.0182);transform-origin:0 50%;">Силденафіли</span>
<svg style="left:25.75px;top:887.05px" width="13" height="13" viewBox="0 0 13 13"><rect x="0.75" y="0.75" width="11.5" height="11.5" rx="1.6" fill="#f4f4f4" stroke="#8c8c8c" stroke-width="1.8"/><path d="M3.3 6.5H9.7M6.5 3.3V9.7" stroke="#3c50a8" stroke-width="1.6"/></svg>
<div style="left:39.5px;top:891.55px;width:7px;height:0;border-top:1.5px dotted #a6a6a6"></div>
<svg style="left:48.1px;top:880.5px" width="22.3" height="22.5" viewBox="0 0 22.3 22.5"><path d="M3 0.4H19.3Q20.4 0.4 20.9 1.3L21.9 4.6V21Q21.9 22.1 20.8 22.1H1.5Q0.4 22.1 0.4 21V4.6L1.4 1.3Q1.9 0.4 3 0.4Z" fill="#d9a26b" stroke="#c48e57" stroke-width="0.8"/><path d="M3.1 0.9H19.2Q20 0.9 20.4 1.6L21.4 4.8L19.9 6.2H2.4L0.9 4.8L1.9 1.6Q2.3 0.9 3.1 0.9Z" fill="#edc08e"/><path d="M2.3 6.5H20" stroke="#bd8751" stroke-width="0.8"/><rect x="4.1" y="8.3" width="14.1" height="10.6" fill="#c68f58"/><path d="M5.6 8.3V18.9M8.4 8.3V18.9M11.2 8.3V18.9M14 8.3V18.9M16.8 8.3V18.9" stroke="#ae7a47" stroke-width="1"/><path d="M0.8 21.1Q0.9 21.8 1.6 21.8H20.7Q21.4 21.8 21.5 21.1L18.2 18.9H4.1Z" fill="#bd8751" opacity=".7"/><rect x="11.6" y="11.8" width="8.2" height="6.5" fill="#dfeaf1"/><rect x="11.6" y="11.8" width="8.2" height="2" fill="#45a9f3"/><rect x="11.6" y="13.8" width="8.2" height="0.8" fill="#a8d8f8"/><path d="M13.4 16.4H18" stroke="#a9bccb" stroke-width="1"/></svg>
<div style="left:78px;top:879.75px;width:24px;height:28px;overflow:hidden">
<span style="left:1.00px;top:-0.70px;font-weight:bold;font-size:16.5px;-webkit-text-stroke:0.2px;transform:scaleX(1.1442);transform-origin:0 50%;">136</span>
</div>
<span style="left:108.00px;top:879.05px;font-weight:bold;font-size:16.5px;-webkit-text-stroke:0.2px;transform:scaleX(1.0480);transform-origin:0 50%;">Флакони</span>
<svg style="left:25.75px;top:915.55px" width="13" height="13" viewBox="0 0 13 13"><rect x="0.75" y="0.75" width="11.5" height="11.5" rx="1.6" fill="#f4f4f4" stroke="#8c8c8c" stroke-width="1.8"/><path d="M3.3 6.5H9.7M6.5 3.3V9.7" stroke="#3c50a8" stroke-width="1.6"/></svg>
<div style="left:39.5px;top:920.05px;width:7px;height:0;border-top:1.5px dotted #a6a6a6"></div>
<svg style="left:48.1px;top:909.0px" width="22.3" height="22.5" viewBox="0 0 22.3 22.5"><path d="M3 0.4H19.3Q20.4 0.4 20.9 1.3L21.9 4.6V21Q21.9 22.1 20.8 22.1H1.5Q0.4 22.1 0.4 21V4.6L1.4 1.3Q1.9 0.4 3 0.4Z" fill="#d9a26b" stroke="#c48e57" stroke-width="0.8"/><path d="M3.1 0.9H19.2Q20 0.9 20.4 1.6L21.4 4.8L19.9 6.2H2.4L0.9 4.8L1.9 1.6Q2.3 0.9 3.1 0.9Z" fill="#edc08e"/><path d="M2.3 6.5H20" stroke="#bd8751" stroke-width="0.8"/><rect x="4.1" y="8.3" width="14.1" height="10.6" fill="#c68f58"/><path d="M5.6 8.3V18.9M8.4 8.3V18.9M11.2 8.3V18.9M14 8.3V18.9M16.8 8.3V18.9" stroke="#ae7a47" stroke-width="1"/><path d="M0.8 21.1Q0.9 21.8 1.6 21.8H20.7Q21.4 21.8 21.5 21.1L18.2 18.9H4.1Z" fill="#bd8751" opacity=".7"/><rect x="11.6" y="11.8" width="8.2" height="6.5" fill="#dfeaf1"/><rect x="11.6" y="11.8" width="8.2" height="2" fill="#45a9f3"/><rect x="11.6" y="13.8" width="8.2" height="0.8" fill="#a8d8f8"/><path d="M13.4 16.4H18" stroke="#a9bccb" stroke-width="1"/></svg>
<div style="left:78px;top:908.25px;width:24px;height:28px;overflow:hidden">
<span style="left:1.00px;top:-0.70px;font-weight:bold;font-size:16.5px;-webkit-text-stroke:0.2px;transform:scaleX(1.1442);transform-origin:0 50%;">137</span>
</div>
<span style="left:108.00px;top:907.55px;font-weight:bold;font-size:16.5px;-webkit-text-stroke:0.2px;transform:scaleX(1.0580);transform-origin:0 50%;">Опорно рухова мазі</span>
<svg style="left:25.75px;top:944.05px" width="13" height="13" viewBox="0 0 13 13"><rect x="0.75" y="0.75" width="11.5" height="11.5" rx="1.6" fill="#f4f4f4" stroke="#8c8c8c" stroke-width="1.8"/><path d="M3.3 6.5H9.7M6.5 3.3V9.7" stroke="#3c50a8" stroke-width="1.6"/></svg>
<div style="left:39.5px;top:948.55px;width:7px;height:0;border-top:1.5px dotted #a6a6a6"></div>
<svg style="left:48.1px;top:937.5px" width="22.3" height="22.5" viewBox="0 0 22.3 22.5"><path d="M3 0.4H19.3Q20.4 0.4 20.9 1.3L21.9 4.6V21Q21.9 22.1 20.8 22.1H1.5Q0.4 22.1 0.4 21V4.6L1.4 1.3Q1.9 0.4 3 0.4Z" fill="#d9a26b" stroke="#c48e57" stroke-width="0.8"/><path d="M3.1 0.9H19.2Q20 0.9 20.4 1.6L21.4 4.8L19.9 6.2H2.4L0.9 4.8L1.9 1.6Q2.3 0.9 3.1 0.9Z" fill="#edc08e"/><path d="M2.3 6.5H20" stroke="#bd8751" stroke-width="0.8"/><rect x="4.1" y="8.3" width="14.1" height="10.6" fill="#c68f58"/><path d="M5.6 8.3V18.9M8.4 8.3V18.9M11.2 8.3V18.9M14 8.3V18.9M16.8 8.3V18.9" stroke="#ae7a47" stroke-width="1"/><path d="M0.8 21.1Q0.9 21.8 1.6 21.8H20.7Q21.4 21.8 21.5 21.1L18.2 18.9H4.1Z" fill="#bd8751" opacity=".7"/><rect x="11.6" y="11.8" width="8.2" height="6.5" fill="#dfeaf1"/><rect x="11.6" y="11.8" width="8.2" height="2" fill="#45a9f3"/><rect x="11.6" y="13.8" width="8.2" height="0.8" fill="#a8d8f8"/><path d="M13.4 16.4H18" stroke="#a9bccb" stroke-width="1"/></svg>
<div style="left:78px;top:936.75px;width:24px;height:28px;overflow:hidden">
<span style="left:1.00px;top:-0.70px;font-weight:bold;font-size:16.5px;-webkit-text-stroke:0.2px;transform:scaleX(1.1442);transform-origin:0 50%;">139</span>
</div>
<span style="left:108.00px;top:936.05px;font-weight:bold;font-size:16.5px;-webkit-text-stroke:0.2px;transform:scaleX(1.0534);transform-origin:0 50%;">Антидіарейні ЛЗ</span>
<svg style="left:25.75px;top:972.55px" width="13" height="13" viewBox="0 0 13 13"><rect x="0.75" y="0.75" width="11.5" height="11.5" rx="1.6" fill="#f4f4f4" stroke="#8c8c8c" stroke-width="1.8"/><path d="M3.3 6.5H9.7M6.5 3.3V9.7" stroke="#3c50a8" stroke-width="1.6"/></svg>
<div style="left:39.5px;top:977.05px;width:7px;height:0;border-top:1.5px dotted #a6a6a6"></div>
<svg style="left:48.1px;top:966.0px" width="22.3" height="22.5" viewBox="0 0 22.3 22.5"><path d="M3 0.4H19.3Q20.4 0.4 20.9 1.3L21.9 4.6V21Q21.9 22.1 20.8 22.1H1.5Q0.4 22.1 0.4 21V4.6L1.4 1.3Q1.9 0.4 3 0.4Z" fill="#d9a26b" stroke="#c48e57" stroke-width="0.8"/><path d="M3.1 0.9H19.2Q20 0.9 20.4 1.6L21.4 4.8L19.9 6.2H2.4L0.9 4.8L1.9 1.6Q2.3 0.9 3.1 0.9Z" fill="#edc08e"/><path d="M2.3 6.5H20" stroke="#bd8751" stroke-width="0.8"/><rect x="4.1" y="8.3" width="14.1" height="10.6" fill="#c68f58"/><path d="M5.6 8.3V18.9M8.4 8.3V18.9M11.2 8.3V18.9M14 8.3V18.9M16.8 8.3V18.9" stroke="#ae7a47" stroke-width="1"/><path d="M0.8 21.1Q0.9 21.8 1.6 21.8H20.7Q21.4 21.8 21.5 21.1L18.2 18.9H4.1Z" fill="#bd8751" opacity=".7"/><rect x="11.6" y="11.8" width="8.2" height="6.5" fill="#dfeaf1"/><rect x="11.6" y="11.8" width="8.2" height="2" fill="#45a9f3"/><rect x="11.6" y="13.8" width="8.2" height="0.8" fill="#a8d8f8"/><path d="M13.4 16.4H18" stroke="#a9bccb" stroke-width="1"/></svg>
<div style="left:78px;top:965.25px;width:24px;height:28px;overflow:hidden">
<span style="left:1.00px;top:-0.70px;font-weight:bold;font-size:16.5px;-webkit-text-stroke:0.2px;transform:scaleX(1.1442);transform-origin:0 50%;">140</span>
</div>
<span style="left:108.00px;top:964.55px;font-weight:bold;font-size:16.5px;-webkit-text-stroke:0.2px;transform:scaleX(1.0568);transform-origin:0 50%;">Противірусні</span>
<svg style="left:25.75px;top:1001.05px" width="13" height="13" viewBox="0 0 13 13"><rect x="0.75" y="0.75" width="11.5" height="11.5" rx="1.6" fill="#f4f4f4" stroke="#8c8c8c" stroke-width="1.8"/><path d="M3.3 6.5H9.7M6.5 3.3V9.7" stroke="#3c50a8" stroke-width="1.6"/></svg>
<div style="left:39.5px;top:1005.55px;width:7px;height:0;border-top:1.5px dotted #a6a6a6"></div>
<svg style="left:48.1px;top:994.5px" width="22.3" height="22.5" viewBox="0 0 22.3 22.5"><path d="M3 0.4H19.3Q20.4 0.4 20.9 1.3L21.9 4.6V21Q21.9 22.1 20.8 22.1H1.5Q0.4 22.1 0.4 21V4.6L1.4 1.3Q1.9 0.4 3 0.4Z" fill="#d9a26b" stroke="#c48e57" stroke-width="0.8"/><path d="M3.1 0.9H19.2Q20 0.9 20.4 1.6L21.4 4.8L19.9 6.2H2.4L0.9 4.8L1.9 1.6Q2.3 0.9 3.1 0.9Z" fill="#edc08e"/><path d="M2.3 6.5H20" stroke="#bd8751" stroke-width="0.8"/><rect x="4.1" y="8.3" width="14.1" height="10.6" fill="#c68f58"/><path d="M5.6 8.3V18.9M8.4 8.3V18.9M11.2 8.3V18.9M14 8.3V18.9M16.8 8.3V18.9" stroke="#ae7a47" stroke-width="1"/><path d="M0.8 21.1Q0.9 21.8 1.6 21.8H20.7Q21.4 21.8 21.5 21.1L18.2 18.9H4.1Z" fill="#bd8751" opacity=".7"/><rect x="11.6" y="11.8" width="8.2" height="6.5" fill="#dfeaf1"/><rect x="11.6" y="11.8" width="8.2" height="2" fill="#45a9f3"/><rect x="11.6" y="13.8" width="8.2" height="0.8" fill="#a8d8f8"/><path d="M13.4 16.4H18" stroke="#a9bccb" stroke-width="1"/></svg>
<div style="left:78px;top:993.75px;width:24px;height:28px;overflow:hidden">
<span style="left:1.00px;top:-0.70px;font-weight:bold;font-size:16.5px;-webkit-text-stroke:0.2px;transform:scaleX(1.1442);transform-origin:0 50%;">142</span>
</div>
<span style="left:108.00px;top:993.05px;font-weight:bold;font-size:16.5px;-webkit-text-stroke:0.2px;transform:scaleX(1.0625);transform-origin:0 50%;">Антиколіки</span>
<svg style="left:25.75px;top:1029.55px" width="13" height="13" viewBox="0 0 13 13"><rect x="0.75" y="0.75" width="11.5" height="11.5" rx="1.6" fill="#f4f4f4" stroke="#8c8c8c" stroke-width="1.8"/><path d="M3.3 6.5H9.7M6.5 3.3V9.7" stroke="#3c50a8" stroke-width="1.6"/></svg>
<div style="left:39.5px;top:1034.05px;width:7px;height:0;border-top:1.5px dotted #a6a6a6"></div>
<svg style="left:48.1px;top:1023.0px" width="22.3" height="22.5" viewBox="0 0 22.3 22.5"><path d="M3 0.4H19.3Q20.4 0.4 20.9 1.3L21.9 4.6V21Q21.9 22.1 20.8 22.1H1.5Q0.4 22.1 0.4 21V4.6L1.4 1.3Q1.9 0.4 3 0.4Z" fill="#d9a26b" stroke="#c48e57" stroke-width="0.8"/><path d="M3.1 0.9H19.2Q20 0.9 20.4 1.6L21.4 4.8L19.9 6.2H2.4L0.9 4.8L1.9 1.6Q2.3 0.9 3.1 0.9Z" fill="#edc08e"/><path d="M2.3 6.5H20" stroke="#bd8751" stroke-width="0.8"/><rect x="4.1" y="8.3" width="14.1" height="10.6" fill="#c68f58"/><path d="M5.6 8.3V18.9M8.4 8.3V18.9M11.2 8.3V18.9M14 8.3V18.9M16.8 8.3V18.9" stroke="#ae7a47" stroke-width="1"/><path d="M0.8 21.1Q0.9 21.8 1.6 21.8H20.7Q21.4 21.8 21.5 21.1L18.2 18.9H4.1Z" fill="#bd8751" opacity=".7"/><rect x="11.6" y="11.8" width="8.2" height="6.5" fill="#dfeaf1"/><rect x="11.6" y="11.8" width="8.2" height="2" fill="#45a9f3"/><rect x="11.6" y="13.8" width="8.2" height="0.8" fill="#a8d8f8"/><path d="M13.4 16.4H18" stroke="#a9bccb" stroke-width="1"/></svg>
<div style="left:78px;top:1022.25px;width:24px;height:28px;overflow:hidden">
<span style="left:1.00px;top:-0.70px;font-weight:bold;font-size:16.5px;-webkit-text-stroke:0.2px;transform:scaleX(1.1442);transform-origin:0 50%;">143</span>
</div>
<span style="left:108.00px;top:1021.55px;font-weight:bold;font-size:16.5px;-webkit-text-stroke:0.2px;transform:scaleX(1.0428);transform-origin:0 50%;">Сиропи від кашлю</span>
<svg style="left:25.75px;top:1058.05px" width="13" height="13" viewBox="0 0 13 13"><rect x="0.75" y="0.75" width="11.5" height="11.5" rx="1.6" fill="#f4f4f4" stroke="#8c8c8c" stroke-width="1.8"/><path d="M3.3 6.5H9.7M6.5 3.3V9.7" stroke="#3c50a8" stroke-width="1.6"/></svg>
<div style="left:39.5px;top:1062.55px;width:7px;height:0;border-top:1.5px dotted #a6a6a6"></div>
<svg style="left:48.1px;top:1051.5px" width="22.3" height="22.5" viewBox="0 0 22.3 22.5"><path d="M3 0.4H19.3Q20.4 0.4 20.9 1.3L21.9 4.6V21Q21.9 22.1 20.8 22.1H1.5Q0.4 22.1 0.4 21V4.6L1.4 1.3Q1.9 0.4 3 0.4Z" fill="#d9a26b" stroke="#c48e57" stroke-width="0.8"/><path d="M3.1 0.9H19.2Q20 0.9 20.4 1.6L21.4 4.8L19.9 6.2H2.4L0.9 4.8L1.9 1.6Q2.3 0.9 3.1 0.9Z" fill="#edc08e"/><path d="M2.3 6.5H20" stroke="#bd8751" stroke-width="0.8"/><rect x="4.1" y="8.3" width="14.1" height="10.6" fill="#c68f58"/><path d="M5.6 8.3V18.9M8.4 8.3V18.9M11.2 8.3V18.9M14 8.3V18.9M16.8 8.3V18.9" stroke="#ae7a47" stroke-width="1"/><path d="M0.8 21.1Q0.9 21.8 1.6 21.8H20.7Q21.4 21.8 21.5 21.1L18.2 18.9H4.1Z" fill="#bd8751" opacity=".7"/><rect x="11.6" y="11.8" width="8.2" height="6.5" fill="#dfeaf1"/><rect x="11.6" y="11.8" width="8.2" height="2" fill="#45a9f3"/><rect x="11.6" y="13.8" width="8.2" height="0.8" fill="#a8d8f8"/><path d="M13.4 16.4H18" stroke="#a9bccb" stroke-width="1"/></svg>
<div style="left:78px;top:1050.75px;width:24px;height:28px;overflow:hidden">
<span style="left:1.00px;top:-0.70px;font-weight:bold;font-size:16.5px;-webkit-text-stroke:0.2px;transform:scaleX(1.1442);transform-origin:0 50%;">146</span>
</div>
<span style="left:108.00px;top:1050.05px;font-weight:bold;font-size:16.5px;-webkit-text-stroke:0.2px;transform:scaleX(1.0959);transform-origin:0 50%;">Тести</span>
<svg style="left:25.75px;top:1086.55px" width="13" height="13" viewBox="0 0 13 13"><rect x="0.75" y="0.75" width="11.5" height="11.5" rx="1.6" fill="#f4f4f4" stroke="#8c8c8c" stroke-width="1.8"/><path d="M3.3 6.5H9.7M6.5 3.3V9.7" stroke="#3c50a8" stroke-width="1.6"/></svg>
<div style="left:39.5px;top:1091.05px;width:7px;height:0;border-top:1.5px dotted #a6a6a6"></div>
<svg style="left:48.1px;top:1080.0px" width="22.3" height="22.5" viewBox="0 0 22.3 22.5"><path d="M3 0.4H19.3Q20.4 0.4 20.9 1.3L21.9 4.6V21Q21.9 22.1 20.8 22.1H1.5Q0.4 22.1 0.4 21V4.6L1.4 1.3Q1.9 0.4 3 0.4Z" fill="#d9a26b" stroke="#c48e57" stroke-width="0.8"/><path d="M3.1 0.9H19.2Q20 0.9 20.4 1.6L21.4 4.8L19.9 6.2H2.4L0.9 4.8L1.9 1.6Q2.3 0.9 3.1 0.9Z" fill="#edc08e"/><path d="M2.3 6.5H20" stroke="#bd8751" stroke-width="0.8"/><rect x="4.1" y="8.3" width="14.1" height="10.6" fill="#c68f58"/><path d="M5.6 8.3V18.9M8.4 8.3V18.9M11.2 8.3V18.9M14 8.3V18.9M16.8 8.3V18.9" stroke="#ae7a47" stroke-width="1"/><path d="M0.8 21.1Q0.9 21.8 1.6 21.8H20.7Q21.4 21.8 21.5 21.1L18.2 18.9H4.1Z" fill="#bd8751" opacity=".7"/><rect x="11.6" y="11.8" width="8.2" height="6.5" fill="#dfeaf1"/><rect x="11.6" y="11.8" width="8.2" height="2" fill="#45a9f3"/><rect x="11.6" y="13.8" width="8.2" height="0.8" fill="#a8d8f8"/><path d="M13.4 16.4H18" stroke="#a9bccb" stroke-width="1"/></svg>
<div style="left:78px;top:1079.25px;width:24px;height:28px;overflow:hidden">
<span style="left:1.00px;top:-0.70px;font-weight:bold;font-size:16.5px;-webkit-text-stroke:0.2px;transform:scaleX(1.1442);transform-origin:0 50%;">155</span>
</div>
<span style="left:108.00px;top:1078.55px;font-weight:bold;font-size:16.5px;-webkit-text-stroke:0.2px;transform:scaleX(1.0738);transform-origin:0 50%;">Герпес</span>
<svg style="left:25.75px;top:1115.05px" width="13" height="13" viewBox="0 0 13 13"><rect x="0.75" y="0.75" width="11.5" height="11.5" rx="1.6" fill="#f4f4f4" stroke="#8c8c8c" stroke-width="1.8"/><path d="M3.3 6.5H9.7M6.5 3.3V9.7" stroke="#3c50a8" stroke-width="1.6"/></svg>
<div style="left:39.5px;top:1119.55px;width:7px;height:0;border-top:1.5px dotted #a6a6a6"></div>
<svg style="left:48.1px;top:1108.5px" width="22.3" height="22.5" viewBox="0 0 22.3 22.5"><path d="M3 0.4H19.3Q20.4 0.4 20.9 1.3L21.9 4.6V21Q21.9 22.1 20.8 22.1H1.5Q0.4 22.1 0.4 21V4.6L1.4 1.3Q1.9 0.4 3 0.4Z" fill="#d9a26b" stroke="#c48e57" stroke-width="0.8"/><path d="M3.1 0.9H19.2Q20 0.9 20.4 1.6L21.4 4.8L19.9 6.2H2.4L0.9 4.8L1.9 1.6Q2.3 0.9 3.1 0.9Z" fill="#edc08e"/><path d="M2.3 6.5H20" stroke="#bd8751" stroke-width="0.8"/><rect x="4.1" y="8.3" width="14.1" height="10.6" fill="#c68f58"/><path d="M5.6 8.3V18.9M8.4 8.3V18.9M11.2 8.3V18.9M14 8.3V18.9M16.8 8.3V18.9" stroke="#ae7a47" stroke-width="1"/><path d="M0.8 21.1Q0.9 21.8 1.6 21.8H20.7Q21.4 21.8 21.5 21.1L18.2 18.9H4.1Z" fill="#bd8751" opacity=".7"/><rect x="11.6" y="11.8" width="8.2" height="6.5" fill="#dfeaf1"/><rect x="11.6" y="11.8" width="8.2" height="2" fill="#45a9f3"/><rect x="11.6" y="13.8" width="8.2" height="0.8" fill="#a8d8f8"/><path d="M13.4 16.4H18" stroke="#a9bccb" stroke-width="1"/></svg>
<div style="left:78px;top:1107.75px;width:24px;height:28px;overflow:hidden">
<span style="left:1.00px;top:-0.70px;font-weight:bold;font-size:16.5px;-webkit-text-stroke:0.2px;transform:scaleX(1.1442);transform-origin:0 50%;">162</span>
</div>
<span style="left:108.00px;top:1107.05px;font-weight:bold;font-size:16.5px;-webkit-text-stroke:0.2px;transform:scaleX(1.0763);transform-origin:0 50%;">Засоби від педикульозу</span>
<svg style="left:25.75px;top:1143.55px" width="13" height="13" viewBox="0 0 13 13"><rect x="0.75" y="0.75" width="11.5" height="11.5" rx="1.6" fill="#f4f4f4" stroke="#8c8c8c" stroke-width="1.8"/><path d="M3.3 6.5H9.7M6.5 3.3V9.7" stroke="#3c50a8" stroke-width="1.6"/></svg>
<div style="left:39.5px;top:1148.05px;width:7px;height:0;border-top:1.5px dotted #a6a6a6"></div>
<svg style="left:48.1px;top:1137.0px" width="22.3" height="22.5" viewBox="0 0 22.3 22.5"><path d="M3 0.4H19.3Q20.4 0.4 20.9 1.3L21.9 4.6V21Q21.9 22.1 20.8 22.1H1.5Q0.4 22.1 0.4 21V4.6L1.4 1.3Q1.9 0.4 3 0.4Z" fill="#d9a26b" stroke="#c48e57" stroke-width="0.8"/><path d="M3.1 0.9H19.2Q20 0.9 20.4 1.6L21.4 4.8L19.9 6.2H2.4L0.9 4.8L1.9 1.6Q2.3 0.9 3.1 0.9Z" fill="#edc08e"/><path d="M2.3 6.5H20" stroke="#bd8751" stroke-width="0.8"/><rect x="4.1" y="8.3" width="14.1" height="10.6" fill="#c68f58"/><path d="M5.6 8.3V18.9M8.4 8.3V18.9M11.2 8.3V18.9M14 8.3V18.9M16.8 8.3V18.9" stroke="#ae7a47" stroke-width="1"/><path d="M0.8 21.1Q0.9 21.8 1.6 21.8H20.7Q21.4 21.8 21.5 21.1L18.2 18.9H4.1Z" fill="#bd8751" opacity=".7"/><rect x="11.6" y="11.8" width="8.2" height="6.5" fill="#dfeaf1"/><rect x="11.6" y="11.8" width="8.2" height="2" fill="#45a9f3"/><rect x="11.6" y="13.8" width="8.2" height="0.8" fill="#a8d8f8"/><path d="M13.4 16.4H18" stroke="#a9bccb" stroke-width="1"/></svg>
<div style="left:78px;top:1136.25px;width:24px;height:28px;overflow:hidden">
<span style="left:1.00px;top:-0.70px;font-weight:bold;font-size:16.5px;-webkit-text-stroke:0.2px;transform:scaleX(1.1442);transform-origin:0 50%;">170</span>
</div>
<span style="left:108.00px;top:1135.55px;font-weight:bold;font-size:16.5px;-webkit-text-stroke:0.2px;transform:scaleX(1.0660);transform-origin:0 50%;">Засоби від головного болю</span>
<svg style="left:25.75px;top:1172.05px" width="13" height="13" viewBox="0 0 13 13"><rect x="0.75" y="0.75" width="11.5" height="11.5" rx="1.6" fill="#f4f4f4" stroke="#8c8c8c" stroke-width="1.8"/><path d="M3.3 6.5H9.7M6.5 3.3V9.7" stroke="#3c50a8" stroke-width="1.6"/></svg>
<div style="left:39.5px;top:1176.55px;width:7px;height:0;border-top:1.5px dotted #a6a6a6"></div>
<svg style="left:48.1px;top:1165.5px" width="22.3" height="22.5" viewBox="0 0 22.3 22.5"><path d="M3 0.4H19.3Q20.4 0.4 20.9 1.3L21.9 4.6V21Q21.9 22.1 20.8 22.1H1.5Q0.4 22.1 0.4 21V4.6L1.4 1.3Q1.9 0.4 3 0.4Z" fill="#d9a26b" stroke="#c48e57" stroke-width="0.8"/><path d="M3.1 0.9H19.2Q20 0.9 20.4 1.6L21.4 4.8L19.9 6.2H2.4L0.9 4.8L1.9 1.6Q2.3 0.9 3.1 0.9Z" fill="#edc08e"/><path d="M2.3 6.5H20" stroke="#bd8751" stroke-width="0.8"/><rect x="4.1" y="8.3" width="14.1" height="10.6" fill="#c68f58"/><path d="M5.6 8.3V18.9M8.4 8.3V18.9M11.2 8.3V18.9M14 8.3V18.9M16.8 8.3V18.9" stroke="#ae7a47" stroke-width="1"/><path d="M0.8 21.1Q0.9 21.8 1.6 21.8H20.7Q21.4 21.8 21.5 21.1L18.2 18.9H4.1Z" fill="#bd8751" opacity=".7"/><rect x="11.6" y="11.8" width="8.2" height="6.5" fill="#dfeaf1"/><rect x="11.6" y="11.8" width="8.2" height="2" fill="#45a9f3"/><rect x="11.6" y="13.8" width="8.2" height="0.8" fill="#a8d8f8"/><path d="M13.4 16.4H18" stroke="#a9bccb" stroke-width="1"/></svg>
<div style="left:78px;top:1164.75px;width:24px;height:28px;overflow:hidden">
<span style="left:1.00px;top:-0.70px;font-weight:bold;font-size:16.5px;-webkit-text-stroke:0.2px;transform:scaleX(1.1442);transform-origin:0 50%;">172</span>
</div>
<span style="left:108.00px;top:1164.05px;font-weight:bold;font-size:16.5px;-webkit-text-stroke:0.2px;transform:scaleX(1.0659);transform-origin:0 50%;">Протигрибкові ЛЗ табл</span>
<svg style="left:25.75px;top:1200.55px" width="13" height="13" viewBox="0 0 13 13"><rect x="0.75" y="0.75" width="11.5" height="11.5" rx="1.6" fill="#f4f4f4" stroke="#8c8c8c" stroke-width="1.8"/><path d="M3.3 6.5H9.7M6.5 3.3V9.7" stroke="#3c50a8" stroke-width="1.6"/></svg>
<div style="left:39.5px;top:1205.05px;width:7px;height:0;border-top:1.5px dotted #a6a6a6"></div>
<svg style="left:48.1px;top:1194.0px" width="22.3" height="22.5" viewBox="0 0 22.3 22.5"><path d="M3 0.4H19.3Q20.4 0.4 20.9 1.3L21.9 4.6V21Q21.9 22.1 20.8 22.1H1.5Q0.4 22.1 0.4 21V4.6L1.4 1.3Q1.9 0.4 3 0.4Z" fill="#d9a26b" stroke="#c48e57" stroke-width="0.8"/><path d="M3.1 0.9H19.2Q20 0.9 20.4 1.6L21.4 4.8L19.9 6.2H2.4L0.9 4.8L1.9 1.6Q2.3 0.9 3.1 0.9Z" fill="#edc08e"/><path d="M2.3 6.5H20" stroke="#bd8751" stroke-width="0.8"/><rect x="4.1" y="8.3" width="14.1" height="10.6" fill="#c68f58"/><path d="M5.6 8.3V18.9M8.4 8.3V18.9M11.2 8.3V18.9M14 8.3V18.9M16.8 8.3V18.9" stroke="#ae7a47" stroke-width="1"/><path d="M0.8 21.1Q0.9 21.8 1.6 21.8H20.7Q21.4 21.8 21.5 21.1L18.2 18.9H4.1Z" fill="#bd8751" opacity=".7"/><rect x="11.6" y="11.8" width="8.2" height="6.5" fill="#dfeaf1"/><rect x="11.6" y="11.8" width="8.2" height="2" fill="#45a9f3"/><rect x="11.6" y="13.8" width="8.2" height="0.8" fill="#a8d8f8"/><path d="M13.4 16.4H18" stroke="#a9bccb" stroke-width="1"/></svg>
<div style="left:78px;top:1193.25px;width:24px;height:28px;overflow:hidden">
<span style="left:1.00px;top:-0.70px;font-weight:bold;font-size:16.5px;-webkit-text-stroke:0.2px;transform:scaleX(1.1442);transform-origin:0 50%;">174</span>
</div>
<span style="left:108.00px;top:1192.55px;font-weight:bold;font-size:16.5px;-webkit-text-stroke:0.2px;transform:scaleX(1.0835);transform-origin:0 50%;">Грибок стоп та нігтів</span>
<svg style="left:25.75px;top:1229.05px" width="13" height="13" viewBox="0 0 13 13"><rect x="0.75" y="0.75" width="11.5" height="11.5" rx="1.6" fill="#f4f4f4" stroke="#8c8c8c" stroke-width="1.8"/><path d="M3.3 6.5H9.7M6.5 3.3V9.7" stroke="#3c50a8" stroke-width="1.6"/></svg>
<div style="left:39.5px;top:1233.55px;width:7px;height:0;border-top:1.5px dotted #a6a6a6"></div>
<svg style="left:48.1px;top:1222.5px" width="22.3" height="22.5" viewBox="0 0 22.3 22.5"><path d="M3 0.4H19.3Q20.4 0.4 20.9 1.3L21.9 4.6V21Q21.9 22.1 20.8 22.1H1.5Q0.4 22.1 0.4 21V4.6L1.4 1.3Q1.9 0.4 3 0.4Z" fill="#d9a26b" stroke="#c48e57" stroke-width="0.8"/><path d="M3.1 0.9H19.2Q20 0.9 20.4 1.6L21.4 4.8L19.9 6.2H2.4L0.9 4.8L1.9 1.6Q2.3 0.9 3.1 0.9Z" fill="#edc08e"/><path d="M2.3 6.5H20" stroke="#bd8751" stroke-width="0.8"/><rect x="4.1" y="8.3" width="14.1" height="10.6" fill="#c68f58"/><path d="M5.6 8.3V18.9M8.4 8.3V18.9M11.2 8.3V18.9M14 8.3V18.9M16.8 8.3V18.9" stroke="#ae7a47" stroke-width="1"/><path d="M0.8 21.1Q0.9 21.8 1.6 21.8H20.7Q21.4 21.8 21.5 21.1L18.2 18.9H4.1Z" fill="#bd8751" opacity=".7"/><rect x="11.6" y="11.8" width="8.2" height="6.5" fill="#dfeaf1"/><rect x="11.6" y="11.8" width="8.2" height="2" fill="#45a9f3"/><rect x="11.6" y="13.8" width="8.2" height="0.8" fill="#a8d8f8"/><path d="M13.4 16.4H18" stroke="#a9bccb" stroke-width="1"/></svg>
<div style="left:78px;top:1221.75px;width:24px;height:28px;overflow:hidden">
<span style="left:1.00px;top:-0.70px;font-weight:bold;font-size:16.5px;-webkit-text-stroke:0.2px;transform:scaleX(1.1442);transform-origin:0 50%;">185</span>
</div>
<span style="left:108.00px;top:1221.05px;font-weight:bold;font-size:16.5px;-webkit-text-stroke:0.2px;transform:scaleX(1.0586);transform-origin:0 50%;">Венотоніки мазі</span>
<div style="left:0px;top:1248.6px;width:634.5px;height:1px;background:#a0a0a0;"></div>
<div style="left:17.5px;top:1250.5px;width:618.5px;height:31.5px;background:#f0f0f0;"></div>
<div style="left:0px;top:1281px;width:634.5px;height:1.5px;background:#ababab;"></div>
<div style="left:107px;top:1252.5px;width:341px;height:26.5px;background:#f0f0f0;border-top:1.5px solid #9d9d9d;border-left:1.5px solid #9d9d9d;border-bottom:1.5px solid #fff;border-right:1.5px solid #fff;box-sizing:border-box"></div>
<span style="left:110.00px;top:1251.00px;font-weight:bold;font-size:16.5px;-webkit-text-stroke:0.2px;transform:scaleX(1.0201);transform-origin:0 50%;">Записей: 74</span>
<div style="left:636px;top:224px;width:22.5px;height:1060px;background:#f0f0f0;"></div>
<div style="left:636.3px;top:221px;width:22px;height:980.5px;background:#cdcdcd;"></div>
<svg style="left:640.5px;top:204px" width="13" height="10" viewBox="0 0 13 10"><path d="M1.6 8L6.5 2.6L11.4 8" fill="none" stroke="#555" stroke-width="3.1"/></svg>
<svg style="left:640.5px;top:1266px" width="13" height="10" viewBox="0 0 13 10"><path d="M1.6 2L6.5 7.4L11.4 2" fill="none" stroke="#555" stroke-width="3.1"/></svg>
<div style="left:26px;top:1284px;width:406px;height:22px;background:#cdcdcd;"></div>
<svg style="left:7.5px;top:1288.5px" width="10" height="13" viewBox="0 0 10 13"><path d="M8 1.6L2.6 6.5L8 11.4" fill="none" stroke="#555" stroke-width="3.1"/></svg>
<svg style="left:617px;top:1288.5px" width="10" height="13" viewBox="0 0 10 13"><path d="M2 1.6L7.4 6.5L2 11.4" fill="none" stroke="#555" stroke-width="3.1"/></svg>
<div style="left:664.5px;top:194.5px;width:1471.0px;height:28.5px;background:#fff;"></div>
<div style="left:2135.5px;top:194.5px;width:23.5px;height:27px;background:#fff;"></div>
<div style="left:664.5px;top:223px;width:1471.0px;height:970px;background:#fff;"></div>
<svg style="left:669px;top:203px" width="9" height="13" viewBox="0 0 9 13"><path d="M0 1.0H1.6M3 1.0H8" stroke="#222" stroke-width="1.4"/><path d="M0 3.7H1.6M3 3.7H8" stroke="#222" stroke-width="1.4"/><path d="M0 6.4H1.6M3 6.4H8" stroke="#222" stroke-width="1.4"/><path d="M0 9.100000000000001H1.6M3 9.100000000000001H8" stroke="#222" stroke-width="1.4"/><path d="M0 11.8H1.6M3 11.8H8" stroke="#222" stroke-width="1.4"/></svg>
<div style="left:681.0px;top:195px;width:1.5px;height:28px;background:#ececec;"></div>
<div style="left:753.05px;top:195px;width:1.5px;height:28px;background:#ececec;"></div>
<div style="left:1272.05px;top:195px;width:1.5px;height:28px;background:#ececec;"></div>
<div style="left:1624.35px;top:195px;width:1.5px;height:28px;background:#ececec;"></div>
<div style="left:1733.75px;top:195px;width:1.5px;height:28px;background:#ececec;"></div>
<div style="left:1773.05px;top:195px;width:1.5px;height:28px;background:#ececec;"></div>
<div style="left:1949.85px;top:195px;width:1.5px;height:28px;background:#ececec;"></div>
<div style="left:2060.95px;top:195px;width:1.5px;height:28px;background:#ececec;"></div>
<span style="left:710.12px;top:194.50px;font-size:16.5px;transform:scaleX(1.0783);transform-origin:50% 50%;">ІД</span>
<span style="left:956.20px;top:194.50px;font-size:16.5px;transform:scaleX(0.9725);transform-origin:50% 50%;">Найменування</span>
<span style="left:1411.46px;top:194.50px;font-size:16.5px;transform:scaleX(0.9921);transform-origin:50% 50%;">Виробник</span>
<span style="left:1631.72px;top:194.50px;font-size:16.5px;transform:scaleX(0.9889);transform-origin:50% 50%;">Код Моріона</span>
<span style="left:1741.02px;top:194.50px;font-size:16.5px;transform:scaleX(1.1552);transform-origin:50% 50%;">Ц...</span>
<span style="left:1781.30px;top:194.50px;font-size:16.5px;transform:scaleX(0.9789);transform-origin:50% 50%;">Асортиментний план</span>
<span style="left:1955.81px;top:194.50px;font-size:16.5px;transform:scaleX(1.0063);transform-origin:50% 50%;">Рецептурний</span>
<div style="left:2062px;top:194.5px;width:73.5px;height:28.5px;overflow:hidden">
<span style="left:13.00px;top:0.00px;font-size:16.5px;">Тип ПДВ</span>
</div>
<div style="left:664.5px;top:223px;width:17px;height:1003px;background:#f0f0f0;"></div>
<div style="left:664.5px;top:223px;width:1.4px;height:970px;background:#fff;"></div>
<svg style="left:0;top:0" width="2159" height="1375" viewBox="0 0 2159 1375"><path d="M664.5 251.50H2135.5" stroke="#a2a2a2" stroke-width="1.5"/><path d="M664.5 252.80H681.0" stroke="#fff" stroke-width="1"/><path d="M664.5 280.00H2135.5" stroke="#a2a2a2" stroke-width="1.5"/><path d="M664.5 281.30H681.0" stroke="#fff" stroke-width="1"/><path d="M664.5 308.50H2135.5" stroke="#a2a2a2" stroke-width="1.5"/><path d="M664.5 309.80H681.0" stroke="#fff" stroke-width="1"/><path d="M664.5 337.00H2135.5" stroke="#a2a2a2" stroke-width="1.5"/><path d="M664.5 338.30H681.0" stroke="#fff" stroke-width="1"/><path d="M664.5 365.50H2135.5" stroke="#a2a2a2" stroke-width="1.5"/><path d="M664.5 366.80H681.0" stroke="#fff" stroke-width="1"/><path d="M664.5 394.00H2135.5" stroke="#a2a2a2" stroke-width="1.5"/><path d="M664.5 395.30H681.0" stroke="#fff" stroke-width="1"/><path d="M664.5 422.50H2135.5" stroke="#a2a2a2" stroke-width="1.5"/><path d="M664.5 423.80H681.0" stroke="#fff" stroke-width="1"/><path d="M664.5 451.00H2135.5" stroke="#a2a2a2" stroke-width="1.5"/><path d="M664.5 452.30H681.0" stroke="#fff" stroke-width="1"/><path d="M664.5 479.50H2135.5" stroke="#a2a2a2" stroke-width="1.5"/><path d="M664.5 480.80H681.0" stroke="#fff" stroke-width="1"/><path d="M664.5 508.00H2135.5" stroke="#a2a2a2" stroke-width="1.5"/><path d="M664.5 509.30H681.0" stroke="#fff" stroke-width="1"/><path d="M664.5 536.50H2135.5" stroke="#a2a2a2" stroke-width="1.5"/><path d="M664.5 537.80H681.0" stroke="#fff" stroke-width="1"/><path d="M664.5 565.00H2135.5" stroke="#a2a2a2" stroke-width="1.5"/><path d="M664.5 566.30H681.0" stroke="#fff" stroke-width="1"/><path d="M664.5 593.50H2135.5" stroke="#a2a2a2" stroke-width="1.5"/><path d="M664.5 594.80H681.0" stroke="#fff" stroke-width="1"/><path d="M664.5 622.00H2135.5" stroke="#a2a2a2" stroke-width="1.5"/><path d="M664.5 623.30H681.0" stroke="#fff" stroke-width="1"/><path d="M664.5 650.50H2135.5" stroke="#a2a2a2" stroke-width="1.5"/><path d="M664.5 651.80H681.0" stroke="#fff" stroke-width="1"/><path d="M664.5 679.00H2135.5" stroke="#a2a2a2" stroke-width="1.5"/><path d="M664.5 680.30H681.0" stroke="#fff" stroke-width="1"/><path d="M664.5 707.50H2135.5" stroke="#a2a2a2" stroke-width="1.5"/><path d="M664.5 708.80H681.0" stroke="#fff" stroke-width="1"/><path d="M664.5 736.00H2135.5" stroke="#a2a2a2" stroke-width="1.5"/><path d="M664.5 737.30H681.0" stroke="#fff" stroke-width="1"/><path d="M664.5 764.50H2135.5" stroke="#a2a2a2" stroke-width="1.5"/><path d="M664.5 765.80H681.0" stroke="#fff" stroke-width="1"/><path d="M664.5 793.00H2135.5" stroke="#a2a2a2" stroke-width="1.5"/><path d="M664.5 794.30H681.0" stroke="#fff" stroke-width="1"/><path d="M664.5 821.50H2135.5" stroke="#a2a2a2" stroke-width="1.5"/><path d="M664.5 822.80H681.0" stroke="#fff" stroke-width="1"/><path d="M664.5 850.00H2135.5" stroke="#a2a2a2" stroke-width="1.5"/><path d="M664.5 851.30H681.0" stroke="#fff" stroke-width="1"/><path d="M664.5 878.50H2135.5" stroke="#a2a2a2" stroke-width="1.5"/><path d="M664.5 879.80H681.0" stroke="#fff" stroke-width="1"/><path d="M664.5 907.00H2135.5" stroke="#a2a2a2" stroke-width="1.5"/><path d="M664.5 908.30H681.0" stroke="#fff" stroke-width="1"/><path d="M664.5 935.50H2135.5" stroke="#a2a2a2" stroke-width="1.5"/><path d="M664.5 936.80H681.0" stroke="#fff" stroke-width="1"/><path d="M664.5 964.00H2135.5" stroke="#a2a2a2" stroke-width="1.5"/><path d="M664.5 965.30H681.0" stroke="#fff" stroke-width="1"/><path d="M664.5 992.50H2135.5" stroke="#a2a2a2" stroke-width="1.5"/><path d="M664.5 993.80H681.0" stroke="#fff" stroke-width="1"/><path d="M664.5 1021.00H2135.5" stroke="#a2a2a2" stroke-width="1.5"/><path d="M664.5 1022.30H681.0" stroke="#fff" stroke-width="1"/><path d="M664.5 1049.50H2135.5" stroke="#a2a2a2" stroke-width="1.5"/><path d="M664.5 1050.80H681.0" stroke="#fff" stroke-width="1"/><path d="M664.5 1078.00H2135.5" stroke="#a2a2a2" stroke-width="1.5"/><path d="M664.5 1079.30H681.0" stroke="#fff" stroke-width="1"/><path d="M664.5 1106.50H2135.5" stroke="#a2a2a2" stroke-width="1.5"/><path d="M664.5 1107.80H681.0" stroke="#fff" stroke-width="1"/><path d="M664.5 1135.00H2135.5" stroke="#a2a2a2" stroke-width="1.5"/><path d="M664.5 1136.30H681.0" stroke="#fff" stroke-width="1"/><path d="M664.5 1163.50H2135.5" stroke="#a2a2a2" stroke-width="1.5"/><path d="M664.5 1164.80H681.0" stroke="#fff" stroke-width="1"/><path d="M664.5 1192.50H2135.5" stroke="#a2a2a2" stroke-width="2.6"/><path d="M664.5 1193.30H681.0" stroke="#fff" stroke-width="1"/><path d="M681.75 223V1193" stroke="#a2a2a2" stroke-width="1.5"/><path d="M753.8 223V1193" stroke="#a2a2a2" stroke-width="1.5"/><path d="M1272.8 223V1193" stroke="#a2a2a2" stroke-width="1.5"/><path d="M1625.1 223V1193" stroke="#a2a2a2" stroke-width="1.5"/><path d="M1734.5 223V1193" stroke="#a2a2a2" stroke-width="1.5"/><path d="M1773.8 223V1193" stroke="#a2a2a2" stroke-width="1.5"/><path d="M1950.6 223V1193" stroke="#a2a2a2" stroke-width="1.5"/><path d="M2061.7 223V1193" stroke="#a2a2a2" stroke-width="1.5"/></svg>
<svg style="left:0;top:0" width="2159" height="1375" viewBox="0 0 2159 1375"><rect x="682.5" y="394.9" width="70.7" height="26.9" fill="#0078d7"/><rect x="1273.6" y="394.9" width="861.9000000000001" height="26.9" fill="#0078d7"/><path d="M1625.1 395.2V422.0" stroke="#7f93a8" stroke-width="1.4"/><path d="M1734.5 395.2V422.0" stroke="#7f93a8" stroke-width="1.4"/><path d="M1773.8 395.2V422.0" stroke="#7f93a8" stroke-width="1.4"/><path d="M1950.6 395.2V422.0" stroke="#7f93a8" stroke-width="1.4"/><path d="M2061.7 395.2V422.0" stroke="#7f93a8" stroke-width="1.4"/><rect x="683.2" y="395.2" width="69.4" height="26.2" fill="none" stroke="#e8963c" stroke-width="1.3" stroke-dasharray="1.5 1.5"/><path d="M1274 395.1H2135.5M1274 421.5H2135.5" stroke="#e8963c" stroke-width="1.3" stroke-dasharray="1.5 1.5"/><rect x="753" y="394.2" width="519" height="28.4" fill="#fff"/><path d="M1272 395.0H754.5V421.8H1272" fill="none" stroke="#222" stroke-width="1.7" stroke-dasharray="1.5 1.5"/></svg>
<svg style="left:669.5px;top:401.0px" width="9" height="14" viewBox="0 0 9 14"><path d="M1 1L7 7L1 13Z" fill="none" stroke="#000" stroke-width="1.3"/><circle cx="3.2" cy="7" r="1" fill="#000"/></svg>
<span style="left:704.11px;top:222.10px;font-weight:bold;font-size:16.5px;-webkit-text-stroke:0.2px;transform:scaleX(1.1495);transform-origin:100% 50%;">94105</span>
<span style="left:757.80px;top:222.10px;font-weight:bold;font-size:16.5px;-webkit-text-stroke:0.2px;transform:scaleX(1.0790);transform-origin:0 50%;">Лакалут з/п Альпин 50мл</span>
<span style="left:1277.40px;top:222.10px;font-weight:bold;font-size:16.5px;-webkit-text-stroke:0.2px;transform:scaleX(1.0525);transform-origin:0 50%;">Dr. Theiss Naturwaren GmbH</span>
<span style="left:1675.44px;top:222.10px;font-weight:bold;font-size:16.5px;-webkit-text-stroke:0.2px;transform:scaleX(1.1496);transform-origin:100% 50%;">149467</span>
<svg style="left:1744.2px;top:226.4px" width="20" height="20" viewBox="0 0 20 20"><rect x="0.85" y="0.85" width="18" height="18" fill="#fff" stroke="#333" stroke-width="1.6"/></svg>
<svg style="left:1852.2px;top:226.4px" width="20" height="20" viewBox="0 0 20 20"><rect x="0.85" y="0.85" width="18" height="18" fill="#fff" stroke="#333" stroke-width="1.6"/><path d="M3.8 9.8L7.6 13.6L15.6 4.6" fill="none" stroke="#555" stroke-width="1.7"/></svg>
<svg style="left:1996px;top:226.4px" width="20" height="20" viewBox="0 0 20 20"><rect x="0.85" y="0.85" width="18" height="18" fill="#fff" stroke="#333" stroke-width="1.6"/></svg>
<div style="left:2062.5px;top:224.10px;width:71px;height:26px;overflow:hidden">
<span style="left:2.40px;top:-2.00px;font-weight:bold;font-size:16.5px;-webkit-text-stroke:0.2px;transform:scaleX(1.0596);transform-origin:0 50%;">ПДВ 20%</span>
</div>
<span style="left:704.11px;top:250.60px;font-weight:bold;font-size:16.5px;-webkit-text-stroke:0.2px;transform:scaleX(1.1495);transform-origin:100% 50%;">98749</span>
<span style="left:757.80px;top:250.60px;font-weight:bold;font-size:16.5px;-webkit-text-stroke:0.2px;transform:scaleX(1.0902);transform-origin:0 50%;">Лакалут з/п Эдельвей 75мл</span>
<span style="left:1277.40px;top:250.60px;font-weight:bold;font-size:16.5px;-webkit-text-stroke:0.2px;transform:scaleX(1.0525);transform-origin:0 50%;">Dr. Theiss Naturwaren GmbH</span>
<span style="left:1675.44px;top:250.60px;font-weight:bold;font-size:16.5px;-webkit-text-stroke:0.2px;transform:scaleX(1.1496);transform-origin:100% 50%;">194644</span>
<svg style="left:1744.2px;top:254.90000000000003px" width="20" height="20" viewBox="0 0 20 20"><rect x="0.85" y="0.85" width="18" height="18" fill="#fff" stroke="#333" stroke-width="1.6"/></svg>
<svg style="left:1852.2px;top:254.90000000000003px" width="20" height="20" viewBox="0 0 20 20"><rect x="0.85" y="0.85" width="18" height="18" fill="#fff" stroke="#333" stroke-width="1.6"/><path d="M3.8 9.8L7.6 13.6L15.6 4.6" fill="none" stroke="#555" stroke-width="1.7"/></svg>
<svg style="left:1996px;top:254.90000000000003px" width="20" height="20" viewBox="0 0 20 20"><rect x="0.85" y="0.85" width="18" height="18" fill="#fff" stroke="#333" stroke-width="1.6"/></svg>
<div style="left:2062.5px;top:252.60px;width:71px;height:26px;overflow:hidden">
<span style="left:2.40px;top:-2.00px;font-weight:bold;font-size:16.5px;-webkit-text-stroke:0.2px;transform:scaleX(1.0596);transform-origin:0 50%;">ПДВ 20%</span>
</div>
<span style="left:704.11px;top:279.10px;font-weight:bold;font-size:16.5px;-webkit-text-stroke:0.2px;transform:scaleX(1.1495);transform-origin:100% 50%;">92584</span>
<span style="left:757.80px;top:279.10px;font-weight:bold;font-size:16.5px;-webkit-text-stroke:0.2px;transform:scaleX(1.0481);transform-origin:0 50%;">З/п Emofluor со стабилизированным фторидом олова, 75...</span>
<span style="left:1277.40px;top:279.10px;font-weight:bold;font-size:16.5px;-webkit-text-stroke:0.2px;transform:scaleX(1.0174);transform-origin:0 50%;">Dr.Wild &amp;.Co. AG</span>
<svg style="left:1744.2px;top:283.40000000000003px" width="20" height="20" viewBox="0 0 20 20"><rect x="0.85" y="0.85" width="18" height="18" fill="#fff" stroke="#333" stroke-width="1.6"/></svg>
<svg style="left:1852.2px;top:283.40000000000003px" width="20" height="20" viewBox="0 0 20 20"><rect x="0.85" y="0.85" width="18" height="18" fill="#fff" stroke="#333" stroke-width="1.6"/><path d="M3.8 9.8L7.6 13.6L15.6 4.6" fill="none" stroke="#555" stroke-width="1.7"/></svg>
<svg style="left:1996px;top:283.40000000000003px" width="20" height="20" viewBox="0 0 20 20"><rect x="0.85" y="0.85" width="18" height="18" fill="#fff" stroke="#333" stroke-width="1.6"/></svg>
<div style="left:2062.5px;top:281.10px;width:71px;height:26px;overflow:hidden">
<span style="left:2.40px;top:-2.00px;font-weight:bold;font-size:16.5px;-webkit-text-stroke:0.2px;transform:scaleX(1.0596);transform-origin:0 50%;">ПДВ 20%</span>
</div>
<span style="left:694.94px;top:307.60px;font-weight:bold;font-size:16.5px;-webkit-text-stroke:0.2px;transform:scaleX(1.1496);transform-origin:100% 50%;">109634</span>
<span style="left:757.80px;top:307.60px;font-weight:bold;font-size:16.5px;-webkit-text-stroke:0.2px;transform:scaleX(1.0980);transform-origin:0 50%;">Альпен Дент паста зубн. отбел. д/чувств. зуб.100 мл</span>
<span style="left:1277.40px;top:307.60px;font-weight:bold;font-size:16.5px;-webkit-text-stroke:0.2px;transform:scaleX(0.9968);transform-origin:0 50%;">Fushima S L</span>
<svg style="left:1744.2px;top:311.90000000000003px" width="20" height="20" viewBox="0 0 20 20"><rect x="0.85" y="0.85" width="18" height="18" fill="#fff" stroke="#333" stroke-width="1.6"/></svg>
<svg style="left:1852.2px;top:311.90000000000003px" width="20" height="20" viewBox="0 0 20 20"><rect x="0.85" y="0.85" width="18" height="18" fill="#fff" stroke="#333" stroke-width="1.6"/><path d="M3.8 9.8L7.6 13.6L15.6 4.6" fill="none" stroke="#555" stroke-width="1.7"/></svg>
<svg style="left:1996px;top:311.90000000000003px" width="20" height="20" viewBox="0 0 20 20"><rect x="0.85" y="0.85" width="18" height="18" fill="#fff" stroke="#333" stroke-width="1.6"/></svg>
<div style="left:2062.5px;top:309.60px;width:71px;height:26px;overflow:hidden">
<span style="left:2.40px;top:-2.00px;font-weight:bold;font-size:16.5px;-webkit-text-stroke:0.2px;transform:scaleX(1.0596);transform-origin:0 50%;">ПДВ 20%</span>
</div>
<span style="left:695.84px;top:336.10px;font-weight:bold;font-size:16.5px;-webkit-text-stroke:0.2px;transform:scaleX(1.1688);transform-origin:100% 50%;">116375</span>
<span style="left:757.80px;top:336.10px;font-weight:bold;font-size:16.5px;-webkit-text-stroke:0.2px;transform:scaleX(1.0677);transform-origin:0 50%;">З/п Сенсодин пронамель комплексное действие 75мл</span>
<span style="left:1277.40px;top:336.10px;font-weight:bold;font-size:16.5px;-webkit-text-stroke:0.2px;transform:scaleX(1.0384);transform-origin:0 50%;">GlaxoSmithKline</span>
<span style="left:1675.44px;top:336.10px;font-weight:bold;font-size:16.5px;-webkit-text-stroke:0.2px;transform:scaleX(1.1496);transform-origin:100% 50%;">286722</span>
<svg style="left:1744.2px;top:340.40000000000003px" width="20" height="20" viewBox="0 0 20 20"><rect x="0.85" y="0.85" width="18" height="18" fill="#fff" stroke="#333" stroke-width="1.6"/></svg>
<svg style="left:1852.2px;top:340.40000000000003px" width="20" height="20" viewBox="0 0 20 20"><rect x="0.85" y="0.85" width="18" height="18" fill="#fff" stroke="#333" stroke-width="1.6"/><path d="M3.8 9.8L7.6 13.6L15.6 4.6" fill="none" stroke="#555" stroke-width="1.7"/></svg>
<svg style="left:1996px;top:340.40000000000003px" width="20" height="20" viewBox="0 0 20 20"><rect x="0.85" y="0.85" width="18" height="18" fill="#fff" stroke="#333" stroke-width="1.6"/></svg>
<div style="left:2062.5px;top:338.10px;width:71px;height:26px;overflow:hidden">
<span style="left:2.40px;top:-2.00px;font-weight:bold;font-size:16.5px;-webkit-text-stroke:0.2px;transform:scaleX(1.0596);transform-origin:0 50%;">ПДВ 20%</span>
</div>
<span style="left:704.11px;top:364.60px;font-weight:bold;font-size:16.5px;-webkit-text-stroke:0.2px;transform:scaleX(1.1495);transform-origin:100% 50%;">22370</span>
<span style="left:757.80px;top:364.60px;font-weight:bold;font-size:16.5px;-webkit-text-stroke:0.2px;transform:scaleX(1.0698);transform-origin:0 50%;">З/п Сенсодин 75мл компл.защита</span>
<span style="left:1277.40px;top:364.60px;font-weight:bold;font-size:16.5px;-webkit-text-stroke:0.2px;transform:scaleX(1.0384);transform-origin:0 50%;">GlaxoSmithKline</span>
<span style="left:1684.61px;top:364.60px;font-weight:bold;font-size:16.5px;-webkit-text-stroke:0.2px;transform:scaleX(1.1495);transform-origin:100% 50%;">66022</span>
<svg style="left:1744.2px;top:368.90000000000003px" width="20" height="20" viewBox="0 0 20 20"><rect x="0.85" y="0.85" width="18" height="18" fill="#fff" stroke="#333" stroke-width="1.6"/></svg>
<svg style="left:1852.2px;top:368.90000000000003px" width="20" height="20" viewBox="0 0 20 20"><rect x="0.85" y="0.85" width="18" height="18" fill="#fff" stroke="#333" stroke-width="1.6"/><path d="M3.8 9.8L7.6 13.6L15.6 4.6" fill="none" stroke="#555" stroke-width="1.7"/></svg>
<svg style="left:1996px;top:368.90000000000003px" width="20" height="20" viewBox="0 0 20 20"><rect x="0.85" y="0.85" width="18" height="18" fill="#fff" stroke="#333" stroke-width="1.6"/></svg>
<div style="left:2062.5px;top:366.60px;width:71px;height:26px;overflow:hidden">
<span style="left:2.40px;top:-2.00px;font-weight:bold;font-size:16.5px;-webkit-text-stroke:0.2px;transform:scaleX(1.0596);transform-origin:0 50%;">ПДВ 20%</span>
</div>
<span style="left:704.11px;top:393.10px;font-weight:bold;font-size:16.5px;-webkit-text-stroke:0.2px;color:#fff;transform:scaleX(1.1495);transform-origin:100% 50%;">40997</span>
<div style="left:757.5px;top:397.6px;width:260.4px;height:22.5px;background:#0078d7;"></div>
<div style="left:1017.9px;top:397.6px;width:1.5px;height:22.5px;background:#d98b3a;"></div>
<span style="left:757.80px;top:393.10px;font-weight:bold;font-size:16.5px;-webkit-text-stroke:0.2px;color:#fff;transform:scaleX(1.0932);transform-origin:0 50%;">З/п Сенсодин 50мл тотал кеа</span>
<span style="left:1277.40px;top:393.10px;font-weight:bold;font-size:16.5px;-webkit-text-stroke:0.2px;color:#fff;transform:scaleX(1.0384);transform-origin:0 50%;">GlaxoSmithKline</span>
<span style="left:1684.61px;top:393.10px;font-weight:bold;font-size:16.5px;-webkit-text-stroke:0.2px;color:#fff;transform:scaleX(1.1495);transform-origin:100% 50%;">84095</span>
<svg style="left:1744.2px;top:397.40000000000003px" width="20" height="20" viewBox="0 0 20 20"><rect x="0.85" y="0.85" width="18" height="18" fill="#fff" stroke="#333" stroke-width="1.6"/></svg>
<svg style="left:1852.2px;top:397.40000000000003px" width="20" height="20" viewBox="0 0 20 20"><rect x="0.85" y="0.85" width="18" height="18" fill="#fff" stroke="#333" stroke-width="1.6"/><path d="M3.8 9.8L7.6 13.6L15.6 4.6" fill="none" stroke="#555" stroke-width="1.7"/></svg>
<svg style="left:1996px;top:397.40000000000003px" width="20" height="20" viewBox="0 0 20 20"><rect x="0.85" y="0.85" width="18" height="18" fill="#fff" stroke="#333" stroke-width="1.6"/></svg>
<div style="left:2062.5px;top:395.10px;width:71px;height:26px;overflow:hidden">
<span style="left:2.40px;top:-2.00px;font-weight:bold;font-size:16.5px;-webkit-text-stroke:0.2px;color:#fff;transform:scaleX(1.0596);transform-origin:0 50%;">ПДВ 20%</span>
</div>
<span style="left:704.11px;top:421.60px;font-weight:bold;font-size:16.5px;-webkit-text-stroke:0.2px;transform:scaleX(1.1495);transform-origin:100% 50%;">22374</span>
<span style="left:757.80px;top:421.60px;font-weight:bold;font-size:16.5px;-webkit-text-stroke:0.2px;transform:scaleX(1.0738);transform-origin:0 50%;">З/п Сенсодин 75мл отбеливающая</span>
<span style="left:1277.40px;top:421.60px;font-weight:bold;font-size:16.5px;-webkit-text-stroke:0.2px;transform:scaleX(1.0384);transform-origin:0 50%;">GlaxoSmithKline</span>
<span style="left:1675.44px;top:421.60px;font-weight:bold;font-size:16.5px;-webkit-text-stroke:0.2px;transform:scaleX(1.1496);transform-origin:100% 50%;">532507</span>
<svg style="left:1744.2px;top:425.90000000000003px" width="20" height="20" viewBox="0 0 20 20"><rect x="0.85" y="0.85" width="18" height="18" fill="#fff" stroke="#333" stroke-width="1.6"/></svg>
<svg style="left:1852.2px;top:425.90000000000003px" width="20" height="20" viewBox="0 0 20 20"><rect x="0.85" y="0.85" width="18" height="18" fill="#fff" stroke="#333" stroke-width="1.6"/><path d="M3.8 9.8L7.6 13.6L15.6 4.6" fill="none" stroke="#555" stroke-width="1.7"/></svg>
<svg style="left:1996px;top:425.90000000000003px" width="20" height="20" viewBox="0 0 20 20"><rect x="0.85" y="0.85" width="18" height="18" fill="#fff" stroke="#333" stroke-width="1.6"/></svg>
<div style="left:2062.5px;top:423.60px;width:71px;height:26px;overflow:hidden">
<span style="left:2.40px;top:-2.00px;font-weight:bold;font-size:16.5px;-webkit-text-stroke:0.2px;transform:scaleX(1.0596);transform-origin:0 50%;">ПДВ 20%</span>
</div>
<span style="left:695.84px;top:450.10px;font-weight:bold;font-size:16.5px;-webkit-text-stroke:0.2px;transform:scaleX(1.1688);transform-origin:100% 50%;">116376</span>
<span style="left:757.80px;top:450.10px;font-weight:bold;font-size:16.5px;-webkit-text-stroke:0.2px;transform:scaleX(1.0938);transform-origin:0 50%;">З/п Сенсодин экстра свежесть 100 мл</span>
<span style="left:1277.40px;top:450.10px;font-weight:bold;font-size:16.5px;-webkit-text-stroke:0.2px;transform:scaleX(1.0384);transform-origin:0 50%;">GlaxoSmithKline</span>
<span style="left:1675.44px;top:450.10px;font-weight:bold;font-size:16.5px;-webkit-text-stroke:0.2px;transform:scaleX(1.1496);transform-origin:100% 50%;">404833</span>
<svg style="left:1744.2px;top:454.40000000000003px" width="20" height="20" viewBox="0 0 20 20"><rect x="0.85" y="0.85" width="18" height="18" fill="#fff" stroke="#333" stroke-width="1.6"/></svg>
<svg style="left:1852.2px;top:454.40000000000003px" width="20" height="20" viewBox="0 0 20 20"><rect x="0.85" y="0.85" width="18" height="18" fill="#fff" stroke="#333" stroke-width="1.6"/><path d="M3.8 9.8L7.6 13.6L15.6 4.6" fill="none" stroke="#555" stroke-width="1.7"/></svg>
<svg style="left:1996px;top:454.40000000000003px" width="20" height="20" viewBox="0 0 20 20"><rect x="0.85" y="0.85" width="18" height="18" fill="#fff" stroke="#333" stroke-width="1.6"/></svg>
<div style="left:2062.5px;top:452.10px;width:71px;height:26px;overflow:hidden">
<span style="left:2.40px;top:-2.00px;font-weight:bold;font-size:16.5px;-webkit-text-stroke:0.2px;transform:scaleX(1.0596);transform-origin:0 50%;">ПДВ 20%</span>
</div>
<span style="left:704.11px;top:478.60px;font-weight:bold;font-size:16.5px;-webkit-text-stroke:0.2px;transform:scaleX(1.1495);transform-origin:100% 50%;">59998</span>
<span style="left:757.80px;top:478.60px;font-weight:bold;font-size:16.5px;-webkit-text-stroke:0.2px;transform:scaleX(1.0919);transform-origin:0 50%;">БЛЕНД-А-МЕД з/п кора дуба 100мл</span>
<span style="left:1277.40px;top:478.60px;font-weight:bold;font-size:16.5px;-webkit-text-stroke:0.2px;transform:scaleX(1.0675);transform-origin:0 50%;">Procter &amp; Gamble</span>
<span style="left:1684.61px;top:478.60px;font-weight:bold;font-size:16.5px;-webkit-text-stroke:0.2px;transform:scaleX(1.1495);transform-origin:100% 50%;">95973</span>
<svg style="left:1744.2px;top:482.90000000000003px" width="20" height="20" viewBox="0 0 20 20"><rect x="0.85" y="0.85" width="18" height="18" fill="#fff" stroke="#333" stroke-width="1.6"/></svg>
<svg style="left:1852.2px;top:482.90000000000003px" width="20" height="20" viewBox="0 0 20 20"><rect x="0.85" y="0.85" width="18" height="18" fill="#fff" stroke="#333" stroke-width="1.6"/><path d="M3.8 9.8L7.6 13.6L15.6 4.6" fill="none" stroke="#555" stroke-width="1.7"/></svg>
<svg style="left:1996px;top:482.90000000000003px" width="20" height="20" viewBox="0 0 20 20"><rect x="0.85" y="0.85" width="18" height="18" fill="#fff" stroke="#333" stroke-width="1.6"/></svg>
<div style="left:2062.5px;top:480.60px;width:71px;height:26px;overflow:hidden">
<span style="left:2.40px;top:-2.00px;font-weight:bold;font-size:16.5px;-webkit-text-stroke:0.2px;transform:scaleX(1.0596);transform-origin:0 50%;">ПДВ 20%</span>
</div>
<span style="left:695.84px;top:507.10px;font-weight:bold;font-size:16.5px;-webkit-text-stroke:0.2px;transform:scaleX(1.1688);transform-origin:100% 50%;">112958</span>
<span style="left:757.80px;top:507.10px;font-weight:bold;font-size:16.5px;-webkit-text-stroke:0.2px;transform:scaleX(1.0811);transform-origin:0 50%;">З/п Dentissimo Junior Яблоко ( от 6 лет)  50 мл</span>
<span style="left:1277.40px;top:507.10px;font-weight:bold;font-size:16.5px;-webkit-text-stroke:0.2px;transform:scaleX(1.0976);transform-origin:0 50%;">Betafarma</span>
<span style="left:1675.44px;top:507.10px;font-weight:bold;font-size:16.5px;-webkit-text-stroke:0.2px;transform:scaleX(1.1496);transform-origin:100% 50%;">445229</span>
<svg style="left:1744.2px;top:511.40000000000003px" width="20" height="20" viewBox="0 0 20 20"><rect x="0.85" y="0.85" width="18" height="18" fill="#fff" stroke="#333" stroke-width="1.6"/></svg>
<svg style="left:1852.2px;top:511.40000000000003px" width="20" height="20" viewBox="0 0 20 20"><rect x="0.85" y="0.85" width="18" height="18" fill="#fff" stroke="#333" stroke-width="1.6"/><path d="M3.8 9.8L7.6 13.6L15.6 4.6" fill="none" stroke="#555" stroke-width="1.7"/></svg>
<svg style="left:1996px;top:511.40000000000003px" width="20" height="20" viewBox="0 0 20 20"><rect x="0.85" y="0.85" width="18" height="18" fill="#fff" stroke="#333" stroke-width="1.6"/></svg>
<div style="left:2062.5px;top:509.10px;width:71px;height:26px;overflow:hidden">
<span style="left:2.40px;top:-2.00px;font-weight:bold;font-size:16.5px;-webkit-text-stroke:0.2px;transform:scaleX(1.0596);transform-origin:0 50%;">ПДВ 20%</span>
</div>
<span style="left:704.11px;top:535.60px;font-weight:bold;font-size:16.5px;-webkit-text-stroke:0.2px;transform:scaleX(1.1495);transform-origin:100% 50%;">51691</span>
<span style="left:757.80px;top:535.60px;font-weight:bold;font-size:16.5px;-webkit-text-stroke:0.2px;transform:scaleX(1.1158);transform-origin:0 50%;">Президент з/п кидз кола от 3-6лет 50мл</span>
<span style="left:1277.40px;top:535.60px;font-weight:bold;font-size:16.5px;-webkit-text-stroke:0.2px;transform:scaleX(1.0976);transform-origin:0 50%;">Betafarma</span>
<span style="left:1675.44px;top:535.60px;font-weight:bold;font-size:16.5px;-webkit-text-stroke:0.2px;transform:scaleX(1.1496);transform-origin:100% 50%;">136426</span>
<svg style="left:1744.2px;top:539.9px" width="20" height="20" viewBox="0 0 20 20"><rect x="0.85" y="0.85" width="18" height="18" fill="#fff" stroke="#333" stroke-width="1.6"/></svg>
<svg style="left:1852.2px;top:539.9px" width="20" height="20" viewBox="0 0 20 20"><rect x="0.85" y="0.85" width="18" height="18" fill="#fff" stroke="#333" stroke-width="1.6"/><path d="M3.8 9.8L7.6 13.6L15.6 4.6" fill="none" stroke="#555" stroke-width="1.7"/></svg>
<svg style="left:1996px;top:539.9px" width="20" height="20" viewBox="0 0 20 20"><rect x="0.85" y="0.85" width="18" height="18" fill="#fff" stroke="#333" stroke-width="1.6"/></svg>
<div style="left:2062.5px;top:537.60px;width:71px;height:26px;overflow:hidden">
<span style="left:2.40px;top:-2.00px;font-weight:bold;font-size:16.5px;-webkit-text-stroke:0.2px;transform:scaleX(1.0596);transform-origin:0 50%;">ПДВ 20%</span>
</div>
<span style="left:696.75px;top:564.10px;font-weight:bold;font-size:16.5px;-webkit-text-stroke:0.2px;transform:scaleX(1.1887);transform-origin:100% 50%;">116611</span>
<span style="left:757.80px;top:564.10px;font-weight:bold;font-size:16.5px;-webkit-text-stroke:0.2px;transform:scaleX(1.0639);transform-origin:0 50%;">З/п Dentissimo Extra Whitening Black  75 мл</span>
<span style="left:1277.40px;top:564.10px;font-weight:bold;font-size:16.5px;-webkit-text-stroke:0.2px;transform:scaleX(1.0976);transform-origin:0 50%;">Betafarma</span>
<span style="left:1675.44px;top:564.10px;font-weight:bold;font-size:16.5px;-webkit-text-stroke:0.2px;transform:scaleX(1.1496);transform-origin:100% 50%;">512399</span>
<svg style="left:1744.2px;top:568.4px" width="20" height="20" viewBox="0 0 20 20"><rect x="0.85" y="0.85" width="18" height="18" fill="#fff" stroke="#333" stroke-width="1.6"/></svg>
<svg style="left:1852.2px;top:568.4px" width="20" height="20" viewBox="0 0 20 20"><rect x="0.85" y="0.85" width="18" height="18" fill="#fff" stroke="#333" stroke-width="1.6"/><path d="M3.8 9.8L7.6 13.6L15.6 4.6" fill="none" stroke="#555" stroke-width="1.7"/></svg>
<svg style="left:1996px;top:568.4px" width="20" height="20" viewBox="0 0 20 20"><rect x="0.85" y="0.85" width="18" height="18" fill="#fff" stroke="#333" stroke-width="1.6"/></svg>
<div style="left:2062.5px;top:566.10px;width:71px;height:26px;overflow:hidden">
<span style="left:2.40px;top:-2.00px;font-weight:bold;font-size:16.5px;-webkit-text-stroke:0.2px;transform:scaleX(1.0596);transform-origin:0 50%;">ПДВ 20%</span>
</div>
<span style="left:704.11px;top:592.60px;font-weight:bold;font-size:16.5px;-webkit-text-stroke:0.2px;transform:scaleX(1.1495);transform-origin:100% 50%;">85716</span>
<span style="left:757.80px;top:592.60px;font-weight:bold;font-size:16.5px;-webkit-text-stroke:0.2px;transform:scaleX(1.0803);transform-origin:0 50%;">Президент Клиникал з/п актив 75мл</span>
<span style="left:1277.40px;top:592.60px;font-weight:bold;font-size:16.5px;-webkit-text-stroke:0.2px;transform:scaleX(1.0976);transform-origin:0 50%;">Betafarma</span>
<span style="left:1675.44px;top:592.60px;font-weight:bold;font-size:16.5px;-webkit-text-stroke:0.2px;transform:scaleX(1.1496);transform-origin:100% 50%;">136648</span>
<svg style="left:1744.2px;top:596.9px" width="20" height="20" viewBox="0 0 20 20"><rect x="0.85" y="0.85" width="18" height="18" fill="#fff" stroke="#333" stroke-width="1.6"/></svg>
<svg style="left:1852.2px;top:596.9px" width="20" height="20" viewBox="0 0 20 20"><rect x="0.85" y="0.85" width="18" height="18" fill="#fff" stroke="#333" stroke-width="1.6"/><path d="M3.8 9.8L7.6 13.6L15.6 4.6" fill="none" stroke="#555" stroke-width="1.7"/></svg>
<svg style="left:1996px;top:596.9px" width="20" height="20" viewBox="0 0 20 20"><rect x="0.85" y="0.85" width="18" height="18" fill="#fff" stroke="#333" stroke-width="1.6"/></svg>
<div style="left:2062.5px;top:594.60px;width:71px;height:26px;overflow:hidden">
<span style="left:2.40px;top:-2.00px;font-weight:bold;font-size:16.5px;-webkit-text-stroke:0.2px;transform:scaleX(1.0596);transform-origin:0 50%;">ПДВ 20%</span>
</div>
<span style="left:704.11px;top:621.10px;font-weight:bold;font-size:16.5px;-webkit-text-stroke:0.2px;transform:scaleX(1.1495);transform-origin:100% 50%;">56945</span>
<span style="left:757.80px;top:621.10px;font-weight:bold;font-size:16.5px;-webkit-text-stroke:0.2px;transform:scaleX(1.1016);transform-origin:0 50%;">Президент з/п актив 75мл</span>
<span style="left:1277.40px;top:621.10px;font-weight:bold;font-size:16.5px;-webkit-text-stroke:0.2px;transform:scaleX(1.0976);transform-origin:0 50%;">Betafarma</span>
<span style="left:1684.61px;top:621.10px;font-weight:bold;font-size:16.5px;-webkit-text-stroke:0.2px;transform:scaleX(1.1495);transform-origin:100% 50%;">71558</span>
<svg style="left:1744.2px;top:625.4px" width="20" height="20" viewBox="0 0 20 20"><rect x="0.85" y="0.85" width="18" height="18" fill="#fff" stroke="#333" stroke-width="1.6"/></svg>
<svg style="left:1852.2px;top:625.4px" width="20" height="20" viewBox="0 0 20 20"><rect x="0.85" y="0.85" width="18" height="18" fill="#fff" stroke="#333" stroke-width="1.6"/><path d="M3.8 9.8L7.6 13.6L15.6 4.6" fill="none" stroke="#555" stroke-width="1.7"/></svg>
<svg style="left:1996px;top:625.4px" width="20" height="20" viewBox="0 0 20 20"><rect x="0.85" y="0.85" width="18" height="18" fill="#fff" stroke="#333" stroke-width="1.6"/></svg>
<div style="left:2062.5px;top:623.10px;width:71px;height:26px;overflow:hidden">
<span style="left:2.40px;top:-2.00px;font-weight:bold;font-size:16.5px;-webkit-text-stroke:0.2px;transform:scaleX(1.0596);transform-origin:0 50%;">ПДВ 20%</span>
</div>
<span style="left:704.11px;top:649.60px;font-weight:bold;font-size:16.5px;-webkit-text-stroke:0.2px;transform:scaleX(1.1495);transform-origin:100% 50%;">51594</span>
<span style="left:757.80px;top:649.60px;font-weight:bold;font-size:16.5px;-webkit-text-stroke:0.2px;transform:scaleX(1.0896);transform-origin:0 50%;">Президент з/п сенсетив75мл</span>
<span style="left:1277.40px;top:649.60px;font-weight:bold;font-size:16.5px;-webkit-text-stroke:0.2px;transform:scaleX(1.0976);transform-origin:0 50%;">Betafarma</span>
<span style="left:1684.61px;top:649.60px;font-weight:bold;font-size:16.5px;-webkit-text-stroke:0.2px;transform:scaleX(1.1495);transform-origin:100% 50%;">71560</span>
<svg style="left:1744.2px;top:653.9px" width="20" height="20" viewBox="0 0 20 20"><rect x="0.85" y="0.85" width="18" height="18" fill="#fff" stroke="#333" stroke-width="1.6"/></svg>
<svg style="left:1852.2px;top:653.9px" width="20" height="20" viewBox="0 0 20 20"><rect x="0.85" y="0.85" width="18" height="18" fill="#fff" stroke="#333" stroke-width="1.6"/><path d="M3.8 9.8L7.6 13.6L15.6 4.6" fill="none" stroke="#555" stroke-width="1.7"/></svg>
<svg style="left:1996px;top:653.9px" width="20" height="20" viewBox="0 0 20 20"><rect x="0.85" y="0.85" width="18" height="18" fill="#fff" stroke="#333" stroke-width="1.6"/></svg>
<div style="left:2062.5px;top:651.60px;width:71px;height:26px;overflow:hidden">
<span style="left:2.40px;top:-2.00px;font-weight:bold;font-size:16.5px;-webkit-text-stroke:0.2px;transform:scaleX(1.0596);transform-origin:0 50%;">ПДВ 20%</span>
</div>
<span style="left:704.11px;top:678.10px;font-weight:bold;font-size:16.5px;-webkit-text-stroke:0.2px;transform:scaleX(1.1495);transform-origin:100% 50%;">55454</span>
<span style="left:757.80px;top:678.10px;font-weight:bold;font-size:16.5px;-webkit-text-stroke:0.2px;transform:scaleX(1.0746);transform-origin:0 50%;">Колгейт з/п Тройное Действие 50мл</span>
<span style="left:1277.40px;top:678.10px;font-weight:bold;font-size:16.5px;-webkit-text-stroke:0.2px;transform:scaleX(1.0621);transform-origin:0 50%;">Colgate-Palmolive Polan</span>
<span style="left:1684.61px;top:678.10px;font-weight:bold;font-size:16.5px;-webkit-text-stroke:0.2px;transform:scaleX(1.1495);transform-origin:100% 50%;">37880</span>
<svg style="left:1744.2px;top:682.4px" width="20" height="20" viewBox="0 0 20 20"><rect x="0.85" y="0.85" width="18" height="18" fill="#fff" stroke="#333" stroke-width="1.6"/></svg>
<svg style="left:1852.2px;top:682.4px" width="20" height="20" viewBox="0 0 20 20"><rect x="0.85" y="0.85" width="18" height="18" fill="#fff" stroke="#333" stroke-width="1.6"/><path d="M3.8 9.8L7.6 13.6L15.6 4.6" fill="none" stroke="#555" stroke-width="1.7"/></svg>
<svg style="left:1996px;top:682.4px" width="20" height="20" viewBox="0 0 20 20"><rect x="0.85" y="0.85" width="18" height="18" fill="#fff" stroke="#333" stroke-width="1.6"/></svg>
<div style="left:2062.5px;top:680.10px;width:71px;height:26px;overflow:hidden">
<span style="left:2.40px;top:-2.00px;font-weight:bold;font-size:16.5px;-webkit-text-stroke:0.2px;transform:scaleX(1.0596);transform-origin:0 50%;">ПДВ 20%</span>
</div>
<span style="left:694.94px;top:706.60px;font-weight:bold;font-size:16.5px;-webkit-text-stroke:0.2px;transform:scaleX(1.1496);transform-origin:100% 50%;">107723</span>
<span style="left:757.80px;top:706.60px;font-weight:bold;font-size:16.5px;-webkit-text-stroke:0.2px;transform:scaleX(1.0958);transform-origin:0 50%;">Промис - з/паста отбеливающая 100г</span>
<span style="left:1277.40px;top:706.60px;font-weight:bold;font-size:16.5px;-webkit-text-stroke:0.2px;transform:scaleX(1.0753);transform-origin:0 50%;">Индия</span>
<span style="left:1684.61px;top:706.60px;font-weight:bold;font-size:16.5px;-webkit-text-stroke:0.2px;transform:scaleX(1.1495);transform-origin:100% 50%;">81200</span>
<svg style="left:1744.2px;top:710.9px" width="20" height="20" viewBox="0 0 20 20"><rect x="0.85" y="0.85" width="18" height="18" fill="#fff" stroke="#333" stroke-width="1.6"/></svg>
<svg style="left:1852.2px;top:710.9px" width="20" height="20" viewBox="0 0 20 20"><rect x="0.85" y="0.85" width="18" height="18" fill="#fff" stroke="#333" stroke-width="1.6"/><path d="M3.8 9.8L7.6 13.6L15.6 4.6" fill="none" stroke="#555" stroke-width="1.7"/></svg>
<svg style="left:1996px;top:710.9px" width="20" height="20" viewBox="0 0 20 20"><rect x="0.85" y="0.85" width="18" height="18" fill="#fff" stroke="#333" stroke-width="1.6"/></svg>
<div style="left:2062.5px;top:708.60px;width:71px;height:26px;overflow:hidden">
<span style="left:2.40px;top:-2.00px;font-weight:bold;font-size:16.5px;-webkit-text-stroke:0.2px;transform:scaleX(1.0596);transform-origin:0 50%;">ПДВ 20%</span>
</div>
<span style="left:694.94px;top:735.10px;font-weight:bold;font-size:16.5px;-webkit-text-stroke:0.2px;transform:scaleX(1.1496);transform-origin:100% 50%;">107722</span>
<span style="left:757.80px;top:735.10px;font-weight:bold;font-size:16.5px;-webkit-text-stroke:0.2px;transform:scaleX(1.1061);transform-origin:0 50%;">Промис - з/паста пр/зубного камня 100г</span>
<span style="left:1277.40px;top:735.10px;font-weight:bold;font-size:16.5px;-webkit-text-stroke:0.2px;transform:scaleX(1.0753);transform-origin:0 50%;">Индия</span>
<span style="left:1685.52px;top:735.10px;font-weight:bold;font-size:16.5px;-webkit-text-stroke:0.2px;transform:scaleX(1.1726);transform-origin:100% 50%;">81198</span>
<svg style="left:1744.2px;top:739.4px" width="20" height="20" viewBox="0 0 20 20"><rect x="0.85" y="0.85" width="18" height="18" fill="#fff" stroke="#333" stroke-width="1.6"/></svg>
<svg style="left:1852.2px;top:739.4px" width="20" height="20" viewBox="0 0 20 20"><rect x="0.85" y="0.85" width="18" height="18" fill="#fff" stroke="#333" stroke-width="1.6"/><path d="M3.8 9.8L7.6 13.6L15.6 4.6" fill="none" stroke="#555" stroke-width="1.7"/></svg>
<svg style="left:1996px;top:739.4px" width="20" height="20" viewBox="0 0 20 20"><rect x="0.85" y="0.85" width="18" height="18" fill="#fff" stroke="#333" stroke-width="1.6"/></svg>
<div style="left:2062.5px;top:737.10px;width:71px;height:26px;overflow:hidden">
<span style="left:2.40px;top:-2.00px;font-weight:bold;font-size:16.5px;-webkit-text-stroke:0.2px;transform:scaleX(1.0596);transform-origin:0 50%;">ПДВ 20%</span>
</div>
<span style="left:704.11px;top:763.60px;font-weight:bold;font-size:16.5px;-webkit-text-stroke:0.2px;transform:scaleX(1.1495);transform-origin:100% 50%;">52664</span>
<span style="left:757.80px;top:763.60px;font-weight:bold;font-size:16.5px;-webkit-text-stroke:0.2px;transform:scaleX(1.0856);transform-origin:0 50%;">З/п Новый жемчуг фтор 50мл</span>
<span style="left:1277.40px;top:763.60px;font-weight:bold;font-size:16.5px;-webkit-text-stroke:0.2px;transform:scaleX(0.9742);transform-origin:0 50%;">НЕВСКАЯ КОСМЕТИКА</span>
<span style="left:1684.61px;top:763.60px;font-weight:bold;font-size:16.5px;-webkit-text-stroke:0.2px;transform:scaleX(1.1495);transform-origin:100% 50%;">89281</span>
<svg style="left:1744.2px;top:767.9px" width="20" height="20" viewBox="0 0 20 20"><rect x="0.85" y="0.85" width="18" height="18" fill="#fff" stroke="#333" stroke-width="1.6"/></svg>
<svg style="left:1852.2px;top:767.9px" width="20" height="20" viewBox="0 0 20 20"><rect x="0.85" y="0.85" width="18" height="18" fill="#fff" stroke="#333" stroke-width="1.6"/><path d="M3.8 9.8L7.6 13.6L15.6 4.6" fill="none" stroke="#555" stroke-width="1.7"/></svg>
<svg style="left:1996px;top:767.9px" width="20" height="20" viewBox="0 0 20 20"><rect x="0.85" y="0.85" width="18" height="18" fill="#fff" stroke="#333" stroke-width="1.6"/></svg>
<div style="left:2062.5px;top:765.60px;width:71px;height:26px;overflow:hidden">
<span style="left:2.40px;top:-2.00px;font-weight:bold;font-size:16.5px;-webkit-text-stroke:0.2px;transform:scaleX(1.0596);transform-origin:0 50%;">ПДВ 20%</span>
</div>
<span style="left:704.11px;top:792.10px;font-weight:bold;font-size:16.5px;-webkit-text-stroke:0.2px;transform:scaleX(1.1495);transform-origin:100% 50%;">51770</span>
<span style="left:757.80px;top:792.10px;font-weight:bold;font-size:16.5px;-webkit-text-stroke:0.2px;transform:scaleX(1.0843);transform-origin:0 50%;">З/п Новый жемчуг эвкалипт 50мл</span>
<span style="left:1277.40px;top:792.10px;font-weight:bold;font-size:16.5px;-webkit-text-stroke:0.2px;transform:scaleX(0.9742);transform-origin:0 50%;">НЕВСКАЯ КОСМЕТИКА</span>
<span style="left:1684.61px;top:792.10px;font-weight:bold;font-size:16.5px;-webkit-text-stroke:0.2px;transform:scaleX(1.1495);transform-origin:100% 50%;">66893</span>
<svg style="left:1744.2px;top:796.4px" width="20" height="20" viewBox="0 0 20 20"><rect x="0.85" y="0.85" width="18" height="18" fill="#fff" stroke="#333" stroke-width="1.6"/></svg>
<svg style="left:1852.2px;top:796.4px" width="20" height="20" viewBox="0 0 20 20"><rect x="0.85" y="0.85" width="18" height="18" fill="#fff" stroke="#333" stroke-width="1.6"/><path d="M3.8 9.8L7.6 13.6L15.6 4.6" fill="none" stroke="#555" stroke-width="1.7"/></svg>
<svg style="left:1996px;top:796.4px" width="20" height="20" viewBox="0 0 20 20"><rect x="0.85" y="0.85" width="18" height="18" fill="#fff" stroke="#333" stroke-width="1.6"/></svg>
<div style="left:2062.5px;top:794.10px;width:71px;height:26px;overflow:hidden">
<span style="left:2.40px;top:-2.00px;font-weight:bold;font-size:16.5px;-webkit-text-stroke:0.2px;transform:scaleX(1.0596);transform-origin:0 50%;">ПДВ 20%</span>
</div>
<span style="left:704.11px;top:820.60px;font-weight:bold;font-size:16.5px;-webkit-text-stroke:0.2px;transform:scaleX(1.1495);transform-origin:100% 50%;">79782</span>
<span style="left:757.80px;top:820.60px;font-weight:bold;font-size:16.5px;-webkit-text-stroke:0.2px;transform:scaleX(1.0920);transform-origin:0 50%;">З/п Новый жемчуг отбеливающая 100мл</span>
<span style="left:1277.40px;top:820.60px;font-weight:bold;font-size:16.5px;-webkit-text-stroke:0.2px;transform:scaleX(0.9742);transform-origin:0 50%;">НЕВСКАЯ КОСМЕТИКА</span>
<span style="left:1684.61px;top:820.60px;font-weight:bold;font-size:16.5px;-webkit-text-stroke:0.2px;transform:scaleX(1.1495);transform-origin:100% 50%;">89293</span>
<svg style="left:1744.2px;top:824.9px" width="20" height="20" viewBox="0 0 20 20"><rect x="0.85" y="0.85" width="18" height="18" fill="#fff" stroke="#333" stroke-width="1.6"/></svg>
<svg style="left:1852.2px;top:824.9px" width="20" height="20" viewBox="0 0 20 20"><rect x="0.85" y="0.85" width="18" height="18" fill="#fff" stroke="#333" stroke-width="1.6"/><path d="M3.8 9.8L7.6 13.6L15.6 4.6" fill="none" stroke="#555" stroke-width="1.7"/></svg>
<svg style="left:1996px;top:824.9px" width="20" height="20" viewBox="0 0 20 20"><rect x="0.85" y="0.85" width="18" height="18" fill="#fff" stroke="#333" stroke-width="1.6"/></svg>
<div style="left:2062.5px;top:822.60px;width:71px;height:26px;overflow:hidden">
<span style="left:2.40px;top:-2.00px;font-weight:bold;font-size:16.5px;-webkit-text-stroke:0.2px;transform:scaleX(1.0596);transform-origin:0 50%;">ПДВ 20%</span>
</div>
<span style="left:704.11px;top:849.10px;font-weight:bold;font-size:16.5px;-webkit-text-stroke:0.2px;transform:scaleX(1.1495);transform-origin:100% 50%;">72230</span>
<span style="left:757.80px;top:849.10px;font-weight:bold;font-size:16.5px;-webkit-text-stroke:0.2px;transform:scaleX(1.0875);transform-origin:0 50%;">З/п Новый жемчуг ледяная мята отбеливание 100мл</span>
<span style="left:1277.40px;top:849.10px;font-weight:bold;font-size:16.5px;-webkit-text-stroke:0.2px;transform:scaleX(0.9742);transform-origin:0 50%;">НЕВСКАЯ КОСМЕТИКА</span>
<span style="left:1675.44px;top:849.10px;font-weight:bold;font-size:16.5px;-webkit-text-stroke:0.2px;transform:scaleX(1.1496);transform-origin:100% 50%;">178312</span>
<svg style="left:1744.2px;top:853.4px" width="20" height="20" viewBox="0 0 20 20"><rect x="0.85" y="0.85" width="18" height="18" fill="#fff" stroke="#333" stroke-width="1.6"/></svg>
<svg style="left:1852.2px;top:853.4px" width="20" height="20" viewBox="0 0 20 20"><rect x="0.85" y="0.85" width="18" height="18" fill="#fff" stroke="#333" stroke-width="1.6"/><path d="M3.8 9.8L7.6 13.6L15.6 4.6" fill="none" stroke="#555" stroke-width="1.7"/></svg>
<svg style="left:1996px;top:853.4px" width="20" height="20" viewBox="0 0 20 20"><rect x="0.85" y="0.85" width="18" height="18" fill="#fff" stroke="#333" stroke-width="1.6"/></svg>
<div style="left:2062.5px;top:851.10px;width:71px;height:26px;overflow:hidden">
<span style="left:2.40px;top:-2.00px;font-weight:bold;font-size:16.5px;-webkit-text-stroke:0.2px;transform:scaleX(1.0596);transform-origin:0 50%;">ПДВ 20%</span>
</div>
<span style="left:704.11px;top:877.60px;font-weight:bold;font-size:16.5px;-webkit-text-stroke:0.2px;transform:scaleX(1.1495);transform-origin:100% 50%;">47813</span>
<span style="left:757.80px;top:877.60px;font-weight:bold;font-size:16.5px;-webkit-text-stroke:0.2px;transform:scaleX(1.0852);transform-origin:0 50%;">З/п Новый жемчуг семь трав 100мл</span>
<span style="left:1277.40px;top:877.60px;font-weight:bold;font-size:16.5px;-webkit-text-stroke:0.2px;transform:scaleX(0.9742);transform-origin:0 50%;">НЕВСКАЯ КОСМЕТИКА</span>
<span style="left:1684.61px;top:877.60px;font-weight:bold;font-size:16.5px;-webkit-text-stroke:0.2px;transform:scaleX(1.1495);transform-origin:100% 50%;">89296</span>
<svg style="left:1744.2px;top:881.9px" width="20" height="20" viewBox="0 0 20 20"><rect x="0.85" y="0.85" width="18" height="18" fill="#fff" stroke="#333" stroke-width="1.6"/></svg>
<svg style="left:1852.2px;top:881.9px" width="20" height="20" viewBox="0 0 20 20"><rect x="0.85" y="0.85" width="18" height="18" fill="#fff" stroke="#333" stroke-width="1.6"/><path d="M3.8 9.8L7.6 13.6L15.6 4.6" fill="none" stroke="#555" stroke-width="1.7"/></svg>
<svg style="left:1996px;top:881.9px" width="20" height="20" viewBox="0 0 20 20"><rect x="0.85" y="0.85" width="18" height="18" fill="#fff" stroke="#333" stroke-width="1.6"/></svg>
<div style="left:2062.5px;top:879.60px;width:71px;height:26px;overflow:hidden">
<span style="left:2.40px;top:-2.00px;font-weight:bold;font-size:16.5px;-webkit-text-stroke:0.2px;transform:scaleX(1.0596);transform-origin:0 50%;">ПДВ 20%</span>
</div>
<span style="left:704.11px;top:906.10px;font-weight:bold;font-size:16.5px;-webkit-text-stroke:0.2px;transform:scaleX(1.1495);transform-origin:100% 50%;">58845</span>
<span style="left:757.80px;top:906.10px;font-weight:bold;font-size:16.5px;-webkit-text-stroke:0.2px;transform:scaleX(1.1042);transform-origin:0 50%;">З/п Лесная аптека 50мл</span>
<span style="left:1277.40px;top:906.10px;font-weight:bold;font-size:16.5px;-webkit-text-stroke:0.2px;transform:scaleX(0.9742);transform-origin:0 50%;">НЕВСКАЯ КОСМЕТИКА</span>
<svg style="left:1744.2px;top:910.4px" width="20" height="20" viewBox="0 0 20 20"><rect x="0.85" y="0.85" width="18" height="18" fill="#fff" stroke="#333" stroke-width="1.6"/></svg>
<svg style="left:1852.2px;top:910.4px" width="20" height="20" viewBox="0 0 20 20"><rect x="0.85" y="0.85" width="18" height="18" fill="#fff" stroke="#333" stroke-width="1.6"/><path d="M3.8 9.8L7.6 13.6L15.6 4.6" fill="none" stroke="#555" stroke-width="1.7"/></svg>
<svg style="left:1996px;top:910.4px" width="20" height="20" viewBox="0 0 20 20"><rect x="0.85" y="0.85" width="18" height="18" fill="#fff" stroke="#333" stroke-width="1.6"/></svg>
<div style="left:2062.5px;top:908.10px;width:71px;height:26px;overflow:hidden">
<span style="left:2.40px;top:-2.00px;font-weight:bold;font-size:16.5px;-webkit-text-stroke:0.2px;transform:scaleX(1.0596);transform-origin:0 50%;">ПДВ 20%</span>
</div>
<span style="left:704.11px;top:934.60px;font-weight:bold;font-size:16.5px;-webkit-text-stroke:0.2px;transform:scaleX(1.1495);transform-origin:100% 50%;">52665</span>
<span style="left:757.80px;top:934.60px;font-weight:bold;font-size:16.5px;-webkit-text-stroke:0.2px;transform:scaleX(1.0844);transform-origin:0 50%;">З/п Новый жемчуг фтор 75мл</span>
<span style="left:1277.40px;top:934.60px;font-weight:bold;font-size:16.5px;-webkit-text-stroke:0.2px;transform:scaleX(0.9742);transform-origin:0 50%;">НЕВСКАЯ КОСМЕТИКА</span>
<span style="left:1684.61px;top:934.60px;font-weight:bold;font-size:16.5px;-webkit-text-stroke:0.2px;transform:scaleX(1.1495);transform-origin:100% 50%;">43930</span>
<svg style="left:1744.2px;top:938.9px" width="20" height="20" viewBox="0 0 20 20"><rect x="0.85" y="0.85" width="18" height="18" fill="#fff" stroke="#333" stroke-width="1.6"/></svg>
<svg style="left:1852.2px;top:938.9px" width="20" height="20" viewBox="0 0 20 20"><rect x="0.85" y="0.85" width="18" height="18" fill="#fff" stroke="#333" stroke-width="1.6"/><path d="M3.8 9.8L7.6 13.6L15.6 4.6" fill="none" stroke="#555" stroke-width="1.7"/></svg>
<svg style="left:1996px;top:938.9px" width="20" height="20" viewBox="0 0 20 20"><rect x="0.85" y="0.85" width="18" height="18" fill="#fff" stroke="#333" stroke-width="1.6"/></svg>
<div style="left:2062.5px;top:936.60px;width:71px;height:26px;overflow:hidden">
<span style="left:2.40px;top:-2.00px;font-weight:bold;font-size:16.5px;-webkit-text-stroke:0.2px;transform:scaleX(1.0596);transform-origin:0 50%;">ПДВ 20%</span>
</div>
<span style="left:694.94px;top:963.10px;font-weight:bold;font-size:16.5px;-webkit-text-stroke:0.2px;transform:scaleX(1.1496);transform-origin:100% 50%;">107684</span>
<span style="left:757.80px;top:963.10px;font-weight:bold;font-size:16.5px;-webkit-text-stroke:0.2px;transform:scaleX(1.0721);transform-origin:0 50%;">DABUR HERB'L - з/паста Отбеливающая 60 г + 20г</span>
<span style="left:1277.40px;top:963.10px;font-weight:bold;font-size:16.5px;-webkit-text-stroke:0.2px;transform:scaleX(0.9333);transform-origin:0 50%;">ОАЕ</span>
<svg style="left:1744.2px;top:967.4px" width="20" height="20" viewBox="0 0 20 20"><rect x="0.85" y="0.85" width="18" height="18" fill="#fff" stroke="#333" stroke-width="1.6"/></svg>
<svg style="left:1852.2px;top:967.4px" width="20" height="20" viewBox="0 0 20 20"><rect x="0.85" y="0.85" width="18" height="18" fill="#fff" stroke="#333" stroke-width="1.6"/><path d="M3.8 9.8L7.6 13.6L15.6 4.6" fill="none" stroke="#555" stroke-width="1.7"/></svg>
<svg style="left:1996px;top:967.4px" width="20" height="20" viewBox="0 0 20 20"><rect x="0.85" y="0.85" width="18" height="18" fill="#fff" stroke="#333" stroke-width="1.6"/></svg>
<div style="left:2062.5px;top:965.10px;width:71px;height:26px;overflow:hidden">
<span style="left:2.40px;top:-2.00px;font-weight:bold;font-size:16.5px;-webkit-text-stroke:0.2px;transform:scaleX(1.0596);transform-origin:0 50%;">ПДВ 20%</span>
</div>
<span style="left:694.94px;top:991.60px;font-weight:bold;font-size:16.5px;-webkit-text-stroke:0.2px;transform:scaleX(1.1496);transform-origin:100% 50%;">103132</span>
<span style="left:757.80px;top:991.60px;font-weight:bold;font-size:16.5px;-webkit-text-stroke:0.2px;transform:scaleX(1.0956);transform-origin:0 50%;">З/п Бланкс Мед Органик 75 г</span>
<span style="left:1277.40px;top:991.60px;font-weight:bold;font-size:16.5px;-webkit-text-stroke:0.2px;transform:scaleX(1.0115);transform-origin:0 50%;">Coswell S.p.A.</span>
<svg style="left:1744.2px;top:995.9px" width="20" height="20" viewBox="0 0 20 20"><rect x="0.85" y="0.85" width="18" height="18" fill="#fff" stroke="#333" stroke-width="1.6"/></svg>
<svg style="left:1852.2px;top:995.9px" width="20" height="20" viewBox="0 0 20 20"><rect x="0.85" y="0.85" width="18" height="18" fill="#fff" stroke="#333" stroke-width="1.6"/><path d="M3.8 9.8L7.6 13.6L15.6 4.6" fill="none" stroke="#555" stroke-width="1.7"/></svg>
<svg style="left:1996px;top:995.9px" width="20" height="20" viewBox="0 0 20 20"><rect x="0.85" y="0.85" width="18" height="18" fill="#fff" stroke="#333" stroke-width="1.6"/></svg>
<div style="left:2062.5px;top:993.60px;width:71px;height:26px;overflow:hidden">
<span style="left:2.40px;top:-2.00px;font-weight:bold;font-size:16.5px;-webkit-text-stroke:0.2px;transform:scaleX(1.0596);transform-origin:0 50%;">ПДВ 20%</span>
</div>
<span style="left:704.11px;top:1020.10px;font-weight:bold;font-size:16.5px;-webkit-text-stroke:0.2px;transform:scaleX(1.1495);transform-origin:100% 50%;">78421</span>
<span style="left:757.80px;top:1020.10px;font-weight:bold;font-size:16.5px;-webkit-text-stroke:0.2px;transform:scaleX(1.0781);transform-origin:0 50%;">Эдельвайт з/п EW-TW75 антиналет отбеливание 75мл</span>
<span style="left:1277.40px;top:1020.10px;font-weight:bold;font-size:16.5px;-webkit-text-stroke:0.2px;transform:scaleX(1.0673);transform-origin:0 50%;">Скандера Швейцария</span>
<span style="left:1675.44px;top:1020.10px;font-weight:bold;font-size:16.5px;-webkit-text-stroke:0.2px;transform:scaleX(1.1496);transform-origin:100% 50%;">175192</span>
<svg style="left:1744.2px;top:1024.3999999999999px" width="20" height="20" viewBox="0 0 20 20"><rect x="0.85" y="0.85" width="18" height="18" fill="#fff" stroke="#333" stroke-width="1.6"/></svg>
<svg style="left:1852.2px;top:1024.3999999999999px" width="20" height="20" viewBox="0 0 20 20"><rect x="0.85" y="0.85" width="18" height="18" fill="#fff" stroke="#333" stroke-width="1.6"/><path d="M3.8 9.8L7.6 13.6L15.6 4.6" fill="none" stroke="#555" stroke-width="1.7"/></svg>
<svg style="left:1996px;top:1024.3999999999999px" width="20" height="20" viewBox="0 0 20 20"><rect x="0.85" y="0.85" width="18" height="18" fill="#fff" stroke="#333" stroke-width="1.6"/></svg>
<div style="left:2062.5px;top:1022.10px;width:71px;height:26px;overflow:hidden">
<span style="left:2.40px;top:-2.00px;font-weight:bold;font-size:16.5px;-webkit-text-stroke:0.2px;transform:scaleX(1.0596);transform-origin:0 50%;">ПДВ 20%</span>
</div>
<span style="left:695.84px;top:1048.60px;font-weight:bold;font-size:16.5px;-webkit-text-stroke:0.2px;transform:scaleX(1.1688);transform-origin:100% 50%;">114588</span>
<span style="left:757.80px;top:1048.60px;font-weight:bold;font-size:16.5px;-webkit-text-stroke:0.2px;transform:scaleX(1.0702);transform-origin:0 50%;">Сплат з/п Kids 2-6 мол.шоколад 50мл</span>
<span style="left:1277.40px;top:1048.60px;font-weight:bold;font-size:16.5px;-webkit-text-stroke:0.2px;transform:scaleX(1.0200);transform-origin:0 50%;">Сплат косм. ООО</span>
<span style="left:1675.44px;top:1048.60px;font-weight:bold;font-size:16.5px;-webkit-text-stroke:0.2px;transform:scaleX(1.1496);transform-origin:100% 50%;">393205</span>
<svg style="left:1744.2px;top:1052.8999999999999px" width="20" height="20" viewBox="0 0 20 20"><rect x="0.85" y="0.85" width="18" height="18" fill="#fff" stroke="#333" stroke-width="1.6"/></svg>
<svg style="left:1852.2px;top:1052.8999999999999px" width="20" height="20" viewBox="0 0 20 20"><rect x="0.85" y="0.85" width="18" height="18" fill="#fff" stroke="#333" stroke-width="1.6"/><path d="M3.8 9.8L7.6 13.6L15.6 4.6" fill="none" stroke="#555" stroke-width="1.7"/></svg>
<svg style="left:1996px;top:1052.8999999999999px" width="20" height="20" viewBox="0 0 20 20"><rect x="0.85" y="0.85" width="18" height="18" fill="#fff" stroke="#333" stroke-width="1.6"/></svg>
<div style="left:2062.5px;top:1050.60px;width:71px;height:26px;overflow:hidden">
<span style="left:2.40px;top:-2.00px;font-weight:bold;font-size:16.5px;-webkit-text-stroke:0.2px;transform:scaleX(1.0596);transform-origin:0 50%;">ПДВ 20%</span>
</div>
<span style="left:713.28px;top:1077.10px;font-weight:bold;font-size:16.5px;-webkit-text-stroke:0.2px;transform:scaleX(1.1493);transform-origin:100% 50%;">8726</span>
<span style="left:757.80px;top:1077.10px;font-weight:bold;font-size:16.5px;-webkit-text-stroke:0.2px;transform:scaleX(1.0790);transform-origin:0 50%;">Сплат з/п Актив 100мл</span>
<span style="left:1277.40px;top:1077.10px;font-weight:bold;font-size:16.5px;-webkit-text-stroke:0.2px;transform:scaleX(1.0200);transform-origin:0 50%;">Сплат косм. ООО</span>
<span style="left:1675.44px;top:1077.10px;font-weight:bold;font-size:16.5px;-webkit-text-stroke:0.2px;transform:scaleX(1.1496);transform-origin:100% 50%;">102153</span>
<svg style="left:1744.2px;top:1081.3999999999999px" width="20" height="20" viewBox="0 0 20 20"><rect x="0.85" y="0.85" width="18" height="18" fill="#fff" stroke="#333" stroke-width="1.6"/></svg>
<svg style="left:1852.2px;top:1081.3999999999999px" width="20" height="20" viewBox="0 0 20 20"><rect x="0.85" y="0.85" width="18" height="18" fill="#fff" stroke="#333" stroke-width="1.6"/><path d="M3.8 9.8L7.6 13.6L15.6 4.6" fill="none" stroke="#555" stroke-width="1.7"/></svg>
<svg style="left:1996px;top:1081.3999999999999px" width="20" height="20" viewBox="0 0 20 20"><rect x="0.85" y="0.85" width="18" height="18" fill="#fff" stroke="#333" stroke-width="1.6"/></svg>
<div style="left:2062.5px;top:1079.10px;width:71px;height:26px;overflow:hidden">
<span style="left:2.40px;top:-2.00px;font-weight:bold;font-size:16.5px;-webkit-text-stroke:0.2px;transform:scaleX(1.0596);transform-origin:0 50%;">ПДВ 20%</span>
</div>
<span style="left:704.11px;top:1105.60px;font-weight:bold;font-size:16.5px;-webkit-text-stroke:0.2px;transform:scaleX(1.1495);transform-origin:100% 50%;">59390</span>
<span style="left:757.80px;top:1105.60px;font-weight:bold;font-size:16.5px;-webkit-text-stroke:0.2px;transform:scaleX(1.0597);transform-origin:0 50%;">Сплат з/п Морские минералы 75мл</span>
<span style="left:1277.40px;top:1105.60px;font-weight:bold;font-size:16.5px;-webkit-text-stroke:0.2px;transform:scaleX(1.0200);transform-origin:0 50%;">Сплат косм. ООО</span>
<span style="left:1684.61px;top:1105.60px;font-weight:bold;font-size:16.5px;-webkit-text-stroke:0.2px;transform:scaleX(1.1495);transform-origin:100% 50%;">95376</span>
<svg style="left:1744.2px;top:1109.8999999999999px" width="20" height="20" viewBox="0 0 20 20"><rect x="0.85" y="0.85" width="18" height="18" fill="#fff" stroke="#333" stroke-width="1.6"/></svg>
<svg style="left:1852.2px;top:1109.8999999999999px" width="20" height="20" viewBox="0 0 20 20"><rect x="0.85" y="0.85" width="18" height="18" fill="#fff" stroke="#333" stroke-width="1.6"/><path d="M3.8 9.8L7.6 13.6L15.6 4.6" fill="none" stroke="#555" stroke-width="1.7"/></svg>
<svg style="left:1996px;top:1109.8999999999999px" width="20" height="20" viewBox="0 0 20 20"><rect x="0.85" y="0.85" width="18" height="18" fill="#fff" stroke="#333" stroke-width="1.6"/></svg>
<div style="left:2062.5px;top:1107.60px;width:71px;height:26px;overflow:hidden">
<span style="left:2.40px;top:-2.00px;font-weight:bold;font-size:16.5px;-webkit-text-stroke:0.2px;transform:scaleX(1.0596);transform-origin:0 50%;">ПДВ 20%</span>
</div>
<span style="left:704.11px;top:1134.10px;font-weight:bold;font-size:16.5px;-webkit-text-stroke:0.2px;transform:scaleX(1.1495);transform-origin:100% 50%;">90456</span>
<span style="left:757.80px;top:1134.10px;font-weight:bold;font-size:16.5px;-webkit-text-stroke:0.2px;transform:scaleX(1.0855);transform-origin:0 50%;">З/п Сплат 75мл черное дерево</span>
<span style="left:1277.40px;top:1134.10px;font-weight:bold;font-size:16.5px;-webkit-text-stroke:0.2px;transform:scaleX(1.0200);transform-origin:0 50%;">Сплат косм. ООО</span>
<span style="left:1675.44px;top:1134.10px;font-weight:bold;font-size:16.5px;-webkit-text-stroke:0.2px;transform:scaleX(1.1496);transform-origin:100% 50%;">134514</span>
<svg style="left:1744.2px;top:1138.3999999999999px" width="20" height="20" viewBox="0 0 20 20"><rect x="0.85" y="0.85" width="18" height="18" fill="#fff" stroke="#333" stroke-width="1.6"/></svg>
<svg style="left:1852.2px;top:1138.3999999999999px" width="20" height="20" viewBox="0 0 20 20"><rect x="0.85" y="0.85" width="18" height="18" fill="#fff" stroke="#333" stroke-width="1.6"/><path d="M3.8 9.8L7.6 13.6L15.6 4.6" fill="none" stroke="#555" stroke-width="1.7"/></svg>
<svg style="left:1996px;top:1138.3999999999999px" width="20" height="20" viewBox="0 0 20 20"><rect x="0.85" y="0.85" width="18" height="18" fill="#fff" stroke="#333" stroke-width="1.6"/></svg>
<div style="left:2062.5px;top:1136.10px;width:71px;height:26px;overflow:hidden">
<span style="left:2.40px;top:-2.00px;font-weight:bold;font-size:16.5px;-webkit-text-stroke:0.2px;transform:scaleX(1.0596);transform-origin:0 50%;">ПДВ 20%</span>
</div>
<span style="left:695.84px;top:1162.60px;font-weight:bold;font-size:16.5px;-webkit-text-stroke:0.2px;transform:scaleX(1.1688);transform-origin:100% 50%;">112081</span>
<span style="left:757.80px;top:1162.60px;font-weight:bold;font-size:16.5px;-webkit-text-stroke:0.2px;transform:scaleX(1.0630);transform-origin:0 50%;">Сплат Биомед з/п Супервайт 100мл</span>
<span style="left:1277.40px;top:1162.60px;font-weight:bold;font-size:16.5px;-webkit-text-stroke:0.2px;transform:scaleX(1.0200);transform-origin:0 50%;">Сплат косм. ООО</span>
<span style="left:1675.44px;top:1162.60px;font-weight:bold;font-size:16.5px;-webkit-text-stroke:0.2px;transform:scaleX(1.1496);transform-origin:100% 50%;">387705</span>
<svg style="left:1744.2px;top:1166.8999999999999px" width="20" height="20" viewBox="0 0 20 20"><rect x="0.85" y="0.85" width="18" height="18" fill="#fff" stroke="#333" stroke-width="1.6"/></svg>
<svg style="left:1852.2px;top:1166.8999999999999px" width="20" height="20" viewBox="0 0 20 20"><rect x="0.85" y="0.85" width="18" height="18" fill="#fff" stroke="#333" stroke-width="1.6"/><path d="M3.8 9.8L7.6 13.6L15.6 4.6" fill="none" stroke="#555" stroke-width="1.7"/></svg>
<svg style="left:1996px;top:1166.8999999999999px" width="20" height="20" viewBox="0 0 20 20"><rect x="0.85" y="0.85" width="18" height="18" fill="#fff" stroke="#333" stroke-width="1.6"/></svg>
<div style="left:2062.5px;top:1164.60px;width:71px;height:26px;overflow:hidden">
<span style="left:2.40px;top:-2.00px;font-weight:bold;font-size:16.5px;-webkit-text-stroke:0.2px;transform:scaleX(1.0596);transform-origin:0 50%;">ПДВ 20%</span>
</div>
<div style="left:1247px;top:398.4px;width:21.5px;height:19.6px;background:#e1e1e1;border:1px solid #adadad;box-sizing:border-box;"></div>
<svg style="left:1251px;top:406.0px" width="14" height="4" viewBox="0 0 14 4"><circle cx="2" cy="2" r="1.15" fill="#222"/><circle cx="7" cy="2" r="1.15" fill="#222"/><circle cx="12" cy="2" r="1.15" fill="#222"/></svg>
<div style="left:664.5px;top:1194.8px;width:1471.0px;height:31px;background:#f0f0f0;"></div>
<div style="left:664.5px;top:1194.8px;width:17px;height:31px;background:#f0f0f0;"></div>
<div style="left:681px;top:1194.8px;width:1.5px;height:31px;background:#a6a6a6;"></div>
<div style="left:664.5px;top:1226px;width:1471.0px;height:1.5px;background:#c4c4c4;"></div>
<div style="left:756px;top:1197px;width:515px;height:26.5px;background:#e6e8ea;border:1px solid #d9dbdd;box-sizing:border-box;"></div>
<span style="left:759.00px;top:1196.00px;font-weight:bold;font-size:16.5px;-webkit-text-stroke:0.2px;transform:scaleX(1.0710);transform-origin:0 50%;">Запис 7 із 255</span>
<div style="left:2136.5px;top:221px;width:22.5px;height:126px;background:#cdcdcd;"></div>
<svg style="left:2141px;top:204px" width="13" height="10" viewBox="0 0 13 10"><path d="M1.6 8L6.5 2.6L11.4 8" fill="none" stroke="#555" stroke-width="3.1"/></svg>
<svg style="left:2141px;top:1209.5px" width="13" height="10" viewBox="0 0 13 10"><path d="M1.6 2L6.5 7.4L11.4 2" fill="none" stroke="#555" stroke-width="3.1"/></svg>
<div style="left:690px;top:1229px;width:1150px;height:22px;background:#cdcdcd;"></div>
<svg style="left:672px;top:1233.5px" width="10" height="13" viewBox="0 0 10 13"><path d="M8 1.6L2.6 6.5L8 11.4" fill="none" stroke="#555" stroke-width="3.1"/></svg>
<svg style="left:2117px;top:1233.5px" width="10" height="13" viewBox="0 0 10 13"><path d="M2 1.6L7.4 6.5L2 11.4" fill="none" stroke="#555" stroke-width="3.1"/></svg>
<div style="left:675px;top:1264px;width:112px;height:33.5px;background:#cccccc;border:1.5px solid #bfbfbf;box-sizing:border-box;"></div>
<svg style="left:688px;top:1271px" width="21" height="21" viewBox="0 0 21 21"><path d="M8 1.5H13V8H19.5V13H13V19.5H8V13H1.5V8H8Z" fill="#c4c4c4" stroke="#a9a9a9" stroke-width="1.2"/></svg>
<span style="left:718.00px;top:1266.50px;font-size:18px;color:#fff;transform:scaleX(0.9266);transform-origin:0 50%;opacity:.9;">Додати</span>
<span style="left:717.00px;top:1265.50px;font-size:18px;color:#a0a0a0;transform:scaleX(0.9266);transform-origin:0 50%;">Додати</span>
<div style="left:799.5px;top:1264px;width:112.5px;height:33.5px;background:#e1e1e1;border:1.5px solid #adadad;box-sizing:border-box;"></div>
<svg style="left:804px;top:1270px" width="24" height="23" viewBox="0 0 24 23"><g stroke-linecap="round"><path d="M4 4L19.5 19M19.5 4L4 19" stroke="#e0502a" stroke-width="5.4"/><path d="M4 4L19.5 19M19.5 4L4 19" stroke="#f58a62" stroke-width="2.4"/></g></svg>
<span style="left:832.00px;top:1265.50px;font-size:18px;transform:scaleX(0.9210);transform-origin:0 50%;">Видалити</span>
<span style="left:929.00px;top:1265.50px;font-size:18px;transform:scaleX(0.9447);transform-origin:0 50%;">Товар:</span>
<div style="left:990px;top:1262.5px;width:1037.5px;height:35px;background:#fff;border:1.5px solid #7a7a7a;box-sizing:border-box;"></div>
<span style="left:996.00px;top:1265.00px;font-size:18px;transform:scaleX(1.0220);transform-origin:0 50%;">сенсодин</span>
<div style="left:2038px;top:1264px;width:112.5px;height:33.5px;background:#e1e1e1;border:1.5px solid #adadad;box-sizing:border-box;"></div>
<svg style="left:2053px;top:1268px" width="26" height="26" viewBox="0 0 26 26"><circle cx="10" cy="10" r="7.6" fill="#e6f0fa" stroke="#a9b4c0" stroke-width="1.6"/><circle cx="8" cy="8" r="3" fill="#fff" opacity=".8"/><path d="M15.5 15.5L23 23" stroke="#606060" stroke-width="3.4" stroke-linecap="round"/></svg>
<span style="left:2083.00px;top:1266.00px;font-size:18px;transform:scaleX(0.9398);transform-origin:0 50%;">Пошук</span>
<div style="left:5px;top:1311.5px;width:186.5px;height:34.5px;background:#f0f0f0;border:1.6px solid #111;box-sizing:border-box;"></div>
<span style="left:10.00px;top:1313.00px;font-size:16.5px;transform:scaleX(0.9728);transform-origin:0 50%;">Головна</span>
<div style="left:195px;top:1311.5px;width:188px;height:34.5px;background:#fdd0a2;border:1.6px solid #3c8ad8;box-sizing:border-box;"></div>
<span style="left:198.50px;top:1313.00px;font-size:16.5px;transform:scaleX(0.9925);transform-origin:0 50%;">Рекомендовані товари</span>
<div style="left:0px;top:1348.6px;width:2159px;height:1.4px;background:#dcdcdc;"></div>
<div style="left:297.5px;top:1352px;width:1.2px;height:23px;background:#d4d4d4;"></div>
<div style="left:603.5px;top:1352px;width:1.2px;height:23px;background:#d4d4d4;"></div>
<div style="left:661px;top:1352px;width:1.2px;height:23px;background:#d4d4d4;"></div>
<div style="left:1118px;top:1352px;width:1.2px;height:23px;background:#d4d4d4;"></div>
<svg style="left:4.5px;top:1354.5px" width="18" height="21" viewBox="0 0 18 21"><defs><linearGradient id="dbg" x1="0" y1="0" x2="1" y2="1"><stop offset="0" stop-color="#c9c6ea"/><stop offset="1" stop-color="#6763a6"/></linearGradient></defs><path d="M1.5 1.5L15 0.5L17.5 3V19.5L4 20.5L0.5 18Z" fill="url(#dbg)"/><path d="M1 7.2H16.8M1 9.9H16.8M1 12.6H16.8M1 15.3H16.8" stroke="#2a8ae6" stroke-width="1.7"/></svg>
<span style="left:30.00px;top:1350.50px;font-size:18px;transform:scaleX(0.9169);transform-origin:0 50%;">База даних: TASA3@TITAN</span>
<svg style="left:303.5px;top:1354.5px" width="17" height="21" viewBox="0 0 17 21"><circle cx="5.8" cy="5.6" r="5.2" fill="#e8320e"/><ellipse cx="9.3" cy="7.4" rx="5" ry="5.2" fill="#a9a9e2"/><path d="M6 10.5H12.6L11.6 13.6H7Z" fill="#f0a04a"/><path d="M0.8 21Q0.8 13.2 5 13.2L9.3 15L13.6 13.2Q16.4 13.2 16.4 21Z" fill="#9c9cdc"/><path d="M7 13.5L9.3 16L11.6 13.5" fill="#e6e6fa"/></svg>
<span style="left:329.00px;top:1350.50px;font-size:18px;transform:scaleX(0.8951);transform-origin:0 50%;">Користувач: GIFT</span>
<svg style="left:606.5px;top:1353.5px" width="22" height="22" viewBox="0 0 22 22"><path d="M3 4.5Q7 2 11.5 3L20.5 9.5V20H14L11 22H8L1 21V9Z" fill="#8e8ed2"/><path d="M3 5Q7 2.6 11.5 3.5L19 9L10 10.5L1.5 9Z" fill="#b9b9e6"/><path d="M12.5 1L14.5 4" stroke="#555" stroke-width="1.2"/><path d="M4 11L6.5 11.5L3.8 21L1.6 20.5Z" fill="#f4d21f"/><path d="M5.6 14.5L3.4 22" stroke="#222" stroke-width="1.4"/><path d="M12 15.5L14.5 16L12.5 22H10Z" fill="#f4d21f"/><path d="M13.6 18L12.2 22" stroke="#222" stroke-width="1.4"/></svg>
<span style="left:636.00px;top:1350.50px;font-size:18px;transform:scaleX(0.7988);transform-origin:0 50%;">1</span>
<span style="left:667.00px;top:1350.50px;font-size:18px;transform:scaleX(0.9181);transform-origin:0 50%;">Кассовый аппарат не подключен</span>
<span style="left:1124.00px;top:1350.50px;font-size:18px;transform:scaleX(0.8988);transform-origin:0 50%;">Зона: Склад [1]</span>
<svg style="left:0;top:0" width="2159" height="1375" viewBox="0 0 2159 1375"><polygon points="1224.8,680.3 1189.5,735.5 1153.8,791.3 1108.0,863.0 1066.0,928.7 1026.0,991.5 983.6,1058.4 926.7,1148.3 895.2,1198.3 862.5,1250.3 867.8,1253.7 900.7,1201.7 932.2,1151.7 988.7,1061.6 1030.7,994.5 1070.1,931.3 1111.3,865.0 1156.1,792.7 1191.0,736.5 1225.6,680.7" fill="#f40404"/><path d="M860.1 1260.4L860.3 1243Q860.4 1241.8 861.8 1241.9L863.4 1242Q864.3 1242.2 864.4 1243.2L864.8 1247L871 1250L874.6 1248.4Q875.8 1248.1 876.3 1249.6Q876.7 1251.2 875.4 1251.9Z" fill="#f40404"/></svg>
</body></html>
